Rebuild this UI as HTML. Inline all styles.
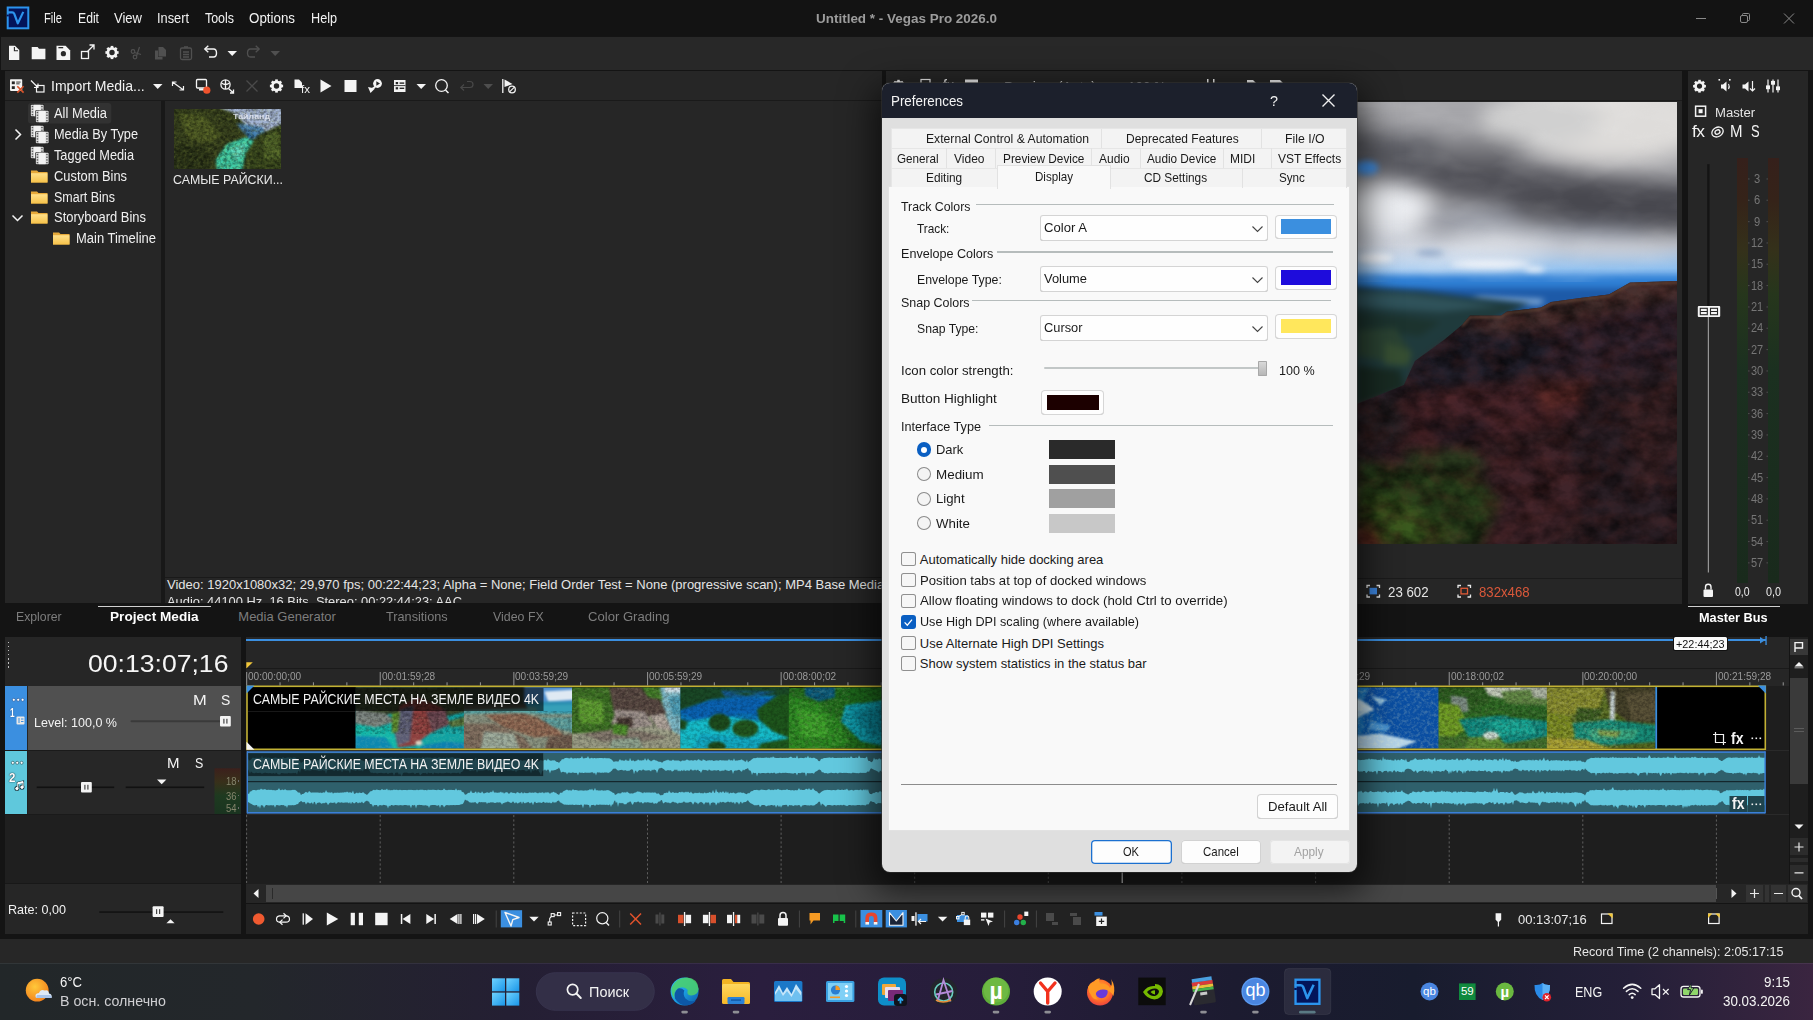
<!DOCTYPE html><html><head><meta charset="utf-8"><title>Vegas Pro</title><style>
html,body{margin:0;padding:0;background:#141414;overflow:hidden}
body{width:1813px;height:1020px;position:relative;font-family:"Liberation Sans",sans-serif}
.r{position:absolute;display:block}
.t{position:absolute;white-space:nowrap;transform-origin:0 50%;display:block}
</style></head><body>
<div class="r" style="left:0px;top:0px;width:1813px;height:36px;background:#131313;"></div>
<svg class="r" style="left:0px;top:0px;" width="36" height="36" viewBox="0 0 36 36"><rect x="7.7" y="7.5" width="20.6" height="20.8" fill="#03145a" stroke="#2c94ee" stroke-width="2"/><rect x="6.6" y="14.6" width="2.2" height="1.8" fill="#03145a"/><path d="M7 12.3H12.2Q13.7 12.3 14.3 13.8L17.8 23.4L23.3 11.9" fill="none" stroke="#2c94ee" stroke-width="2.2" stroke-linejoin="round"/></svg>
<span class="t" style="left:44.0px;top:8.4px;font-size:14px;line-height:20px;color:#f2f2f2;transform:scaleX(0.7980);">File</span>
<span class="t" style="left:78.0px;top:8.4px;font-size:14px;line-height:20px;color:#f2f2f2;transform:scaleX(0.8705);">Edit</span>
<span class="t" style="left:114.0px;top:8.4px;font-size:14px;line-height:20px;color:#f2f2f2;transform:scaleX(0.9305);">View</span>
<span class="t" style="left:157.0px;top:8.4px;font-size:14px;line-height:20px;color:#f2f2f2;transform:scaleX(0.9140);">Insert</span>
<span class="t" style="left:205.0px;top:8.4px;font-size:14px;line-height:20px;color:#f2f2f2;transform:scaleX(0.8874);">Tools</span>
<span class="t" style="left:249.0px;top:8.4px;font-size:14px;line-height:20px;color:#f2f2f2;transform:scaleX(0.9535);">Options</span>
<span class="t" style="left:311.0px;top:8.4px;font-size:14px;line-height:20px;color:#f2f2f2;transform:scaleX(0.9030);">Help</span>
<span class="t" style="left:816.0px;top:8.7px;font-size:13.5px;line-height:19px;color:#9c9c9c;font-weight:700;transform:scaleX(0.9969);">Untitled * - Vegas Pro 2026.0</span>
<svg class="r" style="left:1690px;top:8px;" width="120" height="20" viewBox="0 0 120 20"><g stroke="#8a8a8a" stroke-width="1" fill="none"><path d="M6 10.5H16"/><rect x="50.5" y="7.5" width="7" height="7" rx="1.5"/><path d="M52.5 7.5V6.5Q52.5 5.5 53.5 5.5H58.5Q59.5 5.5 59.5 6.5V11.5Q59.5 12.5 58.5 12.5H57.5"/><path d="M94 5.5L104 15.5M104 5.5L94 15.5"/></g></svg>
<div class="r" style="left:1px;top:37px;width:1812px;height:33px;background:#282828;"></div>
<svg class="r" style="left:0px;top:0px;overflow:visible;" width="1813" height="110" viewBox="0 0 1813 110"><path d="M9 45.8H15L19.3 50V59.9H9Z" fill="#f4f4f4"/><path d="M14.4 47V50.7H18" fill="none" stroke="#282828" stroke-width="1.1"/><path d="M31.7 47H37.6L39 48.7H45.4V59.2H31.7Z" fill="#f4f4f4"/><path d="M56.5 45.8H65.6L70.2 50.4V59.9H56.5Z" fill="#f4f4f4"/><circle cx="63.4" cy="53.7" r="2.6" fill="#282828"/><rect x="58.4" y="47" width="4.8" height="1.3" fill="#282828"/><g fill="none" stroke="#f4f4f4" stroke-width="1.3"><rect x="81.5" y="51.5" width="7" height="7"/><path d="M87 52L94 45M89.5 45H94V49.5"/></g><g transform="translate(112 52.5)"><circle r="4.09" fill="none" stroke="#f4f4f4" stroke-width="2.77"/><rect x="-1.32" y="-6.60" width="2.64" height="2.77" fill="#f4f4f4" transform="rotate(0)"/><rect x="-1.32" y="-6.60" width="2.64" height="2.77" fill="#f4f4f4" transform="rotate(45)"/><rect x="-1.32" y="-6.60" width="2.64" height="2.77" fill="#f4f4f4" transform="rotate(90)"/><rect x="-1.32" y="-6.60" width="2.64" height="2.77" fill="#f4f4f4" transform="rotate(135)"/><rect x="-1.32" y="-6.60" width="2.64" height="2.77" fill="#f4f4f4" transform="rotate(180)"/><rect x="-1.32" y="-6.60" width="2.64" height="2.77" fill="#f4f4f4" transform="rotate(225)"/><rect x="-1.32" y="-6.60" width="2.64" height="2.77" fill="#f4f4f4" transform="rotate(270)"/><rect x="-1.32" y="-6.60" width="2.64" height="2.77" fill="#f4f4f4" transform="rotate(315)"/></g><g fill="none" stroke="#505050" stroke-width="1.2"><circle cx="133" cy="51.5" r="1.8"/><circle cx="135" cy="57" r="1.8"/><path d="M134.5 52.5L141 54.5M136.5 56L139.5 47"/></g><path d="M158.5 47H163L166 50V56.5H158.5Z" fill="#505050"/><path d="M155 50.5H158V57H162.5V59.5H155Z" fill="#505050"/><g fill="none" stroke="#505050" stroke-width="1.3"><rect x="180.5" y="48" width="11" height="11.5" rx="1.5"/><path d="M183 52H189M183 54.5H189M183 57H189M184 47H188"/></g><path d="M205 49H213.5Q216.5 49 216.5 53Q216.5 57 213.5 57H209" fill="none" stroke="#f4f4f4" stroke-width="1.4"/><path d="M208.3 45.8L204.8 49L208.3 52.2" fill="none" stroke="#f4f4f4" stroke-width="1.4"/><path d="M227.5 51H237L232.2 56Z" fill="#f4f4f4"/><path d="M259 49H250.5Q247.5 49 247.5 53Q247.5 57 250.5 57H255" fill="none" stroke="#505050" stroke-width="1.3"/><path d="M255.7 45.8L259.2 49L255.7 52.2" fill="none" stroke="#505050" stroke-width="1.3"/><path d="M270.5 51H280L275.2 56Z" fill="#505050"/></svg>
<div class="r" style="left:5px;top:71px;width:877px;height:532px;background:#262626;"></div>
<div class="r" style="left:5px;top:100px;width:877px;height:1px;background:#1a1a1a;"></div>
<div class="r" style="left:161px;top:101px;width:4px;height:502px;background:#181818;"></div>
<svg class="r" style="left:0px;top:0px;" width="900" height="260" viewBox="0 0 900 260"><defs><linearGradient id="fold" x1="0" y1="0" x2="0" y2="1"><stop offset="0" stop-color="#ffe08a"/><stop offset="1" stop-color="#f6c24a"/></linearGradient></defs><rect x="10" y="79.3" width="12.2" height="11.6" rx="0.8" fill="#f4f4f4"/><g fill="#262626"><rect x="11.8" y="81.4" width="3" height="2.8"/><rect x="11.8" y="86.2" width="3" height="2.8"/><rect x="16.2" y="81.6" width="4.4" height="0.9"/><rect x="16.2" y="83.4" width="3.4" height="0.9"/></g><path d="M17.3 86.2L23.6 92.6M23.6 86.2L17.3 92.6" stroke="#d9552c" stroke-width="1.6" fill="none"/><g fill="none" stroke="#f4f4f4" stroke-width="1.2"><rect x="36.5" y="85.5" width="7.5" height="6.5"/><path d="M31 80.5L38 87.5M38 83.5V87.5H34"/></g><path d="M153 84H162.5L157.7 89Z" fill="#f4f4f4"/><g fill="none" stroke="#f4f4f4" stroke-width="1.2"><path d="M172.5 82L183.5 90M172.5 86V82H176.5M183.5 86V90H179.5"/></g><g fill="none" stroke="#f4f4f4" stroke-width="1.3"><rect x="196.5" y="79.5" width="10" height="8.5" rx="1"/></g><path d="M199 88.5H204V90.5H199Z" fill="#f4f4f4"/><circle cx="206.8" cy="90.2" r="3.6" fill="#f0532d"/><g fill="none" stroke="#f4f4f4" stroke-width="1.3"><circle cx="225.5" cy="84.5" r="4.6"/><path d="M221.5 83Q225.5 86 229.5 83M225.5 80V89"/><path d="M228.5 88.5L233.5 93M233.5 89.5V93H230"/></g><path d="M246.5 80.5L257.5 91.5M257.5 80.5L246.5 91.5" stroke="#4a4a4a" stroke-width="1.3" fill="none"/><g transform="translate(276.5 86)"><circle r="4.09" fill="none" stroke="#f4f4f4" stroke-width="2.77"/><rect x="-1.32" y="-6.60" width="2.64" height="2.77" fill="#f4f4f4" transform="rotate(0)"/><rect x="-1.32" y="-6.60" width="2.64" height="2.77" fill="#f4f4f4" transform="rotate(45)"/><rect x="-1.32" y="-6.60" width="2.64" height="2.77" fill="#f4f4f4" transform="rotate(90)"/><rect x="-1.32" y="-6.60" width="2.64" height="2.77" fill="#f4f4f4" transform="rotate(135)"/><rect x="-1.32" y="-6.60" width="2.64" height="2.77" fill="#f4f4f4" transform="rotate(180)"/><rect x="-1.32" y="-6.60" width="2.64" height="2.77" fill="#f4f4f4" transform="rotate(225)"/><rect x="-1.32" y="-6.60" width="2.64" height="2.77" fill="#f4f4f4" transform="rotate(270)"/><rect x="-1.32" y="-6.60" width="2.64" height="2.77" fill="#f4f4f4" transform="rotate(315)"/></g><path d="M294.5 79.5H299L302 82.5V88H294.5Z" fill="#f4f4f4"/><path d="M320.5 79.5L331.5 86L320.5 92.5Z" fill="#f4f4f4"/><rect x="344.5" y="80" width="12" height="12" fill="#f4f4f4"/><circle cx="377.5" cy="83.5" r="4.4" fill="#f4f4f4"/><path d="M376.3 81.3L380 83.5L376.3 85.7Z" fill="#262626"/><path d="M368 87L375 88.5L370.5 93Z" fill="#f4f4f4"/><path d="M372 89L375.5 86.5" stroke="#f4f4f4" stroke-width="1.6"/><rect x="394" y="80" width="11.5" height="12" fill="#f4f4f4"/><g fill="#262626"><rect x="395.7" y="82" width="2.4" height="2.2"/><rect x="395.7" y="87.2" width="2.4" height="2.2"/><rect x="399.6" y="82.4" width="4.6" height="1.4"/><rect x="399.6" y="87.6" width="4.6" height="1.4"/><rect x="394" y="85.2" width="11.5" height="0.9"/></g><path d="M416.5 84H426L421.2 89Z" fill="#f4f4f4"/><circle cx="441.5" cy="85.5" r="5.8" fill="none" stroke="#f4f4f4" stroke-width="1.3"/><path d="M445.5 90L448.5 93" stroke="#f4f4f4" stroke-width="1.5"/><path d="M461 87.5H470Q473 87.5 473 84.5Q473 81.5 470 81.5H467" fill="none" stroke="#484848" stroke-width="1.2"/><path d="M464 84.5L460.8 87.5L464 90.5" fill="none" stroke="#484848" stroke-width="1.2"/><path d="M483.5 84H493L488.2 89Z" fill="#4e4e4e"/><path d="M502.8 79V93" stroke="#f4f4f4" stroke-width="1.3"/><path d="M504.5 79.5L512.5 84L504.5 87Z" fill="#f4f4f4"/><circle cx="512" cy="89.5" r="3.3" fill="#262626" stroke="#f4f4f4" stroke-width="1.3"/><path d="M509.8 91.6L514.2 87.4" stroke="#f4f4f4" stroke-width="1.2"/><rect x="28" y="103" width="83.3" height="20.5" rx="3" fill="#323232"/><g transform="translate(31 104)"><g transform="translate(-0.2 0.8)"><rect x="-0.6" y="-0.6" width="14" height="12.6" rx="1" fill="#1a1a1a"/><rect x="0" y="0" width="12.8" height="11.4" rx="0.8" fill="#d9d9d9"/><rect x="3.1" y="0" width="6.6" height="11.4" fill="#f2f2f2"/><rect x="0.9" y="1.1" width="1.5" height="1.3" fill="#555"/><rect x="10.4" y="1.1" width="1.5" height="1.3" fill="#555"/><rect x="0.9" y="3.8" width="1.5" height="1.3" fill="#555"/><rect x="10.4" y="3.8" width="1.5" height="1.3" fill="#555"/><rect x="0.9" y="6.5" width="1.5" height="1.3" fill="#555"/><rect x="10.4" y="6.5" width="1.5" height="1.3" fill="#555"/><rect x="0.9" y="9.2" width="1.5" height="1.3" fill="#555"/><rect x="10.4" y="9.2" width="1.5" height="1.3" fill="#555"/></g><g transform="translate(4.8 6.8)"><rect x="-0.6" y="-0.6" width="14" height="12.6" rx="1" fill="#1a1a1a"/><rect x="0" y="0" width="12.8" height="11.4" rx="0.8" fill="#d9d9d9"/><rect x="3.1" y="0" width="6.6" height="11.4" fill="#f2f2f2"/><rect x="0.9" y="1.1" width="1.5" height="1.3" fill="#555"/><rect x="10.4" y="1.1" width="1.5" height="1.3" fill="#555"/><rect x="0.9" y="3.8" width="1.5" height="1.3" fill="#555"/><rect x="10.4" y="3.8" width="1.5" height="1.3" fill="#555"/><rect x="0.9" y="6.5" width="1.5" height="1.3" fill="#555"/><rect x="10.4" y="6.5" width="1.5" height="1.3" fill="#555"/><rect x="0.9" y="9.2" width="1.5" height="1.3" fill="#555"/><rect x="10.4" y="9.2" width="1.5" height="1.3" fill="#555"/></g></g><g transform="translate(31 125)"><g transform="translate(-0.2 0.8)"><rect x="-0.6" y="-0.6" width="14" height="12.6" rx="1" fill="#1a1a1a"/><rect x="0" y="0" width="12.8" height="11.4" rx="0.8" fill="#d9d9d9"/><rect x="3.1" y="0" width="6.6" height="11.4" fill="#f2f2f2"/><rect x="0.9" y="1.1" width="1.5" height="1.3" fill="#555"/><rect x="10.4" y="1.1" width="1.5" height="1.3" fill="#555"/><rect x="0.9" y="3.8" width="1.5" height="1.3" fill="#555"/><rect x="10.4" y="3.8" width="1.5" height="1.3" fill="#555"/><rect x="0.9" y="6.5" width="1.5" height="1.3" fill="#555"/><rect x="10.4" y="6.5" width="1.5" height="1.3" fill="#555"/><rect x="0.9" y="9.2" width="1.5" height="1.3" fill="#555"/><rect x="10.4" y="9.2" width="1.5" height="1.3" fill="#555"/></g><g transform="translate(4.8 6.8)"><rect x="-0.6" y="-0.6" width="14" height="12.6" rx="1" fill="#1a1a1a"/><rect x="0" y="0" width="12.8" height="11.4" rx="0.8" fill="#d9d9d9"/><rect x="3.1" y="0" width="6.6" height="11.4" fill="#f2f2f2"/><rect x="0.9" y="1.1" width="1.5" height="1.3" fill="#555"/><rect x="10.4" y="1.1" width="1.5" height="1.3" fill="#555"/><rect x="0.9" y="3.8" width="1.5" height="1.3" fill="#555"/><rect x="10.4" y="3.8" width="1.5" height="1.3" fill="#555"/><rect x="0.9" y="6.5" width="1.5" height="1.3" fill="#555"/><rect x="10.4" y="6.5" width="1.5" height="1.3" fill="#555"/><rect x="0.9" y="9.2" width="1.5" height="1.3" fill="#555"/><rect x="10.4" y="9.2" width="1.5" height="1.3" fill="#555"/></g></g><g transform="translate(31 146)"><g transform="translate(-0.2 0.8)"><rect x="-0.6" y="-0.6" width="14" height="12.6" rx="1" fill="#1a1a1a"/><rect x="0" y="0" width="12.8" height="11.4" rx="0.8" fill="#d9d9d9"/><rect x="3.1" y="0" width="6.6" height="11.4" fill="#f2f2f2"/><rect x="0.9" y="1.1" width="1.5" height="1.3" fill="#555"/><rect x="10.4" y="1.1" width="1.5" height="1.3" fill="#555"/><rect x="0.9" y="3.8" width="1.5" height="1.3" fill="#555"/><rect x="10.4" y="3.8" width="1.5" height="1.3" fill="#555"/><rect x="0.9" y="6.5" width="1.5" height="1.3" fill="#555"/><rect x="10.4" y="6.5" width="1.5" height="1.3" fill="#555"/><rect x="0.9" y="9.2" width="1.5" height="1.3" fill="#555"/><rect x="10.4" y="9.2" width="1.5" height="1.3" fill="#555"/></g><g transform="translate(4.8 6.8)"><rect x="-0.6" y="-0.6" width="14" height="12.6" rx="1" fill="#1a1a1a"/><rect x="0" y="0" width="12.8" height="11.4" rx="0.8" fill="#d9d9d9"/><rect x="3.1" y="0" width="6.6" height="11.4" fill="#f2f2f2"/><rect x="0.9" y="1.1" width="1.5" height="1.3" fill="#555"/><rect x="10.4" y="1.1" width="1.5" height="1.3" fill="#555"/><rect x="0.9" y="3.8" width="1.5" height="1.3" fill="#555"/><rect x="10.4" y="3.8" width="1.5" height="1.3" fill="#555"/><rect x="0.9" y="6.5" width="1.5" height="1.3" fill="#555"/><rect x="10.4" y="6.5" width="1.5" height="1.3" fill="#555"/><rect x="0.9" y="9.2" width="1.5" height="1.3" fill="#555"/><rect x="10.4" y="9.2" width="1.5" height="1.3" fill="#555"/></g></g><g transform="translate(31 170)"><path d="M0 0.5H6L7.5 2H16.5V12.5H0Z" fill="#e6a93a"/><path d="M0 3.2H16.5V12.5H0Z" fill="url(#fold)"/></g><g transform="translate(31 191)"><path d="M0 0.5H6L7.5 2H16.5V12.5H0Z" fill="#e6a93a"/><path d="M0 3.2H16.5V12.5H0Z" fill="url(#fold)"/></g><g transform="translate(31 211)"><path d="M0 0.5H6L7.5 2H16.5V12.5H0Z" fill="#e6a93a"/><path d="M0 3.2H16.5V12.5H0Z" fill="url(#fold)"/></g><g transform="translate(53 232)"><path d="M0 0.5H6L7.5 2H16.5V12.5H0Z" fill="#e6a93a"/><path d="M0 3.2H16.5V12.5H0Z" fill="url(#fold)"/></g><path d="M15.5 129.5L20.5 134.5L15.5 139.5" fill="none" stroke="#f4f4f4" stroke-width="1.5"/><path d="M12.5 215.5L17.5 220.5L22.5 215.5" fill="none" stroke="#f4f4f4" stroke-width="1.5"/></svg>
<span class="t" style="left:50.6px;top:75.8px;font-size:14.8px;line-height:21px;color:#f2f2f2;transform:scaleX(0.9494);">Import Media...</span>
<span class="t" style="left:301.0px;top:81.5px;font-size:11px;line-height:15px;color:#f2f2f2;transform:scaleX(1.0519);">fx</span>
<span class="t" style="left:54.0px;top:103.3px;font-size:14px;line-height:20px;color:#f0f0f0;transform:scaleX(0.9205);">All Media</span>
<span class="t" style="left:54.0px;top:124.3px;font-size:14px;line-height:20px;color:#f0f0f0;transform:scaleX(0.9097);">Media By Type</span>
<span class="t" style="left:54.0px;top:145.3px;font-size:14px;line-height:20px;color:#f0f0f0;transform:scaleX(0.9097);">Tagged Media</span>
<span class="t" style="left:54.0px;top:166.3px;font-size:14px;line-height:20px;color:#f0f0f0;transform:scaleX(0.9199);">Custom Bins</span>
<span class="t" style="left:54.0px;top:186.8px;font-size:14px;line-height:20px;color:#f0f0f0;transform:scaleX(0.8910);">Smart Bins</span>
<span class="t" style="left:54.0px;top:207.3px;font-size:14px;line-height:20px;color:#f0f0f0;transform:scaleX(0.9237);">Storyboard Bins</span>
<span class="t" style="left:76.0px;top:228.3px;font-size:14px;line-height:20px;color:#f0f0f0;transform:scaleX(0.9264);">Main Timeline</span>
<div class="r" style="left:174px;top:109px;width:107px;height:60px;overflow:hidden;background:#3a4a22"><svg width="107" height="60" viewBox="0 0 107 60"><defs><filter id="tb" color-interpolation-filters="sRGB"><feGaussianBlur stdDeviation="1.3"/></filter><filter id="tbn" color-interpolation-filters="sRGB" x="0" y="0" width="100%" height="100%"><feTurbulence type="fractalNoise" baseFrequency="0.3 0.34" numOctaves="3" seed="3"/><feColorMatrix type="matrix" values="0 0 0 0 0  0 0 0 0 0  0 0 0 0 0  2.4 0 0 0 -0.8"/></filter><filter id="tbl" color-interpolation-filters="sRGB" x="0" y="0" width="100%" height="100%"><feTurbulence type="fractalNoise" baseFrequency="0.3 0.34" numOctaves="3" seed="9"/><feColorMatrix type="matrix" values="0 0 0 0 0.75  0 0 0 0 0.8  0 0 0 0 0.3  0 2.4 0 0 -1.0"/></filter></defs><rect width="107" height="60" fill="#39441f"/><g filter="url(#tb)"><path d="M40 -3H110V20L86 25L72 16L60 4Z" fill="#a5b6d6"/><path d="M62 14L88 18L92 24L80 30L70 24Z" fill="#4d86b6"/><path d="M70 22L82 26L76 32Z" fill="#2f6a9a"/><path d="M50 36L72 28L80 32L72 44L68 63H44L40 50Z" fill="#3ecaa6"/><path d="M56 40L72 34L70 44L62 52Z" fill="#5fdcc0"/><path d="M-3 -3H44L62 12L66 26L52 36L42 50L40 63H-3Z" fill="#353f1d"/><path d="M4 4L30 6L48 26L36 34L14 30Z" fill="#4d5a24"/><path d="M0 36L30 38L38 52L34 63H0Z" fill="#2a3318"/><path d="M84 26L110 14V63H68L72 44L80 32Z" fill="#37461d"/><path d="M90 28L104 22L107 50L90 50Z" fill="#4e6228"/></g><rect width="107" height="60" filter="url(#tbn)" opacity=".4"/><rect width="107" height="60" filter="url(#tbl)" opacity=".16"/></svg></div>
<span class="t" style="left:233.0px;top:111.5px;font-size:7.5px;line-height:10px;color:rgba(235,238,246,.8);font-weight:700;transform:scaleX(1.1782);">Тайланд</span>
<span class="t" style="left:173.0px;top:170.5px;font-size:13px;line-height:18px;color:#e8e8e8;transform:scaleX(0.9536);">САМЫЕ РАЙСКИ...</span>
<div class="r" style="left:165px;top:576.8px;width:717px;height:1px;background:#1a1a1a;"></div>
<span class="t" style="left:167.0px;top:575.5px;font-size:13px;line-height:18px;color:#e4e4e4;">Video: 1920x1080x32; 29,970 fps; 00:22:44;23; Alpha = None; Field Order Test = None (progressive scan); MP4 Base Media</span>
<div class="r" style="left:167px;top:594px;width:715px;height:9px;overflow:hidden">
<span class="t" style="left:0.0px;top:-1.5px;font-size:13px;line-height:18px;color:#e4e4e4;transform:scaleX(0.9908);">Audio: 44100 Hz, 16 Bits, Stereo; 00:22:44;23; AAC</span>
</div>
<div class="r" style="left:886px;top:71px;width:796px;height:532.5px;background:#262626;"></div>
<div class="r" style="left:886px;top:100px;width:796px;height:1px;background:#1b1b1b;"></div>
<div class="r" style="left:886px;top:577.5px;width:796px;height:1px;background:#1b1b1b;"></div>
<svg class="r" style="left:0px;top:0px;" width="1400" height="100" viewBox="0 0 1400 100"><g transform="translate(898.5 86)"><circle r="3.84" fill="none" stroke="#f4f4f4" stroke-width="2.60"/><rect x="-1.24" y="-6.20" width="2.48" height="2.60" fill="#f4f4f4" transform="rotate(0)"/><rect x="-1.24" y="-6.20" width="2.48" height="2.60" fill="#f4f4f4" transform="rotate(45)"/><rect x="-1.24" y="-6.20" width="2.48" height="2.60" fill="#f4f4f4" transform="rotate(90)"/><rect x="-1.24" y="-6.20" width="2.48" height="2.60" fill="#f4f4f4" transform="rotate(135)"/><rect x="-1.24" y="-6.20" width="2.48" height="2.60" fill="#f4f4f4" transform="rotate(180)"/><rect x="-1.24" y="-6.20" width="2.48" height="2.60" fill="#f4f4f4" transform="rotate(225)"/><rect x="-1.24" y="-6.20" width="2.48" height="2.60" fill="#f4f4f4" transform="rotate(270)"/><rect x="-1.24" y="-6.20" width="2.48" height="2.60" fill="#f4f4f4" transform="rotate(315)"/></g><g fill="none" stroke="#f0f0f0" stroke-width="1.2"><rect x="921" y="79.5" width="9" height="11"/></g><rect x="965" y="79.5" width="13" height="11" fill="#f0f0f0"/><g fill="#f0f0f0"><rect x="1207" y="79" width="1.5" height="12"/><rect x="1213" y="79" width="1.5" height="12"/><path d="M1247 80H1253L1256 83V92H1247Z"/><path d="M1270 80H1280L1283 83V92H1270Z"/></g></svg>
<span class="t" style="left:943.0px;top:74.5px;font-size:16px;line-height:22px;color:#f0f0f0;transform:scaleX(0.8839);">fx</span>
<span class="t" style="left:1004.0px;top:75.5px;font-size:15px;line-height:21px;color:#d8d8d8;transform:scaleX(0.9353);">Preview (Auto)</span>
<span class="t" style="left:1128.0px;top:75.5px;font-size:15px;line-height:21px;color:#d8d8d8;transform:scaleX(0.8935);">100 %</span>
<div class="r" style="left:891px;top:102px;width:786px;height:442px;background:#3a2a2e;overflow:hidden"><svg class="r" style="left:0;top:0" width="786" height="442" viewBox="891 102 786 442"><defs><filter id="b10" color-interpolation-filters="sRGB" x="-30%" y="-30%" width="160%" height="160%"><feGaussianBlur stdDeviation="10"/></filter><filter id="b6" color-interpolation-filters="sRGB" x="-30%" y="-30%" width="160%" height="160%"><feGaussianBlur stdDeviation="6"/></filter><filter id="b3" color-interpolation-filters="sRGB" x="-30%" y="-30%" width="160%" height="160%"><feGaussianBlur stdDeviation="3"/></filter><filter id="b15" color-interpolation-filters="sRGB" x="-30%" y="-30%" width="160%" height="160%"><feGaussianBlur stdDeviation="1.4"/></filter><filter id="nz" color-interpolation-filters="sRGB" x="0" y="0" width="100%" height="100%"><feTurbulence type="fractalNoise" baseFrequency="0.045 0.06" numOctaves="4" seed="7"/><feColorMatrix type="matrix" values="0 0 0 0 0  0 0 0 0 0  0 0 0 0 0  1.6 0 0 0 -0.45"/></filter><filter id="nz2" color-interpolation-filters="sRGB" x="0" y="0" width="100%" height="100%"><feTurbulence type="fractalNoise" baseFrequency="0.05 0.07" numOctaves="4" seed="23"/><feColorMatrix type="matrix" values="0 0 0 0 0.40  0 0 0 0 0.17  0 0 0 0 0.16  0 1.7 0 0 -0.62"/></filter><filter id="nz3" color-interpolation-filters="sRGB" x="0" y="0" width="100%" height="100%"><feTurbulence type="fractalNoise" baseFrequency="0.02 0.045" numOctaves="3" seed="5"/><feColorMatrix type="matrix" values="0 0 0 0 1  0 0 0 0 1  0 0 0 0 1  1.8 0 0 0 -0.75"/></filter><linearGradient id="sky" gradientUnits="userSpaceOnUse" x1="0" y1="102" x2="0" y2="300"><stop offset="0" stop-color="#b9b8b8"/><stop offset="0.25" stop-color="#8c8c92"/><stop offset="0.5" stop-color="#7d8089"/><stop offset="0.72" stop-color="#c4cad6"/><stop offset="0.84" stop-color="#8fc0f0"/><stop offset="0.93" stop-color="#3a88dc"/><stop offset="1" stop-color="#1e5cae"/></linearGradient><linearGradient id="mt" gradientUnits="userSpaceOnUse" x1="1400" y1="300" x2="1680" y2="544"><stop offset="0" stop-color="#292430"/><stop offset="0.45" stop-color="#382226"/><stop offset="1" stop-color="#261c22"/></linearGradient><clipPath id="mtc"><path d="M1357 404L1404 385L1415 361L1444 340L1462 325L1470 315.5L1501 315.5L1507 311.5L1541 307.6L1551 302L1580 298L1609 294.5L1630 282.6L1680 281V548H1350V404Z"/></clipPath></defs><rect x="1340" y="100" width="345" height="210" fill="url(#sky)"/><g filter="url(#b10)"><rect x="1330" y="90" width="370" height="150" fill="#a4a4a8"/><ellipse cx="1610" cy="118" rx="110" ry="44" fill="#dedcda"/><ellipse cx="1540" cy="120" rx="60" ry="26" fill="#d0d0d0"/><ellipse cx="1400" cy="108" rx="70" ry="16" fill="#a6a6aa"/><path d="M1335 128Q1400 132 1450 146Q1520 166 1600 176Q1650 182 1700 180V232Q1620 232 1560 220Q1500 206 1450 192Q1400 176 1335 170Z" fill="#4d4d54"/><ellipse cx="1610" cy="206" rx="100" ry="20" fill="#47474e"/><ellipse cx="1500" cy="184" rx="70" ry="18" fill="#505057"/><ellipse cx="1400" cy="152" rx="60" ry="18" fill="#5a5b62"/><ellipse cx="1480" cy="150" rx="50" ry="12" fill="#77777c"/><ellipse cx="1385" cy="208" rx="46" ry="22" fill="#eceef2"/><ellipse cx="1380" cy="238" rx="60" ry="9" fill="#d2d6de"/><ellipse cx="1500" cy="241" rx="60" ry="10" fill="#dde0e6"/><ellipse cx="1610" cy="246" rx="66" ry="8" fill="#d0d4dc"/><ellipse cx="1475" cy="220" rx="50" ry="8" fill="#8a8f9c"/><ellipse cx="1580" cy="232" rx="70" ry="5" fill="#8e94a2"/><ellipse cx="1450" cy="262" rx="100" ry="7" fill="#e2e8f2"/></g><g filter="url(#b3)"><ellipse cx="1366" cy="168" rx="12" ry="7" fill="#3d8be0"/><ellipse cx="1375" cy="258" rx="18" ry="5" fill="#eef1f6"/><ellipse cx="1490" cy="264" rx="40" ry="4" fill="#eef2f8"/><ellipse cx="1535" cy="270" rx="10" ry="3" fill="#eef2f8"/><ellipse cx="1430" cy="253" rx="14" ry="3" fill="#8fa6c6"/></g><g filter="url(#b3)"><rect x="1340" y="276" width="345" height="16" fill="#2f7fd4"/><rect x="1340" y="288" width="345" height="40" fill="#1d5aa8"/><path d="M1480 297L1545 300L1540 304L1470 300Z" fill="#a8c8e6"/></g><g filter="url(#b3)"><path d="M1340 286L1420 291L1470 297L1530 304L1500 318L1440 345L1415 365L1405 390L1340 410Z" fill="#1f3a3c"/><path d="M1340 290L1410 294L1460 300L1500 306L1440 312L1380 308L1340 306Z" fill="#2f525a"/><path d="M1340 312L1400 316L1440 322L1420 336L1370 330L1340 332Z" fill="#1c332e"/><path d="M1357 330L1395 328L1410 350L1390 362L1357 356Z" fill="#2a4232"/><path d="M1385 342L1412 352L1408 366L1384 364Z" fill="#364e32"/><path d="M1357 366L1400 370L1404 388L1357 404Z" fill="#182a22"/></g><g clip-path="url(#mtc)"><rect x="1340" y="270" width="345" height="280" fill="url(#mt)"/><g filter="url(#b6)"><path d="M1462 325L1501 316L1541 308L1580 298L1630 283L1680 281V300L1630 306L1580 318L1520 330L1470 340Z" fill="#4a3230"/><path d="M1415 362L1462 330L1520 334L1580 340L1560 372L1440 388L1404 388Z" fill="#22202c"/><path d="M1560 330L1680 300V370L1600 380L1540 372Z" fill="#322430"/><path d="M1380 400L1450 388L1540 384L1600 384L1580 420L1500 440L1420 452L1370 450Z" fill="#46242a"/><path d="M1530 388L1590 380L1600 400L1545 410Z" fill="#5c2a28"/><path d="M1425 420L1480 418L1495 440L1440 446Z" fill="#2a1c24"/><path d="M1357 404L1400 396L1410 440L1357 456Z" fill="#2a2226"/><path d="M1590 380L1680 360V548H1600L1560 470Z" fill="#2c2027"/><path d="M1620 400L1680 380V450L1640 500Z" fill="#3a2428"/><path d="M1470 460L1560 440L1590 500L1540 548H1480L1500 500Z" fill="#40242a"/><path d="M1357 460L1400 466L1470 470L1500 500L1480 548H1357Z" fill="#2a421c"/><path d="M1357 490L1400 500L1450 530L1440 548H1357Z" fill="#3a5a1e"/><path d="M1400 452L1470 448L1490 470L1420 474Z" fill="#2a3a1e"/><path d="M1357 524L1376 530L1384 548H1357Z" fill="#6a3020"/></g><rect x="1350" y="280" width="335" height="270" filter="url(#nz)" opacity=".7"/><rect x="1350" y="280" width="335" height="270" filter="url(#nz2)" opacity=".3"/><g filter="url(#b15)" fill="none" stroke="#7a5640" stroke-width="2" opacity=".8"><path d="M1462 326L1470 317L1501 317L1507 313L1541 309L1551 303.5L1580 299.5L1609 296L1630 284L1680 282.5"/></g></g><rect x="1350" y="102" width="335" height="180" filter="url(#nz3)" opacity=".10"/></svg></div>
<svg class="r" style="left:0px;top:0px;pointer-events:none" width="1813" height="620" viewBox="0 0 1813 620"><g fill="none" stroke="#e8e8e8" stroke-width="1.3"><path d="M1367 588V585.5H1370M1376.5 585.5H1379.5V588M1379.5 594.5V597H1376.5M1370 597H1367V594.5"/></g><rect x="1369.5" y="587.8" width="7.5" height="6.6" fill="#3d86e0"/><g fill="none" stroke="#e8e8e8" stroke-width="1.3"><path d="M1458 588V585.5H1461M1467.5 585.5H1470.5V588M1470.5 594.5V597H1467.5M1461 597H1458V594.5"/></g><rect x="1461" y="588.3" width="6.5" height="5.6" fill="none" stroke="#e05a36" stroke-width="1.3"/></svg>
<span class="t" style="left:1387.6px;top:581.8px;font-size:14px;line-height:20px;color:#e6e6e6;transform:scaleX(0.9482);">23 602</span>
<span class="t" style="left:1479.4px;top:581.8px;font-size:14px;line-height:20px;color:#d9583a;transform:scaleX(0.9421);">832x468</span>
<div class="r" style="left:1687.5px;top:71px;width:120.7px;height:532.5px;background:#262626;"></div>
<svg class="r" style="left:0px;top:0px;pointer-events:none" width="1813" height="620" viewBox="0 0 1813 620"><g transform="translate(1699.5 86.2)"><circle r="3.97" fill="none" stroke="#f4f4f4" stroke-width="2.69"/><rect x="-1.28" y="-6.40" width="2.56" height="2.69" fill="#f4f4f4" transform="rotate(0)"/><rect x="-1.28" y="-6.40" width="2.56" height="2.69" fill="#f4f4f4" transform="rotate(45)"/><rect x="-1.28" y="-6.40" width="2.56" height="2.69" fill="#f4f4f4" transform="rotate(90)"/><rect x="-1.28" y="-6.40" width="2.56" height="2.69" fill="#f4f4f4" transform="rotate(135)"/><rect x="-1.28" y="-6.40" width="2.56" height="2.69" fill="#f4f4f4" transform="rotate(180)"/><rect x="-1.28" y="-6.40" width="2.56" height="2.69" fill="#f4f4f4" transform="rotate(225)"/><rect x="-1.28" y="-6.40" width="2.56" height="2.69" fill="#f4f4f4" transform="rotate(270)"/><rect x="-1.28" y="-6.40" width="2.56" height="2.69" fill="#f4f4f4" transform="rotate(315)"/></g><path d="M1721 84.5H1723L1726.5 81.5V91.5L1723 88.5H1721Z" fill="#f4f4f4"/><g fill="#f4f4f4"><rect x="1718.5" y="79" width="1.6" height="1.6"/><rect x="1729" y="79" width="1.6" height="1.6"/></g><path d="M1728.5 84Q1730 86.5 1728.5 89" stroke="#f4f4f4" fill="none" stroke-width="1.1"/><path d="M1742.5 84.5H1745L1748.5 81.5V91.5L1745 88.5H1742.5Z" fill="#f4f4f4"/><path d="M1752.5 81V91M1750 88.5L1752.5 91L1755 88.5" stroke="#f4f4f4" fill="none" stroke-width="1.2"/><g stroke="#f4f4f4" stroke-width="1.2" fill="#f4f4f4"><path d="M1768 79.5V92.5M1773 79.5V92.5M1778 79.5V92.5" fill="none"/><rect x="1766.6" y="86" width="2.8" height="2.6"/><rect x="1771.6" y="81.5" width="2.8" height="2.6"/><rect x="1776.6" y="87" width="2.8" height="2.6"/></g><rect x="1695.6" y="106.2" width="10" height="10" fill="none" stroke="#f4f4f4" stroke-width="1.5"/><rect x="1698.6" y="109.2" width="4" height="4" fill="#f4f4f4"/><g fill="none" stroke="#f4f4f4" stroke-width="1.3" transform="rotate(-30 1717.5 132)"><ellipse cx="1717.5" cy="132" rx="6" ry="4.6"/><ellipse cx="1717.5" cy="132" rx="2.6" ry="2"/></g><rect x="1707.2" y="164.2" width="2.4" height="143" fill="#141414"/><rect x="1707.8" y="316" width="1.1" height="256.5" fill="#a2a2a2"/><rect x="1697.8" y="306" width="22.4" height="11" rx="1" fill="#f4f4f4"/><g fill="none" stroke="#262626" stroke-width="1.1"><rect x="1700.3" y="308.3" width="7" height="6.4"/><rect x="1710.5" y="308.3" width="7" height="6.4"/><path d="M1700.3 311.5H1707.3M1710.5 311.5H1717.5"/></g><defs><linearGradient id="mtr" x1="0" y1="0" x2="0" y2="1"><stop offset="0" stop-color="#35201b"/><stop offset="0.1" stop-color="#352319"/><stop offset="0.22" stop-color="#34311a"/><stop offset="0.32" stop-color="#26361c"/><stop offset="0.5" stop-color="#1b3020"/><stop offset="1" stop-color="#192a1c"/></linearGradient></defs><rect x="1737" y="158" width="11" height="425" fill="url(#mtr)"/><rect x="1768" y="158" width="11" height="425" fill="url(#mtr)"/><rect x="1748.3" y="178.4" width="1.1" height="1.1" fill="#5a5a5a"/><rect x="1766.6" y="178.4" width="1.1" height="1.1" fill="#5a5a5a"/><rect x="1748.3" y="199.7" width="1.1" height="1.1" fill="#5a5a5a"/><rect x="1766.6" y="199.7" width="1.1" height="1.1" fill="#5a5a5a"/><rect x="1748.3" y="221.1" width="1.1" height="1.1" fill="#5a5a5a"/><rect x="1766.6" y="221.1" width="1.1" height="1.1" fill="#5a5a5a"/><rect x="1748.3" y="242.4" width="1.1" height="1.1" fill="#5a5a5a"/><rect x="1766.6" y="242.4" width="1.1" height="1.1" fill="#5a5a5a"/><rect x="1748.3" y="263.7" width="1.1" height="1.1" fill="#5a5a5a"/><rect x="1766.6" y="263.7" width="1.1" height="1.1" fill="#5a5a5a"/><rect x="1748.3" y="285.0" width="1.1" height="1.1" fill="#5a5a5a"/><rect x="1766.6" y="285.0" width="1.1" height="1.1" fill="#5a5a5a"/><rect x="1748.3" y="306.4" width="1.1" height="1.1" fill="#5a5a5a"/><rect x="1766.6" y="306.4" width="1.1" height="1.1" fill="#5a5a5a"/><rect x="1748.3" y="327.7" width="1.1" height="1.1" fill="#5a5a5a"/><rect x="1766.6" y="327.7" width="1.1" height="1.1" fill="#5a5a5a"/><rect x="1748.3" y="349.0" width="1.1" height="1.1" fill="#5a5a5a"/><rect x="1766.6" y="349.0" width="1.1" height="1.1" fill="#5a5a5a"/><rect x="1748.3" y="370.4" width="1.1" height="1.1" fill="#5a5a5a"/><rect x="1766.6" y="370.4" width="1.1" height="1.1" fill="#5a5a5a"/><rect x="1748.3" y="391.7" width="1.1" height="1.1" fill="#5a5a5a"/><rect x="1766.6" y="391.7" width="1.1" height="1.1" fill="#5a5a5a"/><rect x="1748.3" y="413.0" width="1.1" height="1.1" fill="#5a5a5a"/><rect x="1766.6" y="413.0" width="1.1" height="1.1" fill="#5a5a5a"/><rect x="1748.3" y="434.4" width="1.1" height="1.1" fill="#5a5a5a"/><rect x="1766.6" y="434.4" width="1.1" height="1.1" fill="#5a5a5a"/><rect x="1748.3" y="455.7" width="1.1" height="1.1" fill="#5a5a5a"/><rect x="1766.6" y="455.7" width="1.1" height="1.1" fill="#5a5a5a"/><rect x="1748.3" y="477.0" width="1.1" height="1.1" fill="#5a5a5a"/><rect x="1766.6" y="477.0" width="1.1" height="1.1" fill="#5a5a5a"/><rect x="1748.3" y="498.3" width="1.1" height="1.1" fill="#5a5a5a"/><rect x="1766.6" y="498.3" width="1.1" height="1.1" fill="#5a5a5a"/><rect x="1748.3" y="519.7" width="1.1" height="1.1" fill="#5a5a5a"/><rect x="1766.6" y="519.7" width="1.1" height="1.1" fill="#5a5a5a"/><rect x="1748.3" y="541.0" width="1.1" height="1.1" fill="#5a5a5a"/><rect x="1766.6" y="541.0" width="1.1" height="1.1" fill="#5a5a5a"/><rect x="1748.3" y="562.3" width="1.1" height="1.1" fill="#5a5a5a"/><rect x="1766.6" y="562.3" width="1.1" height="1.1" fill="#5a5a5a"/><rect x="1703.5" y="589.5" width="9.5" height="7.5" rx="1" fill="#f4f4f4"/><path d="M1705.5 589.5V587Q1705.5 584.3 1708.2 584.3Q1711 584.3 1711 587V589.5" fill="none" stroke="#f4f4f4" stroke-width="1.4"/></svg>
<span class="t" style="left:1715.4px;top:103.7px;font-size:12.5px;line-height:18px;color:#e6e6e6;transform:scaleX(1.0498);">Master</span>
<span class="t" style="left:1691.5px;top:119.5px;font-size:17px;line-height:24px;color:#f4f4f4;transform:scaleX(1.0210);letter-spacing:-0.5px;">fx</span>
<span class="t" style="left:1730.3px;top:121.0px;font-size:16px;line-height:22px;color:#f4f4f4;transform:scaleX(0.9379);">M</span>
<span class="t" style="left:1751.2px;top:121.0px;font-size:16px;line-height:22px;color:#f4f4f4;transform:scaleX(0.8058);">S</span>
<span class="t" style="left:1754.2px;top:170.9px;font-size:12px;line-height:17px;color:#767676;transform:scaleX(0.9291);">3</span>
<span class="t" style="left:1754.2px;top:192.2px;font-size:12px;line-height:17px;color:#767676;transform:scaleX(0.9291);">6</span>
<span class="t" style="left:1754.2px;top:213.6px;font-size:12px;line-height:17px;color:#767676;transform:scaleX(0.9291);">9</span>
<span class="t" style="left:1751.2px;top:234.9px;font-size:12px;line-height:17px;color:#767676;transform:scaleX(0.9141);">12</span>
<span class="t" style="left:1751.2px;top:256.2px;font-size:12px;line-height:17px;color:#767676;transform:scaleX(0.9141);">15</span>
<span class="t" style="left:1751.2px;top:277.5px;font-size:12px;line-height:17px;color:#767676;transform:scaleX(0.9141);">18</span>
<span class="t" style="left:1751.2px;top:298.9px;font-size:12px;line-height:17px;color:#767676;transform:scaleX(0.9141);">21</span>
<span class="t" style="left:1751.2px;top:320.2px;font-size:12px;line-height:17px;color:#767676;transform:scaleX(0.9141);">24</span>
<span class="t" style="left:1751.2px;top:341.5px;font-size:12px;line-height:17px;color:#767676;transform:scaleX(0.9141);">27</span>
<span class="t" style="left:1751.2px;top:362.9px;font-size:12px;line-height:17px;color:#767676;transform:scaleX(0.9141);">30</span>
<span class="t" style="left:1751.2px;top:384.2px;font-size:12px;line-height:17px;color:#767676;transform:scaleX(0.9141);">33</span>
<span class="t" style="left:1751.2px;top:405.5px;font-size:12px;line-height:17px;color:#767676;transform:scaleX(0.9141);">36</span>
<span class="t" style="left:1751.2px;top:426.9px;font-size:12px;line-height:17px;color:#767676;transform:scaleX(0.9141);">39</span>
<span class="t" style="left:1751.2px;top:448.2px;font-size:12px;line-height:17px;color:#767676;transform:scaleX(0.9141);">42</span>
<span class="t" style="left:1751.2px;top:469.5px;font-size:12px;line-height:17px;color:#767676;transform:scaleX(0.9141);">45</span>
<span class="t" style="left:1751.2px;top:490.8px;font-size:12px;line-height:17px;color:#767676;transform:scaleX(0.9141);">48</span>
<span class="t" style="left:1751.2px;top:512.2px;font-size:12px;line-height:17px;color:#767676;transform:scaleX(0.9141);">51</span>
<span class="t" style="left:1751.2px;top:533.5px;font-size:12px;line-height:17px;color:#767676;transform:scaleX(0.9141);">54</span>
<span class="t" style="left:1751.2px;top:554.8px;font-size:12px;line-height:17px;color:#767676;transform:scaleX(0.9141);">57</span>
<span class="t" style="left:1734.6px;top:583.0px;font-size:12.5px;line-height:18px;color:#ececec;transform:scaleX(0.8403);">0,0</span>
<span class="t" style="left:1765.5px;top:583.0px;font-size:12.5px;line-height:18px;color:#ececec;transform:scaleX(0.8633);">0,0</span>
<div class="r" style="left:98px;top:605.5px;width:113px;height:1.6px;background:#cfcfcf;"></div>
<span class="t" style="left:16.4px;top:608.3px;font-size:13px;line-height:18px;color:#7d7d7d;transform:scaleX(0.9421);">Explorer</span>
<span class="t" style="left:109.7px;top:608.3px;font-size:13px;line-height:18px;color:#ffffff;font-weight:700;transform:scaleX(1.0483);">Project Media</span>
<span class="t" style="left:238.3px;top:608.3px;font-size:13px;line-height:18px;color:#7d7d7d;">Media Generator</span>
<span class="t" style="left:385.7px;top:608.3px;font-size:13px;line-height:18px;color:#7d7d7d;transform:scaleX(0.9763);">Transitions</span>
<span class="t" style="left:493.3px;top:608.3px;font-size:13px;line-height:18px;color:#7d7d7d;transform:scaleX(0.9524);">Video FX</span>
<span class="t" style="left:588.0px;top:608.3px;font-size:13px;line-height:18px;color:#7d7d7d;transform:scaleX(1.0072);">Color Grading</span>
<div class="r" style="left:1687.7px;top:605.5px;width:92.5px;height:1.6px;background:#cfcfcf;"></div>
<span class="t" style="left:1699.3px;top:608.5px;font-size:13px;line-height:18px;color:#ffffff;font-weight:700;transform:scaleX(0.9790);">Master Bus</span>
<div class="r" style="left:5px;top:636.5px;width:236px;height:247px;background:#262626;"></div>
<div class="r" style="left:5px;top:750px;width:236px;height:133.5px;background:#1f1f1f;"></div>
<div class="r" style="left:7.6px;top:641.5px;width:1.7px;height:1.7px;background:#bdbdbd;"></div>
<div class="r" style="left:7.6px;top:645.6px;width:1.7px;height:1.7px;background:#bdbdbd;"></div>
<div class="r" style="left:7.6px;top:649.7px;width:1.7px;height:1.7px;background:#bdbdbd;"></div>
<div class="r" style="left:7.6px;top:653.8px;width:1.7px;height:1.7px;background:#bdbdbd;"></div>
<div class="r" style="left:7.6px;top:657.9px;width:1.7px;height:1.7px;background:#bdbdbd;"></div>
<div class="r" style="left:7.6px;top:662.0px;width:1.7px;height:1.7px;background:#bdbdbd;"></div>
<div class="r" style="left:7.6px;top:666.1px;width:1.7px;height:1.7px;background:#bdbdbd;"></div>
<span class="t" style="left:88.3px;top:646.8px;font-size:24px;line-height:34px;color:#f6f6f6;transform:scaleX(1.1075);">00:13:07;16</span>
<div class="r" style="left:5px;top:685.5px;width:22.4px;height:64.5px;background:#3b8fe0;"></div>
<div class="r" style="left:27.7px;top:685.5px;width:213.3px;height:64.5px;background:#505050;"></div>
<div class="r" style="left:5px;top:750px;width:236px;height:1px;background:#1a1a1a;"></div>
<div class="r" style="left:5px;top:751px;width:22.4px;height:63px;background:#5fc8dc;"></div>
<div class="r" style="left:27.7px;top:751px;width:213.3px;height:63px;background:#272727;"></div>
<div class="r" style="left:5px;top:814px;width:236px;height:1px;background:#1a1a1a;"></div>
<svg class="r" style="left:0px;top:0px;" width="250" height="900" viewBox="0 0 250 900"><circle cx="13.8" cy="699.8" r="1.5" fill="#ffffff" stroke="#2a5a9a" stroke-width="0.7"/><circle cx="12.8" cy="762.8" r="1.5" fill="#ffffff" stroke="#2a5a66" stroke-width="0.7"/><circle cx="18.2" cy="699.8" r="1.5" fill="#ffffff" stroke="#2a5a9a" stroke-width="0.7"/><circle cx="17.2" cy="762.8" r="1.5" fill="#ffffff" stroke="#2a5a66" stroke-width="0.7"/><circle cx="22.6" cy="699.8" r="1.5" fill="#ffffff" stroke="#2a5a9a" stroke-width="0.7"/><circle cx="21.6" cy="762.8" r="1.5" fill="#ffffff" stroke="#2a5a66" stroke-width="0.7"/><rect x="16.5" y="716.5" width="8" height="8" rx="1" fill="#e8e8e8"/><rect x="18.5" y="718" width="1" height="5" fill="#3b8fe0"/><rect x="21" y="718.5" width="2.5" height="1" fill="#3b8fe0"/><rect x="21" y="721" width="2.5" height="1" fill="#3b8fe0"/><g stroke="#1e3a42" stroke-width="2.2" fill="#1e3a42"><path d="M17.8 788.5V782.8L23 781.6V787" fill="none"/><circle cx="16.9" cy="788.6" r="1.4"/><circle cx="22" cy="787.2" r="1.4"/></g><g stroke="#ffffff" stroke-width="1" fill="#ffffff"><path d="M17.8 788.5V782.8L23 781.6V787" fill="none"/><path d="M17.8 783.4L23 782.2" fill="none" stroke-width="1.6"/><circle cx="16.9" cy="788.6" r="1.2"/><circle cx="22" cy="787.2" r="1.2"/></g><rect x="130.5" y="720.3" width="92" height="2" rx="1" fill="#3a3a3a"/><rect x="220" y="716" width="10.8" height="10.4" rx="1" fill="#f4f4f4"/><rect x="223.3" y="718.8" width="1.2" height="4.8" fill="#444"/><rect x="226.3" y="718.8" width="1.2" height="4.8" fill="#444"/><rect x="36.7" y="786.5" width="77.5" height="1.6" fill="#111"/><rect x="125.7" y="786.5" width="78.5" height="1.6" fill="#111"/><rect x="81" y="782" width="10.8" height="10.4" rx="1" fill="#f4f4f4"/><rect x="84.3" y="784.8" width="1.2" height="4.8" fill="#444"/><rect x="87.3" y="784.8" width="1.2" height="4.8" fill="#444"/><path d="M157 779.5H166.4L161.7 784.2Z" fill="#f4f4f4"/><defs><linearGradient id="sm" x1="0" y1="0" x2="0" y2="1"><stop offset="0" stop-color="#3c201c"/><stop offset="0.3" stop-color="#38301a"/><stop offset="0.6" stop-color="#1e3a20"/><stop offset="1" stop-color="#1a3420"/></linearGradient></defs><rect x="214.5" y="768.3" width="26" height="45.7" fill="url(#sm)"/></svg>
<span class="t" style="left:9.5px;top:704.2px;font-size:12.5px;line-height:18px;color:#ffffff;font-weight:700;transform:scaleX(0.6618);text-shadow:0 0 1.5px #1a3a6a;">1</span>
<span class="t" style="left:8.5px;top:768.5px;font-size:12.5px;line-height:18px;color:#ffffff;font-weight:700;transform:scaleX(0.9207);text-shadow:0 0 1.5px #12303a,0 0 1px #12303a;">2</span>
<span class="t" style="left:192.5px;top:689.3px;font-size:15.5px;line-height:22px;color:#f4f4f4;transform:scaleX(1.0611);">M</span>
<span class="t" style="left:221.2px;top:689.3px;font-size:15.5px;line-height:22px;color:#f4f4f4;transform:scaleX(0.8995);">S</span>
<span class="t" style="left:166.7px;top:752.3px;font-size:15.5px;line-height:22px;color:#f4f4f4;transform:scaleX(0.9682);">M</span>
<span class="t" style="left:195.0px;top:752.3px;font-size:15.5px;line-height:22px;color:#f4f4f4;transform:scaleX(0.8028);">S</span>
<span class="t" style="left:34.2px;top:712.7px;font-size:13.5px;line-height:19px;color:#f2f2f2;transform:scaleX(0.9294);">Level: 100,0 %</span>
<span class="t" style="left:225.8px;top:774.2px;font-size:11px;line-height:15px;color:#85856c;transform:scaleX(0.8583);">18</span>
<span class="t" style="left:225.8px;top:788.5px;font-size:11px;line-height:15px;color:#85856c;transform:scaleX(0.8583);">36</span>
<span class="t" style="left:225.8px;top:800.8px;font-size:11px;line-height:15px;color:#85856c;transform:scaleX(0.8583);">54</span>
<div class="r" style="left:238px;top:780px;width:1px;height:1.5px;background:#6c6c6c;"></div>
<div class="r" style="left:238px;top:794.5px;width:1px;height:1.5px;background:#6c6c6c;"></div>
<div class="r" style="left:238px;top:807px;width:1px;height:1.5px;background:#6c6c6c;"></div>
<div class="r" style="left:5px;top:883.8px;width:236px;height:50px;background:#262626;"></div>
<div class="r" style="left:5px;top:883.3px;width:236px;height:0.8px;background:#181818;"></div>
<span class="t" style="left:8.3px;top:900.3px;font-size:13.5px;line-height:19px;color:#f2f2f2;transform:scaleX(0.9312);">Rate: 0,00</span>
<svg class="r" style="left:90px;top:900px;" width="150" height="30" viewBox="0 0 150 30"><rect x="9.3" y="11.4" width="124" height="1.3" fill="#0e0e0e"/><rect x="62.6" y="6.3" width="11" height="10.6" rx="1" fill="#f4f4f4"/><rect x="66" y="9.2" width="1.2" height="4.8" fill="#444"/><rect x="69" y="9.2" width="1.2" height="4.8" fill="#444"/><path d="M76.4 23.3H84.6L80.5 19.2Z" fill="#f4f4f4"/></svg>
<div class="r" style="left:246px;top:636.5px;width:1542.5px;height:49px;background:#262626;"></div>
<div class="r" style="left:246px;top:685.5px;width:1542.5px;height:198px;background:#1e1e1e;"></div>
<div class="r" style="left:246px;top:667.6px;width:1542.5px;height:1px;background:#1a1a1a;"></div>
<div class="r" style="left:246px;top:750px;width:1542.5px;height:1px;background:#2a2a2a;"></div>
<div class="r" style="left:246px;top:814px;width:1542.5px;height:1px;background:#2a2a2a;"></div>
<div class="r" style="left:246px;top:639.3px;width:1520px;height:2px;background:#3b8fe0;"></div>
<svg class="r" style="left:1755px;top:634px;" width="16" height="14" viewBox="0 0 16 14"><path d="M5 3L10 6.3L5 9.6Z" fill="#3b8fe0"/><rect x="10.4" y="2" width="1.3" height="9" fill="#3b8fe0"/></svg>
<div class="r" style="left:1673.6px;top:637px;width:53px;height:13.2px;background:#fafafa;border-radius:1.5px;box-shadow:0 0 0 1px #111"></div>
<span class="t" style="left:1676.0px;top:635.9px;font-size:11.5px;line-height:16px;color:#111;transform:scaleX(0.9422);">+22:44;23</span>
<svg class="r" style="left:245px;top:660px;" width="10" height="9" viewBox="0 0 10 9"><path d="M1.3 2.2H7.8L1.3 8.4Z" fill="#f2c73a"/></svg>
<span class="t" style="left:248.0px;top:668.3px;font-size:11.5px;line-height:16px;color:#9a9a9a;transform:scaleX(0.8758);">00:00:00;00</span>
<span class="t" style="left:381.6px;top:668.3px;font-size:11.5px;line-height:16px;color:#9a9a9a;transform:scaleX(0.8758);">00:01:59;28</span>
<span class="t" style="left:515.2px;top:668.3px;font-size:11.5px;line-height:16px;color:#9a9a9a;transform:scaleX(0.8758);">00:03:59;29</span>
<span class="t" style="left:648.9px;top:668.3px;font-size:11.5px;line-height:16px;color:#9a9a9a;transform:scaleX(0.8758);">00:05:59;29</span>
<span class="t" style="left:782.5px;top:668.3px;font-size:11.5px;line-height:16px;color:#9a9a9a;transform:scaleX(0.8758);">00:08:00;02</span>
<span class="t" style="left:916.1px;top:668.3px;font-size:11.5px;line-height:16px;color:#9a9a9a;transform:scaleX(0.8758);">00:10:00;00</span>
<span class="t" style="left:1049.7px;top:668.3px;font-size:11.5px;line-height:16px;color:#9a9a9a;transform:scaleX(0.8883);">00:11:59;28</span>
<span class="t" style="left:1183.3px;top:668.3px;font-size:11.5px;line-height:16px;color:#9a9a9a;transform:scaleX(0.8758);">00:13:59;29</span>
<span class="t" style="left:1317.0px;top:668.3px;font-size:11.5px;line-height:16px;color:#9a9a9a;transform:scaleX(0.8758);">00:15:59;29</span>
<span class="t" style="left:1450.6px;top:668.3px;font-size:11.5px;line-height:16px;color:#9a9a9a;transform:scaleX(0.8758);">00:18:00;02</span>
<span class="t" style="left:1584.2px;top:668.3px;font-size:11.5px;line-height:16px;color:#9a9a9a;transform:scaleX(0.8758);">00:20:00;00</span>
<span class="t" style="left:1717.8px;top:668.3px;font-size:11.5px;line-height:16px;color:#9a9a9a;transform:scaleX(0.8758);">00:21:59;28</span>
<svg class="r" style="left:0px;top:0px;" width="1813" height="900" viewBox="0 0 1813 900"><rect x="246.1" y="672" width="1.1" height="13.5" fill="#8c8c8c"/><rect x="279.5" y="682.3" width="1.1" height="3.2" fill="#8c8c8c"/><rect x="312.9" y="682.3" width="1.1" height="3.2" fill="#8c8c8c"/><rect x="346.3" y="682.3" width="1.1" height="3.2" fill="#8c8c8c"/><path d="M246.6 815V883" stroke="#5e5e5e" stroke-width="1" stroke-dasharray="2.2 2.2" fill="none"/><rect x="379.7" y="672" width="1.1" height="13.5" fill="#8c8c8c"/><rect x="413.1" y="682.3" width="1.1" height="3.2" fill="#8c8c8c"/><rect x="446.5" y="682.3" width="1.1" height="3.2" fill="#8c8c8c"/><rect x="479.9" y="682.3" width="1.1" height="3.2" fill="#8c8c8c"/><path d="M380.2 815V883" stroke="#5e5e5e" stroke-width="1" stroke-dasharray="2.2 2.2" fill="none"/><rect x="513.3" y="672" width="1.1" height="13.5" fill="#8c8c8c"/><rect x="546.7" y="682.3" width="1.1" height="3.2" fill="#8c8c8c"/><rect x="580.1" y="682.3" width="1.1" height="3.2" fill="#8c8c8c"/><rect x="613.5" y="682.3" width="1.1" height="3.2" fill="#8c8c8c"/><path d="M513.8 815V883" stroke="#5e5e5e" stroke-width="1" stroke-dasharray="2.2 2.2" fill="none"/><rect x="647.0" y="672" width="1.1" height="13.5" fill="#8c8c8c"/><rect x="680.4" y="682.3" width="1.1" height="3.2" fill="#8c8c8c"/><rect x="713.8" y="682.3" width="1.1" height="3.2" fill="#8c8c8c"/><rect x="747.2" y="682.3" width="1.1" height="3.2" fill="#8c8c8c"/><path d="M647.5 815V883" stroke="#5e5e5e" stroke-width="1" stroke-dasharray="2.2 2.2" fill="none"/><rect x="780.6" y="672" width="1.1" height="13.5" fill="#8c8c8c"/><rect x="814.0" y="682.3" width="1.1" height="3.2" fill="#8c8c8c"/><rect x="847.4" y="682.3" width="1.1" height="3.2" fill="#8c8c8c"/><rect x="880.8" y="682.3" width="1.1" height="3.2" fill="#8c8c8c"/><path d="M781.1 815V883" stroke="#5e5e5e" stroke-width="1" stroke-dasharray="2.2 2.2" fill="none"/><rect x="914.2" y="672" width="1.1" height="13.5" fill="#8c8c8c"/><rect x="947.6" y="682.3" width="1.1" height="3.2" fill="#8c8c8c"/><rect x="981.0" y="682.3" width="1.1" height="3.2" fill="#8c8c8c"/><rect x="1014.4" y="682.3" width="1.1" height="3.2" fill="#8c8c8c"/><path d="M914.7 815V883" stroke="#5e5e5e" stroke-width="1" stroke-dasharray="2.2 2.2" fill="none"/><rect x="1047.8" y="672" width="1.1" height="13.5" fill="#8c8c8c"/><rect x="1081.2" y="682.3" width="1.1" height="3.2" fill="#8c8c8c"/><rect x="1114.6" y="682.3" width="1.1" height="3.2" fill="#8c8c8c"/><rect x="1148.0" y="682.3" width="1.1" height="3.2" fill="#8c8c8c"/><path d="M1048.3 815V883" stroke="#5e5e5e" stroke-width="1" stroke-dasharray="2.2 2.2" fill="none"/><rect x="1181.4" y="672" width="1.1" height="13.5" fill="#8c8c8c"/><rect x="1214.8" y="682.3" width="1.1" height="3.2" fill="#8c8c8c"/><rect x="1248.2" y="682.3" width="1.1" height="3.2" fill="#8c8c8c"/><rect x="1281.6" y="682.3" width="1.1" height="3.2" fill="#8c8c8c"/><path d="M1181.9 815V883" stroke="#5e5e5e" stroke-width="1" stroke-dasharray="2.2 2.2" fill="none"/><rect x="1315.1" y="672" width="1.1" height="13.5" fill="#8c8c8c"/><rect x="1348.5" y="682.3" width="1.1" height="3.2" fill="#8c8c8c"/><rect x="1381.9" y="682.3" width="1.1" height="3.2" fill="#8c8c8c"/><rect x="1415.3" y="682.3" width="1.1" height="3.2" fill="#8c8c8c"/><path d="M1315.6 815V883" stroke="#5e5e5e" stroke-width="1" stroke-dasharray="2.2 2.2" fill="none"/><rect x="1448.7" y="672" width="1.1" height="13.5" fill="#8c8c8c"/><rect x="1482.1" y="682.3" width="1.1" height="3.2" fill="#8c8c8c"/><rect x="1515.5" y="682.3" width="1.1" height="3.2" fill="#8c8c8c"/><rect x="1548.9" y="682.3" width="1.1" height="3.2" fill="#8c8c8c"/><path d="M1449.2 815V883" stroke="#5e5e5e" stroke-width="1" stroke-dasharray="2.2 2.2" fill="none"/><rect x="1582.3" y="672" width="1.1" height="13.5" fill="#8c8c8c"/><rect x="1615.7" y="682.3" width="1.1" height="3.2" fill="#8c8c8c"/><rect x="1649.1" y="682.3" width="1.1" height="3.2" fill="#8c8c8c"/><rect x="1682.5" y="682.3" width="1.1" height="3.2" fill="#8c8c8c"/><path d="M1582.8 815V883" stroke="#5e5e5e" stroke-width="1" stroke-dasharray="2.2 2.2" fill="none"/><rect x="1715.9" y="672" width="1.1" height="13.5" fill="#8c8c8c"/><rect x="1749.3" y="682.3" width="1.1" height="3.2" fill="#8c8c8c"/><rect x="1782.7" y="682.3" width="1.1" height="3.2" fill="#8c8c8c"/><path d="M1716.4 815V883" stroke="#5e5e5e" stroke-width="1" stroke-dasharray="2.2 2.2" fill="none"/><defs><clipPath id="vc"><rect x="248" y="687.5" width="1516.5" height="61"/></clipPath><filter id="tb2" color-interpolation-filters="sRGB" x="-10%" y="-10%" width="120%" height="120%"><feGaussianBlur stdDeviation="1.3"/></filter><filter id="tb1" color-interpolation-filters="sRGB" x="-10%" y="-10%" width="120%" height="120%"><feGaussianBlur stdDeviation="0.7"/></filter><filter id="tnd" color-interpolation-filters="sRGB" x="0" y="0" width="100%" height="100%"><feTurbulence type="fractalNoise" baseFrequency="0.3 0.34" numOctaves="3" seed="11"/><feColorMatrix type="matrix" values="0 0 0 0 0  0 0 0 0 0  0 0 0 0 0  2.4 0 0 0 -0.85"/></filter><filter id="tnl" color-interpolation-filters="sRGB" x="0" y="0" width="100%" height="100%"><feTurbulence type="fractalNoise" baseFrequency="0.3 0.34" numOctaves="3" seed="31"/><feColorMatrix type="matrix" values="0 0 0 0 1  0 0 0 0 1  0 0 0 0 0.8  0 2.4 0 0 -1.0"/></filter></defs><rect x="247" y="686.3" width="1518.3" height="63" fill="#000"/><svg x="355.6" y="687.5" width="108.5" height="61" viewBox="0 0 108 61" preserveAspectRatio="none" overflow="hidden"><rect width="108" height="61" fill="#0f9fa0"/><g filter="url(#tb2)"><path d="M-4 -4H112V24L84 30L60 22L40 26L0 30Z" fill="#3d4a30"/><path d="M-2 22L30 26L40 34L20 40L-2 36Z" fill="#7c8580"/><path d="M-2 36L20 40L40 36L46 64H-2Z" fill="#12b6a8"/><path d="M-2 48L30 50L40 64H-2Z" fill="#0d88b0"/><path d="M44 18L62 10L86 20L94 36L74 46L66 52L60 58L42 60L38 40Z" fill="#8d3f3e"/><path d="M44 22L58 18L54 54L42 58L38 40Z" fill="#5b5c74"/><path d="M70 24L90 22L92 38L76 44Z" fill="#6a4650"/><path d="M36 26L44 24L42 44L36 46Z" fill="#5a8a2c"/><path d="M92 34L112 28V40L96 42Z" fill="#55723a"/><path d="M60 58L74 46L94 40L112 38V64H60Z" fill="#11a2a2"/><path d="M66 58L90 54L112 56V64H66Z" fill="#0d80b0"/><ellipse cx="63" cy="55.5" rx="3.4" ry="2.4" fill="#ddd2c2"/></g><path d="M0 0H108V46H0Z" filter="url(#tnd)" opacity="0.303"/><path d="M0 30H108V61H0Z" filter="url(#tnl)" opacity="0.108"/></svg><svg x="463.9" y="687.5" width="108.5" height="61" viewBox="0 0 108 61" preserveAspectRatio="none" overflow="hidden"><rect width="108" height="61" fill="#7d8f84"/><g filter="url(#tb2)"><path d="M-4 -4H70V18L40 22L-4 20Z" fill="#2e3a30"/><path d="M60 -4H112V16H60Z" fill="#4e8fd0"/><path d="M80 4L112 2V12L84 14Z" fill="#dfe9f3"/><path d="M62 14H112V20H62Z" fill="#2a8fb0"/><path d="M-4 19H112V27H-4Z" fill="#5aa6a6"/><path d="M70 18L112 17V26L74 25Z" fill="#36a0b8"/><path d="M-4 18L60 17L64 21L-4 23Z" fill="#4a4a40"/><path d="M-4 27L50 25L112 30V64H-4Z" fill="#86907f"/><path d="M20 27L60 26L84 34L100 48L70 50L40 40Z" fill="#8a6450"/><path d="M-4 36L30 36L60 50L70 64H-4Z" fill="#7c6a5c"/><path d="M20 44L50 46L56 64H16Z" fill="#9aa89a"/><path d="M74 30L112 30V46L90 40Z" fill="#5a9c9c"/><path d="M84 50L112 46V64H80Z" fill="#6a564a"/></g><path d="M0 24H108V61H0Z" filter="url(#tnd)" opacity="0.248"/><path d="M0 26H108V61H0Z" filter="url(#tnl)" opacity="0.15"/></svg><svg x="572.2" y="687.5" width="108.5" height="61" viewBox="0 0 108 61" preserveAspectRatio="none" overflow="hidden"><rect width="108" height="61" fill="#3d6a26"/><g filter="url(#tb2)"><path d="M84 -4H112V52L98 42L92 24Z" fill="#7ab6c6"/><path d="M92 -4H112V5H92Z" fill="#cfe0ea"/><path d="M96 10L112 8V30L100 28Z" fill="#4a9ab4"/><path d="M32 -4H70L86 10L94 26L74 30L44 26L30 10Z" fill="#54443f"/><path d="M40 22L72 24L82 38L56 44L38 36Z" fill="#9a8e8a"/><path d="M44 30L60 30L60 40L46 40Z" fill="#40322e"/><path d="M-4 -4H36L42 28L34 48L-4 46Z" fill="#3a6e22"/><path d="M6 10L30 14L32 36L8 36Z" fill="#5a9a2e"/><path d="M66 -4H86L90 12L76 10Z" fill="#3f7a26"/><path d="M-4 46L40 44L80 38L100 44L112 50V64H-4Z" fill="#989a84"/><path d="M10 46L40 42L70 44L96 50L70 54L30 54Z" fill="#7d7268"/><path d="M76 28L92 26L100 44L84 40Z" fill="#b0a49c"/><path d="M40 52L66 50L72 64H36Z" fill="#8a9e8c"/><path d="M42 36L56 38L54 48L40 46Z" fill="#4a8a28"/></g><path d="M0 0H108V61H0Z" filter="url(#tnd)" opacity="0.275"/><path d="M0 0H108V61H0Z" filter="url(#tnl)" opacity="0.12"/></svg><svg x="680.5" y="687.5" width="108.5" height="61" viewBox="0 0 108 61" preserveAspectRatio="none" overflow="hidden"><rect width="108" height="61" fill="#0b74b6"/><g filter="url(#tb2)"><path d="M-4 -4H112V8L64 8L30 12L-4 24Z" fill="#1a4826"/><path d="M40 3L96 4L70 10L44 9Z" fill="#155a90"/><path d="M48 5L80 5L66 8Z" fill="#1e5228"/><path d="M-4 24L30 13L64 10L112 12V30L60 26L20 34Z" fill="#0a62b2"/><path d="M-4 36L40 28L82 34L112 44V64H-4Z" fill="#16bcca"/><path d="M20 46L60 50L100 52V64H10Z" fill="#12a8c2"/><ellipse cx="39" cy="35" rx="11" ry="9" fill="#1d4c1e"/><ellipse cx="64.5" cy="41" rx="13" ry="9" fill="#22561f"/><path d="M76 22L96 8L112 6V52L92 44L78 32Z" fill="#1e561c"/><ellipse cx="36" cy="59" rx="9" ry="5" fill="#1d4c1e"/><path d="M-4 30L7 34L5 42L-4 42Z" fill="#1d4c1e"/><path d="M80 56L112 50V64H76Z" fill="#1f5a1e"/></g><path d="M0 0H108V61H0Z" filter="url(#tnd)" opacity="0.22"/></svg><svg x="788.8" y="687.5" width="108.5" height="61" viewBox="0 0 108 61" preserveAspectRatio="none" overflow="hidden"><rect width="108" height="61" fill="#226c1c"/><g filter="url(#tb2)"><path d="M16 -4H46V10L30 14L16 8Z" fill="#0a5878"/><path d="M56 18L100 10L112 12V50L92 58L72 54L52 34Z" fill="#0f98a8"/><path d="M62 24L98 18L104 42L82 50Z" fill="#0c8496"/><path d="M-4 8L30 16L50 34L60 56L30 64H-4Z" fill="#2a8620"/><path d="M8 20L36 28L40 50L12 50Z" fill="#3a9e28"/><path d="M46 -4H112V10L72 16L50 12Z" fill="#1e681c"/><path d="M100 30L112 28V64H70L92 58Z" fill="#1e681c"/></g><path d="M0 0H108V61H0Z" filter="url(#tnd)" opacity="0.275"/><path d="M0 0H60V61H0Z" filter="url(#tnl)" opacity="0.12"/></svg><svg x="897.1" y="687.5" width="108.5" height="61" viewBox="0 0 108 61" preserveAspectRatio="none" overflow="hidden"><rect width="108" height="61" fill="#0b5cb2"/><g filter="url(#tb2)"><path d="M20 -4H112V64H60L50 30Z" fill="#0a4ea2"/><path d="M-4 -4H40L30 20L34 40L20 64H-4Z" fill="#1b7ac6"/><path d="M-4 8L30 12L44 22L20 32L-4 28Z" fill="#c6dfee"/><path d="M2 20L40 24L20 34L2 32Z" fill="#a8cce4"/><path d="M8 50L50 46L86 54L60 64H12Z" fill="#b4d4ea"/><path d="M40 8L56 12L50 18Z" fill="#8abce0"/><path d="M40 34L60 38L56 44L38 42Z" fill="#4a96d4"/></g><path d="M0 0H108V61H0Z" filter="url(#tnl)" opacity="0.21"/></svg><svg x="1005.4" y="687.5" width="108.5" height="61" viewBox="0 0 108 61" preserveAspectRatio="none" overflow="hidden"><rect width="108" height="61" fill="#226c1c"/><g filter="url(#tb2)"><path d="M16 -4H46V10L30 14L16 8Z" fill="#0a5878"/><path d="M56 18L100 10L112 12V50L92 58L72 54L52 34Z" fill="#0f98a8"/><path d="M62 24L98 18L104 42L82 50Z" fill="#0c8496"/><path d="M-4 8L30 16L50 34L60 56L30 64H-4Z" fill="#2a8620"/><path d="M8 20L36 28L40 50L12 50Z" fill="#3a9e28"/><path d="M46 -4H112V10L72 16L50 12Z" fill="#1e681c"/><path d="M100 30L112 28V64H70L92 58Z" fill="#1e681c"/></g><path d="M0 0H108V61H0Z" filter="url(#tnd)" opacity="0.275"/><path d="M0 0H60V61H0Z" filter="url(#tnl)" opacity="0.12"/></svg><svg x="1113.7" y="687.5" width="108.5" height="61" viewBox="0 0 108 61" preserveAspectRatio="none" overflow="hidden"><rect width="108" height="61" fill="#3d6a26"/><g filter="url(#tb2)"><path d="M84 -4H112V52L98 42L92 24Z" fill="#7ab6c6"/><path d="M92 -4H112V5H92Z" fill="#cfe0ea"/><path d="M96 10L112 8V30L100 28Z" fill="#4a9ab4"/><path d="M32 -4H70L86 10L94 26L74 30L44 26L30 10Z" fill="#54443f"/><path d="M40 22L72 24L82 38L56 44L38 36Z" fill="#9a8e8a"/><path d="M44 30L60 30L60 40L46 40Z" fill="#40322e"/><path d="M-4 -4H36L42 28L34 48L-4 46Z" fill="#3a6e22"/><path d="M6 10L30 14L32 36L8 36Z" fill="#5a9a2e"/><path d="M66 -4H86L90 12L76 10Z" fill="#3f7a26"/><path d="M-4 46L40 44L80 38L100 44L112 50V64H-4Z" fill="#989a84"/><path d="M10 46L40 42L70 44L96 50L70 54L30 54Z" fill="#7d7268"/><path d="M76 28L92 26L100 44L84 40Z" fill="#b0a49c"/><path d="M40 52L66 50L72 64H36Z" fill="#8a9e8c"/><path d="M42 36L56 38L54 48L40 46Z" fill="#4a8a28"/></g><path d="M0 0H108V61H0Z" filter="url(#tnd)" opacity="0.275"/><path d="M0 0H108V61H0Z" filter="url(#tnl)" opacity="0.12"/></svg><svg x="1222.0" y="687.5" width="108.5" height="61" viewBox="0 0 108 61" preserveAspectRatio="none" overflow="hidden"><rect width="108" height="61" fill="#0b74b6"/><g filter="url(#tb2)"><path d="M-4 -4H112V8L64 8L30 12L-4 24Z" fill="#1a4826"/><path d="M40 3L96 4L70 10L44 9Z" fill="#155a90"/><path d="M48 5L80 5L66 8Z" fill="#1e5228"/><path d="M-4 24L30 13L64 10L112 12V30L60 26L20 34Z" fill="#0a62b2"/><path d="M-4 36L40 28L82 34L112 44V64H-4Z" fill="#16bcca"/><path d="M20 46L60 50L100 52V64H10Z" fill="#12a8c2"/><ellipse cx="39" cy="35" rx="11" ry="9" fill="#1d4c1e"/><ellipse cx="64.5" cy="41" rx="13" ry="9" fill="#22561f"/><path d="M76 22L96 8L112 6V52L92 44L78 32Z" fill="#1e561c"/><ellipse cx="36" cy="59" rx="9" ry="5" fill="#1d4c1e"/><path d="M-4 30L7 34L5 42L-4 42Z" fill="#1d4c1e"/><path d="M80 56L112 50V64H76Z" fill="#1f5a1e"/></g><path d="M0 0H108V61H0Z" filter="url(#tnd)" opacity="0.22"/></svg><svg x="1330.3" y="687.5" width="108.5" height="61" viewBox="0 0 108 61" preserveAspectRatio="none" overflow="hidden"><rect width="108" height="61" fill="#0b5cb2"/><g filter="url(#tb2)"><path d="M20 -4H112V64H60L50 30Z" fill="#0a4ea2"/><path d="M-4 -4H40L30 20L34 40L20 64H-4Z" fill="#1b7ac6"/><path d="M-4 8L30 12L44 22L20 32L-4 28Z" fill="#c6dfee"/><path d="M2 20L40 24L20 34L2 32Z" fill="#a8cce4"/><path d="M8 50L50 46L86 54L60 64H12Z" fill="#b4d4ea"/><path d="M40 8L56 12L50 18Z" fill="#8abce0"/><path d="M40 34L60 38L56 44L38 42Z" fill="#4a96d4"/></g><path d="M0 0H108V61H0Z" filter="url(#tnl)" opacity="0.21"/></svg><svg x="1438.6" y="687.5" width="108.5" height="61" viewBox="0 0 108 61" preserveAspectRatio="none" overflow="hidden"><rect width="108" height="61" fill="#2d6822"/><g filter="url(#tb2)"><path d="M40 -4H112V12L80 14L50 8Z" fill="#c4ccbc"/><path d="M62 4L112 0V26L86 24L66 14Z" fill="#5e8442"/><path d="M90 -4H112V12L94 10Z" fill="#a8b0a0"/><path d="M-4 -4H44L52 14L30 24L-4 22Z" fill="#2a5a1e"/><path d="M12 8L28 10L30 24L14 26Z" fill="#7a8a82"/><path d="M-4 14L20 18L30 40L12 52L-4 50Z" fill="#6c9a22"/><path d="M20 32L60 28L112 30V50L70 56L30 50Z" fill="#0f887e"/><path d="M50 34L90 32L98 46L60 48Z" fill="#16a494"/><path d="M58 16L112 18V34L70 30Z" fill="#2b6422"/><path d="M-4 48L30 50L70 56L112 48V64H-4Z" fill="#3f6e2a"/><path d="M30 50L60 48L70 64H26Z" fill="#5a8a30"/><ellipse cx="52" cy="48" rx="8" ry="4" fill="#cfdcd4"/></g><path d="M0 0H108V61H0Z" filter="url(#tnd)" opacity="0.275"/><path d="M0 0H108V61H0Z" filter="url(#tnl)" opacity="0.12"/></svg><svg x="1546.9" y="687.5" width="108.5" height="61" viewBox="0 0 108 61" preserveAspectRatio="none" overflow="hidden"><rect width="108" height="61" fill="#566a20"/><g filter="url(#tb2)"><path d="M-4 -4H60L52 20L20 28L-4 24Z" fill="#868a2c"/><path d="M56 -4H112V36L80 34L62 20Z" fill="#46422a"/><path d="M78 6L112 4V34L84 32Z" fill="#5a5238"/><path d="M63.5 4L67.5 4L67.5 34L62.5 34Z" fill="#cbd8dc"/><path d="M20 36L60 32L112 38V54L60 58L20 52Z" fill="#178c78"/><path d="M40 42L92 42L86 52L46 52Z" fill="#3aa882"/><path d="M-4 24L24 28L28 50L-4 64Z" fill="#78881f"/><path d="M-4 50L40 52L70 64H-4Z" fill="#a69e30"/><path d="M30 20L56 22L50 34L28 34Z" fill="#3a5a20"/><path d="M50 42L74 44L70 50L52 48Z" fill="#7a9a4a"/></g><path d="M0 0H108V61H0Z" filter="url(#tnd)" opacity="0.303"/><path d="M0 0H70V61H0Z" filter="url(#tnl)" opacity="0.18"/></svg><rect x="1655.3" y="687" width="1.8" height="62" fill="#3b8fe0"/><rect x="247" y="686.3" width="1518.3" height="63" fill="none" stroke="#c2b134" stroke-width="1.6"/><rect x="248" y="688" width="295.5" height="23" fill="rgba(0,0,0,0.58)"/><rect x="248" y="711" width="107" height="0.8" fill="#1e1e1e"/><path d="M246.5 685.5H254.5L246.5 693.5Z" fill="#3b8fe0"/><path d="M1765.8 685.5H1757.8L1765.8 693.5Z" fill="#3b8fe0"/><path d="M246.5 749.8H254.5L246.5 741.8Z" fill="#f4f4f4"/><g fill="none" stroke="#f0f0f0" stroke-width="1.2"><path d="M1715.5 732V742.5H1726M1713 734.5H1723.5V745"/></g><rect x="1751.5" y="737.5" width="1.6" height="1.6" fill="#f0f0f0"/><rect x="1755.5" y="737.5" width="1.6" height="1.6" fill="#f0f0f0"/><rect x="1759.5" y="737.5" width="1.6" height="1.6" fill="#f0f0f0"/><rect x="247" y="751.8" width="1518.3" height="61.4" fill="#2f606c"/><path d="M248.0 758.6 249.0 760.7 250.0 760.0 251.0 759.4 252.0 758.2 253.0 757.6 254.0 758.0 255.0 758.1 256.0 757.8 257.0 757.8 258.0 758.0 259.0 757.7 260.0 757.8 261.0 757.9 262.0 755.5 263.0 757.9 264.0 757.8 265.0 757.6 266.0 757.5 267.0 757.8 268.0 757.8 269.0 757.6 270.0 758.2 271.0 758.1 272.0 758.2 273.0 758.0 274.0 758.1 275.0 757.6 276.0 757.5 277.0 757.9 278.0 758.0 279.0 758.1 280.0 757.7 281.0 758.2 282.0 758.0 283.0 757.1 284.0 758.1 285.0 757.9 286.0 758.1 287.0 757.5 288.0 757.5 289.0 757.6 290.0 757.8 291.0 757.5 292.0 758.2 293.0 757.5 294.0 757.4 295.0 757.6 296.0 758.1 297.0 759.2 298.0 760.8 299.0 760.6 300.0 761.2 301.0 763.3 302.0 762.0 303.0 761.8 304.0 759.8 305.0 760.7 306.0 759.6 307.0 760.8 308.0 760.6 309.0 760.6 310.0 760.4 311.0 760.5 312.0 760.3 313.0 761.3 314.0 758.6 315.0 761.6 316.0 760.6 317.0 759.8 318.0 760.2 319.0 760.6 320.0 760.6 321.0 760.4 322.0 760.0 323.0 759.5 324.0 759.6 325.0 761.4 326.0 759.6 327.0 760.7 328.0 760.5 329.0 760.5 330.0 759.7 331.0 760.6 332.0 759.5 333.0 760.6 334.0 760.8 335.0 760.8 336.0 761.5 337.0 761.4 338.0 760.9 339.0 761.5 340.0 760.8 341.0 761.2 342.0 760.3 343.0 760.3 344.0 761.5 345.0 760.7 346.0 760.5 347.0 760.4 348.0 760.5 349.0 761.6 350.0 760.6 351.0 760.4 352.0 760.7 353.0 760.5 354.0 760.3 355.0 760.3 356.0 760.5 357.0 761.0 358.0 760.6 359.0 760.2 360.0 759.7 361.0 759.7 362.0 760.4 363.0 760.4 364.0 761.3 365.0 761.5 366.0 761.8 367.0 762.4 368.0 762.0 369.0 760.6 370.0 759.3 371.0 759.0 372.0 758.5 373.0 757.9 374.0 757.7 375.0 757.8 376.0 757.5 377.0 758.2 378.0 757.7 379.0 757.5 380.0 758.0 381.0 757.5 382.0 757.5 383.0 757.7 384.0 758.1 385.0 758.1 386.0 757.8 387.0 758.1 388.0 757.9 389.0 758.0 390.0 757.6 391.0 757.6 392.0 757.4 393.0 758.1 394.0 758.1 395.0 757.5 396.0 757.8 397.0 758.1 398.0 758.2 399.0 757.5 400.0 758.0 401.0 757.9 402.0 758.0 403.0 757.4 404.0 757.8 405.0 757.9 406.0 758.1 407.0 758.2 408.0 757.6 409.0 758.0 410.0 757.8 411.0 757.6 412.0 757.4 413.0 758.1 414.0 757.9 415.0 757.8 416.0 758.1 417.0 758.2 418.0 757.8 419.0 757.8 420.0 758.1 421.0 758.2 422.0 757.8 423.0 757.1 424.0 758.2 425.0 757.4 426.0 757.8 427.0 757.5 428.0 757.6 429.0 757.8 430.0 757.6 431.0 757.7 432.0 758.2 433.0 757.7 434.0 757.7 435.0 757.6 436.0 757.7 437.0 758.2 438.0 757.9 439.0 757.1 440.0 757.7 441.0 757.7 442.0 758.1 443.0 757.8 444.0 757.5 445.0 758.1 446.0 757.7 447.0 757.4 448.0 757.9 449.0 757.7 450.0 757.5 451.0 757.6 452.0 757.1 453.0 757.2 454.0 757.8 455.0 757.9 456.0 757.9 457.0 757.8 458.0 758.0 459.0 757.9 460.0 757.7 461.0 758.5 462.0 760.4 463.0 760.3 464.0 760.8 465.0 762.4 466.0 762.5 467.0 761.4 468.0 761.6 469.0 761.9 470.0 760.8 471.0 760.4 472.0 760.2 473.0 760.4 474.0 760.7 475.0 758.8 476.0 757.6 477.0 760.6 478.0 760.2 479.0 760.2 480.0 760.3 481.0 760.3 482.0 760.7 483.0 760.3 484.0 760.5 485.0 760.6 486.0 760.7 487.0 759.5 488.0 760.6 489.0 760.5 490.0 760.4 491.0 759.9 492.0 760.4 493.0 761.7 494.0 759.7 495.0 761.4 496.0 760.4 497.0 760.2 498.0 760.7 499.0 759.2 500.0 760.2 501.0 760.4 502.0 758.7 503.0 760.1 504.0 761.1 505.0 760.3 506.0 761.0 507.0 760.9 508.0 760.3 509.0 760.3 510.0 760.3 511.0 760.7 512.0 760.3 513.0 760.3 514.0 760.7 515.0 760.0 516.0 760.7 517.0 759.8 518.0 760.4 519.0 760.7 520.0 760.3 521.0 759.7 522.0 760.9 523.0 760.4 524.0 760.5 525.0 760.3 526.0 760.4 527.0 761.2 528.0 760.5 529.0 760.3 530.0 760.3 531.0 760.6 532.0 760.3 533.0 760.5 534.0 761.8 535.0 761.5 536.0 760.3 537.0 760.6 538.0 761.6 539.0 761.7 540.0 760.4 541.0 760.0 542.0 760.7 543.0 760.6 544.0 760.4 545.0 759.5 546.0 760.5 547.0 760.5 548.0 758.6 549.0 760.3 550.0 760.2 551.0 761.0 552.0 760.3 553.0 760.6 554.0 760.3 555.0 760.6 556.0 761.4 557.0 762.0 558.0 762.1 559.0 763.0 560.0 761.5 561.0 760.8 562.0 759.1 563.0 759.5 564.0 758.8 565.0 758.0 566.0 757.9 567.0 757.8 568.0 758.2 569.0 758.3 570.0 758.5 571.0 757.2 572.0 758.3 573.0 758.4 574.0 758.5 575.0 758.0 576.0 758.4 577.0 758.3 578.0 758.0 579.0 758.5 580.0 758.0 581.0 757.9 582.0 755.9 583.0 758.5 584.0 758.2 585.0 758.3 586.0 757.7 587.0 757.9 588.0 756.1 589.0 758.3 590.0 758.5 591.0 758.1 592.0 757.7 593.0 758.5 594.0 758.0 595.0 758.0 596.0 758.4 597.0 758.0 598.0 758.3 599.0 758.0 600.0 757.9 601.0 758.1 602.0 758.0 603.0 758.2 604.0 758.3 605.0 757.8 606.0 758.4 607.0 758.0 608.0 758.4 609.0 758.0 610.0 758.8 611.0 759.1 612.0 760.1 613.0 760.9 614.0 762.2 615.0 760.9 616.0 761.8 617.0 761.0 618.0 762.0 619.0 760.5 620.0 759.0 621.0 760.5 622.0 760.2 623.0 760.6 624.0 760.7 625.0 760.4 626.0 759.3 627.0 761.1 628.0 760.2 629.0 761.2 630.0 757.7 631.0 760.2 632.0 761.3 633.0 760.1 634.0 761.0 635.0 761.6 636.0 760.4 637.0 760.8 638.0 759.2 639.0 760.3 640.0 760.4 641.0 760.3 642.0 760.7 643.0 759.7 644.0 760.6 645.0 758.1 646.0 760.3 647.0 760.4 648.0 758.2 649.0 760.2 650.0 760.2 651.0 761.5 652.0 760.6 653.0 760.3 654.0 759.4 655.0 760.2 656.0 760.5 657.0 760.8 658.0 761.5 659.0 761.7 660.0 761.7 661.0 762.0 662.0 762.7 663.0 762.0 664.0 760.7 665.0 761.2 666.0 760.0 667.0 760.6 668.0 759.5 669.0 760.4 670.0 760.5 671.0 760.7 672.0 760.4 673.0 759.5 674.0 760.6 675.0 760.4 676.0 760.5 677.0 760.6 678.0 760.5 679.0 760.4 680.0 761.3 681.0 761.4 682.0 760.5 683.0 760.5 684.0 760.8 685.0 760.6 686.0 760.3 687.0 759.3 688.0 760.2 689.0 760.3 690.0 760.7 691.0 760.1 692.0 760.6 693.0 760.6 694.0 760.6 695.0 759.8 696.0 760.6 697.0 760.5 698.0 759.4 699.0 759.2 700.0 760.6 701.0 760.3 702.0 761.3 703.0 759.0 704.0 760.3 705.0 759.8 706.0 761.3 707.0 760.4 708.0 760.4 709.0 760.3 710.0 760.3 711.0 760.4 712.0 760.0 713.0 760.7 714.0 760.9 715.0 760.5 716.0 760.6 717.0 760.3 718.0 760.7 719.0 760.5 720.0 759.9 721.0 760.3 722.0 760.5 723.0 760.3 724.0 760.6 725.0 760.4 726.0 760.6 727.0 760.5 728.0 760.4 729.0 759.1 730.0 760.6 731.0 760.2 732.0 760.2 733.0 760.7 734.0 758.2 735.0 760.7 736.0 760.4 737.0 760.5 738.0 760.6 739.0 760.1 740.0 760.2 741.0 759.6 742.0 759.4 743.0 760.4 744.0 760.5 745.0 761.7 746.0 761.5 747.0 759.6 748.0 762.5 749.0 761.2 750.0 761.0 751.0 759.9 752.0 759.3 753.0 758.5 754.0 758.0 755.0 758.2 756.0 758.1 757.0 757.7 758.0 757.5 759.0 758.0 760.0 757.6 761.0 757.9 762.0 757.7 763.0 757.9 764.0 757.7 765.0 757.7 766.0 757.4 767.0 757.6 768.0 757.9 769.0 757.6 770.0 758.2 771.0 756.7 772.0 757.9 773.0 756.2 774.0 757.6 775.0 757.8 776.0 758.1 777.0 758.0 778.0 757.9 779.0 758.1 780.0 757.7 781.0 757.7 782.0 758.0 783.0 758.0 784.0 757.7 785.0 758.1 786.0 757.8 787.0 757.7 788.0 758.1 789.0 757.5 790.0 757.1 791.0 756.4 792.0 757.6 793.0 757.9 794.0 757.8 795.0 757.7 796.0 757.9 797.0 755.2 798.0 758.2 799.0 758.2 800.0 757.9 801.0 757.7 802.0 758.1 803.0 758.0 804.0 758.2 805.0 757.5 806.0 757.6 807.0 757.7 808.0 755.5 809.0 758.1 810.0 757.5 811.0 757.8 812.0 758.2 813.0 757.8 814.0 757.7 815.0 758.0 816.0 759.1 817.0 758.7 818.0 760.4 819.0 761.2 820.0 760.9 821.0 758.8 822.0 759.0 823.0 758.6 824.0 758.0 825.0 758.0 826.0 758.0 827.0 757.8 828.0 757.8 829.0 757.6 830.0 757.5 831.0 758.1 832.0 757.5 833.0 757.4 834.0 758.0 835.0 758.0 836.0 758.1 837.0 758.0 838.0 757.7 839.0 757.9 840.0 757.7 841.0 758.1 842.0 758.0 843.0 757.5 844.0 758.0 845.0 757.4 846.0 757.8 847.0 757.9 848.0 757.6 849.0 757.7 850.0 758.0 851.0 756.1 852.0 757.6 853.0 758.0 854.0 758.1 855.0 758.0 856.0 757.6 857.0 757.7 858.0 758.1 859.0 755.2 860.0 757.5 861.0 757.9 862.0 757.8 863.0 757.9 864.0 758.0 865.0 758.2 866.0 757.6 867.0 756.5 868.0 760.5 869.0 761.1 870.0 761.0 871.0 762.2 872.0 762.1 873.0 760.8 874.0 757.6 875.0 759.8 876.0 758.9 877.0 759.6 878.0 759.5 879.0 758.2 880.0 758.7 881.0 759.7 882.0 758.5 883.0 759.9 884.0 759.7 885.0 758.8 886.0 759.6 887.0 758.9 888.0 759.0 889.0 759.7 890.0 759.3 891.0 759.6 892.0 760.4 893.0 759.4 894.0 759.9 895.0 759.6 896.0 759.6 897.0 760.6 898.0 759.9 899.0 759.8 900.0 759.7 901.0 759.9 902.0 759.7 903.0 759.1 904.0 758.9 905.0 759.6 906.0 758.8 907.0 760.7 908.0 759.5 909.0 759.5 910.0 759.9 911.0 759.9 912.0 760.0 913.0 760.6 914.0 760.8 915.0 759.1 916.0 758.9 917.0 759.6 918.0 759.5 919.0 759.5 920.0 759.3 921.0 759.5 922.0 760.0 923.0 759.7 924.0 760.6 925.0 758.8 926.0 759.9 927.0 760.0 928.0 760.6 929.0 759.9 930.0 759.9 931.0 759.9 932.0 759.2 933.0 759.6 934.0 759.5 935.0 759.6 936.0 760.8 937.0 758.0 938.0 761.1 939.0 759.8 940.0 759.9 941.0 759.8 942.0 759.5 943.0 759.4 944.0 759.7 945.0 759.5 946.0 759.0 947.0 759.1 948.0 760.0 949.0 759.3 950.0 759.6 951.0 759.4 952.0 760.5 953.0 759.9 954.0 760.5 955.0 759.8 956.0 761.1 957.0 760.8 958.0 759.9 959.0 759.2 960.0 758.8 961.0 759.5 962.0 759.7 963.0 760.0 964.0 758.7 965.0 759.8 966.0 760.2 967.0 758.8 968.0 760.5 969.0 758.7 970.0 759.9 971.0 760.3 972.0 758.8 973.0 759.3 974.0 758.7 975.0 759.7 976.0 759.8 977.0 759.7 978.0 759.7 979.0 759.6 980.0 759.7 981.0 758.6 982.0 760.5 983.0 760.3 984.0 759.5 985.0 760.0 986.0 759.6 987.0 758.4 988.0 760.7 989.0 760.1 990.0 759.9 991.0 759.7 992.0 760.9 993.0 760.3 994.0 762.3 995.0 762.9 996.0 761.1 997.0 760.5 998.0 758.9 999.0 759.2 1000.0 758.2 1001.0 757.6 1002.0 757.8 1003.0 757.8 1004.0 757.7 1005.0 757.8 1006.0 757.5 1007.0 758.0 1008.0 757.8 1009.0 757.5 1010.0 757.5 1011.0 757.7 1012.0 758.0 1013.0 757.4 1014.0 758.2 1015.0 757.7 1016.0 758.1 1017.0 757.7 1018.0 758.2 1019.0 757.4 1020.0 757.4 1021.0 757.9 1022.0 757.7 1023.0 758.0 1024.0 757.5 1025.0 758.0 1026.0 757.2 1027.0 758.2 1028.0 758.1 1029.0 757.5 1030.0 757.8 1031.0 757.6 1032.0 757.7 1033.0 758.1 1034.0 757.7 1035.0 757.7 1036.0 757.5 1037.0 757.5 1038.0 758.2 1039.0 757.7 1040.0 758.1 1041.0 758.1 1042.0 757.9 1043.0 757.1 1044.0 758.1 1045.0 757.5 1046.0 757.5 1047.0 757.5 1048.0 757.7 1049.0 757.6 1050.0 755.8 1051.0 757.6 1052.0 758.2 1053.0 757.5 1054.0 758.1 1055.0 757.6 1056.0 757.9 1057.0 758.2 1058.0 758.1 1059.0 758.1 1060.0 758.0 1061.0 757.8 1062.0 757.8 1063.0 757.6 1064.0 757.7 1065.0 757.5 1066.0 757.4 1067.0 757.1 1068.0 757.7 1069.0 758.0 1070.0 758.1 1071.0 757.5 1072.0 757.6 1073.0 758.0 1074.0 758.2 1075.0 757.8 1076.0 757.6 1077.0 757.8 1078.0 757.9 1079.0 757.6 1080.0 757.6 1081.0 758.2 1082.0 758.1 1083.0 757.5 1084.0 757.6 1085.0 757.5 1086.0 757.7 1087.0 757.8 1088.0 758.2 1089.0 757.6 1090.0 757.7 1091.0 758.0 1092.0 757.9 1093.0 757.8 1094.0 757.4 1095.0 757.5 1096.0 758.0 1097.0 758.0 1098.0 757.9 1099.0 757.4 1100.0 757.9 1101.0 757.2 1102.0 758.0 1103.0 759.4 1104.0 758.8 1105.0 760.8 1106.0 761.6 1107.0 761.0 1108.0 760.3 1109.0 759.4 1110.0 758.2 1111.0 757.7 1112.0 757.5 1113.0 758.0 1114.0 757.5 1115.0 756.6 1116.0 757.7 1117.0 757.6 1118.0 758.0 1119.0 756.9 1120.0 757.5 1121.0 758.2 1122.0 758.1 1123.0 756.4 1124.0 758.1 1125.0 758.0 1126.0 758.0 1127.0 757.5 1128.0 757.7 1129.0 758.0 1130.0 757.7 1131.0 757.5 1132.0 758.1 1133.0 757.7 1134.0 758.0 1135.0 758.0 1136.0 757.6 1137.0 758.0 1138.0 757.6 1139.0 757.9 1140.0 757.5 1141.0 757.7 1142.0 757.6 1143.0 757.5 1144.0 757.1 1145.0 758.4 1146.0 758.9 1147.0 758.7 1148.0 760.8 1149.0 760.8 1150.0 760.9 1151.0 760.3 1152.0 759.7 1153.0 758.6 1154.0 758.2 1155.0 758.1 1156.0 757.7 1157.0 758.2 1158.0 756.9 1159.0 757.8 1160.0 757.4 1161.0 757.8 1162.0 758.2 1163.0 758.1 1164.0 756.0 1165.0 758.0 1166.0 757.7 1167.0 757.8 1168.0 758.0 1169.0 757.6 1170.0 757.8 1171.0 757.8 1172.0 757.8 1173.0 757.9 1174.0 757.9 1175.0 757.8 1176.0 757.6 1177.0 757.4 1178.0 758.2 1179.0 757.6 1180.0 757.5 1181.0 758.1 1182.0 757.5 1183.0 757.4 1184.0 758.0 1185.0 757.6 1186.0 757.6 1187.0 758.1 1188.0 757.6 1189.0 757.6 1190.0 758.2 1191.0 758.0 1192.0 756.9 1193.0 757.7 1194.0 757.6 1195.0 757.7 1196.0 757.9 1197.0 757.9 1198.0 758.0 1199.0 757.6 1200.0 757.8 1201.0 757.5 1202.0 757.7 1203.0 758.2 1204.0 758.1 1205.0 758.6 1206.0 759.0 1207.0 760.2 1208.0 760.9 1209.0 762.3 1210.0 762.5 1211.0 761.8 1212.0 759.9 1213.0 758.9 1214.0 758.5 1215.0 758.3 1216.0 758.4 1217.0 758.7 1218.0 758.2 1219.0 758.3 1220.0 758.5 1221.0 758.4 1222.0 758.3 1223.0 758.4 1224.0 758.6 1225.0 758.7 1226.0 758.6 1227.0 758.8 1228.0 758.5 1229.0 758.9 1230.0 758.3 1231.0 758.8 1232.0 758.9 1233.0 758.8 1234.0 758.8 1235.0 755.5 1236.0 758.7 1237.0 758.3 1238.0 758.6 1239.0 758.4 1240.0 758.9 1241.0 758.6 1242.0 758.8 1243.0 758.5 1244.0 758.7 1245.0 758.7 1246.0 758.2 1247.0 758.5 1248.0 758.3 1249.0 758.5 1250.0 758.3 1251.0 758.9 1252.0 758.7 1253.0 758.6 1254.0 758.7 1255.0 758.4 1256.0 758.8 1257.0 758.9 1258.0 758.8 1259.0 758.7 1260.0 758.4 1261.0 758.4 1262.0 758.7 1263.0 758.5 1264.0 757.7 1265.0 758.1 1266.0 758.5 1267.0 757.0 1268.0 756.4 1269.0 758.8 1270.0 758.9 1271.0 758.2 1272.0 758.5 1273.0 758.3 1274.0 758.8 1275.0 758.5 1276.0 758.5 1277.0 758.6 1278.0 758.2 1279.0 758.6 1280.0 758.8 1281.0 758.5 1282.0 758.3 1283.0 758.4 1284.0 758.6 1285.0 758.6 1286.0 756.4 1287.0 758.3 1288.0 758.7 1289.0 758.8 1290.0 758.4 1291.0 758.9 1292.0 758.7 1293.0 758.3 1294.0 758.9 1295.0 758.8 1296.0 758.5 1297.0 758.2 1298.0 758.4 1299.0 758.2 1300.0 758.4 1301.0 757.5 1302.0 758.9 1303.0 758.8 1304.0 758.5 1305.0 758.3 1306.0 758.6 1307.0 758.9 1308.0 758.6 1309.0 758.2 1310.0 756.1 1311.0 758.6 1312.0 758.8 1313.0 758.7 1314.0 758.3 1315.0 758.9 1316.0 758.7 1317.0 758.4 1318.0 758.8 1319.0 758.7 1320.0 758.5 1321.0 758.5 1322.0 758.3 1323.0 758.5 1324.0 759.0 1325.0 758.0 1326.0 760.4 1327.0 761.0 1328.0 761.3 1329.0 762.7 1330.0 761.9 1331.0 760.6 1332.0 760.8 1333.0 759.8 1334.0 759.9 1335.0 759.8 1336.0 759.4 1337.0 759.6 1338.0 760.0 1339.0 758.1 1340.0 759.5 1341.0 758.8 1342.0 759.9 1343.0 760.0 1344.0 759.9 1345.0 760.8 1346.0 759.2 1347.0 760.9 1348.0 759.8 1349.0 759.8 1350.0 759.8 1351.0 759.3 1352.0 759.6 1353.0 759.3 1354.0 759.8 1355.0 759.7 1356.0 760.0 1357.0 759.3 1358.0 759.7 1359.0 759.8 1360.0 760.3 1361.0 760.0 1362.0 760.1 1363.0 759.8 1364.0 759.9 1365.0 759.5 1366.0 759.4 1367.0 759.3 1368.0 759.6 1369.0 758.3 1370.0 759.5 1371.0 759.3 1372.0 758.8 1373.0 759.4 1374.0 759.0 1375.0 759.7 1376.0 759.1 1377.0 760.2 1378.0 759.8 1379.0 759.9 1380.0 759.8 1381.0 759.5 1382.0 761.0 1383.0 756.3 1384.0 759.8 1385.0 758.5 1386.0 760.1 1387.0 759.5 1388.0 759.8 1389.0 759.7 1390.0 760.1 1391.0 759.5 1392.0 760.7 1393.0 760.0 1394.0 761.1 1395.0 758.7 1396.0 760.3 1397.0 760.5 1398.0 759.6 1399.0 759.9 1400.0 760.5 1401.0 759.0 1402.0 759.1 1403.0 760.0 1404.0 759.4 1405.0 760.8 1406.0 758.6 1407.0 761.8 1408.0 761.8 1409.0 761.9 1410.0 760.9 1411.0 760.1 1412.0 760.5 1413.0 759.6 1414.0 759.6 1415.0 758.1 1416.0 758.7 1417.0 759.8 1418.0 759.9 1419.0 759.6 1420.0 759.7 1421.0 759.5 1422.0 760.0 1423.0 759.1 1424.0 759.1 1425.0 759.7 1426.0 758.5 1427.0 759.7 1428.0 758.3 1429.0 758.7 1430.0 759.1 1431.0 759.8 1432.0 759.4 1433.0 759.8 1434.0 759.1 1435.0 757.4 1436.0 761.2 1437.0 759.6 1438.0 759.7 1439.0 759.5 1440.0 759.2 1441.0 758.8 1442.0 759.7 1443.0 759.5 1444.0 759.9 1445.0 759.5 1446.0 759.3 1447.0 760.8 1448.0 759.5 1449.0 760.0 1450.0 759.7 1451.0 759.9 1452.0 758.9 1453.0 759.5 1454.0 759.8 1455.0 759.7 1456.0 759.6 1457.0 757.9 1458.0 759.3 1459.0 760.8 1460.0 759.4 1461.0 759.7 1462.0 759.7 1463.0 760.6 1464.0 759.1 1465.0 760.0 1466.0 759.5 1467.0 758.6 1468.0 758.2 1469.0 759.5 1470.0 758.5 1471.0 760.9 1472.0 759.7 1473.0 759.9 1474.0 759.6 1475.0 759.7 1476.0 760.3 1477.0 759.5 1478.0 759.9 1479.0 760.9 1480.0 759.9 1481.0 759.7 1482.0 759.8 1483.0 761.2 1484.0 759.6 1485.0 758.6 1486.0 759.6 1487.0 760.1 1488.0 759.8 1489.0 759.6 1490.0 759.4 1491.0 760.0 1492.0 760.0 1493.0 760.4 1494.0 759.0 1495.0 759.6 1496.0 759.3 1497.0 759.8 1498.0 761.3 1499.0 759.6 1500.0 758.7 1501.0 759.7 1502.0 759.8 1503.0 757.3 1504.0 761.1 1505.0 760.0 1506.0 758.5 1507.0 759.9 1508.0 759.8 1509.0 759.8 1510.0 759.4 1511.0 761.2 1512.0 761.3 1513.0 760.9 1514.0 761.9 1515.0 760.2 1516.0 761.8 1517.0 761.9 1518.0 761.4 1519.0 761.8 1520.0 760.4 1521.0 760.5 1522.0 760.3 1523.0 759.9 1524.0 760.3 1525.0 760.2 1526.0 760.4 1527.0 760.2 1528.0 760.2 1529.0 759.5 1530.0 760.4 1531.0 759.7 1532.0 760.7 1533.0 759.2 1534.0 760.8 1535.0 760.0 1536.0 759.7 1537.0 760.0 1538.0 760.4 1539.0 760.4 1540.0 758.7 1541.0 760.4 1542.0 760.5 1543.0 759.3 1544.0 757.2 1545.0 760.4 1546.0 760.5 1547.0 759.9 1548.0 759.3 1549.0 761.1 1550.0 761.2 1551.0 760.1 1552.0 760.6 1553.0 760.5 1554.0 760.3 1555.0 760.5 1556.0 760.0 1557.0 760.3 1558.0 760.5 1559.0 760.3 1560.0 760.5 1561.0 760.5 1562.0 761.3 1563.0 759.8 1564.0 760.4 1565.0 761.1 1566.0 760.4 1567.0 760.7 1568.0 760.2 1569.0 760.4 1570.0 761.4 1571.0 760.4 1572.0 760.9 1573.0 760.5 1574.0 760.7 1575.0 760.4 1576.0 760.3 1577.0 761.4 1578.0 760.5 1579.0 760.7 1580.0 760.4 1581.0 760.7 1582.0 762.0 1583.0 761.6 1584.0 762.0 1585.0 762.6 1586.0 761.4 1587.0 759.6 1588.0 759.6 1589.0 758.8 1590.0 758.6 1591.0 757.8 1592.0 758.0 1593.0 758.1 1594.0 758.1 1595.0 757.7 1596.0 757.5 1597.0 758.1 1598.0 757.5 1599.0 757.8 1600.0 758.2 1601.0 757.7 1602.0 757.3 1603.0 757.8 1604.0 757.4 1605.0 757.8 1606.0 757.7 1607.0 757.5 1608.0 758.0 1609.0 758.0 1610.0 757.5 1611.0 757.4 1612.0 757.8 1613.0 756.6 1614.0 758.1 1615.0 757.6 1616.0 757.4 1617.0 757.7 1618.0 758.0 1619.0 757.6 1620.0 758.0 1621.0 757.8 1622.0 757.7 1623.0 757.9 1624.0 757.6 1625.0 757.7 1626.0 757.5 1627.0 757.7 1628.0 758.0 1629.0 757.4 1630.0 757.7 1631.0 757.9 1632.0 757.6 1633.0 758.1 1634.0 758.1 1635.0 757.9 1636.0 758.0 1637.0 758.2 1638.0 756.1 1639.0 757.8 1640.0 757.4 1641.0 757.4 1642.0 757.9 1643.0 757.5 1644.0 758.0 1645.0 757.8 1646.0 757.6 1647.0 757.7 1648.0 757.7 1649.0 755.1 1650.0 756.0 1651.0 758.0 1652.0 758.1 1653.0 757.7 1654.0 757.7 1655.0 757.5 1656.0 758.0 1657.0 758.0 1658.0 757.5 1659.0 757.4 1660.0 758.0 1661.0 757.8 1662.0 758.0 1663.0 757.4 1664.0 757.4 1665.0 757.7 1666.0 757.8 1667.0 757.4 1668.0 756.3 1669.0 757.7 1670.0 757.5 1671.0 757.9 1672.0 757.6 1673.0 757.9 1674.0 758.1 1675.0 755.0 1676.0 757.4 1677.0 757.6 1678.0 758.0 1679.0 758.1 1680.0 757.4 1681.0 757.8 1682.0 758.1 1683.0 757.6 1684.0 757.5 1685.0 758.1 1686.0 757.5 1687.0 757.4 1688.0 757.6 1689.0 757.5 1690.0 758.0 1691.0 757.7 1692.0 756.8 1693.0 757.6 1694.0 757.6 1695.0 756.6 1696.0 757.5 1697.0 757.7 1698.0 758.0 1699.0 757.9 1700.0 757.8 1701.0 758.1 1702.0 756.4 1703.0 758.0 1704.0 758.0 1705.0 757.7 1706.0 758.2 1707.0 758.0 1708.0 757.6 1709.0 757.9 1710.0 757.7 1711.0 758.1 1712.0 757.8 1713.0 758.1 1714.0 757.8 1715.0 757.6 1716.0 757.7 1717.0 757.9 1718.0 757.8 1719.0 759.9 1720.0 759.8 1721.0 761.0 1722.0 761.1 1723.0 760.4 1724.0 759.4 1725.0 759.2 1726.0 758.2 1727.0 758.1 1728.0 757.6 1729.0 757.5 1730.0 757.5 1731.0 757.7 1732.0 757.9 1733.0 757.4 1734.0 757.7 1735.0 757.4 1736.0 757.4 1737.0 757.6 1738.0 757.8 1739.0 758.0 1740.0 757.7 1741.0 757.5 1742.0 757.9 1743.0 757.6 1744.0 758.2 1745.0 756.5 1746.0 757.6 1747.0 758.1 1748.0 757.5 1749.0 757.6 1750.0 757.5 1751.0 757.9 1752.0 756.5 1753.0 757.9 1754.0 757.7 1755.0 757.8 1756.0 757.9 1757.0 757.6 1758.0 757.7 1759.0 755.0 1760.0 757.4 1761.0 757.6 1762.0 757.8 1763.0 757.8 1764.0 757.8 1765.0 757.4 L1765.0 773.3 1764.0 773.1 1763.0 773.0 1762.0 773.4 1761.0 773.4 1760.0 773.5 1759.0 775.2 1758.0 773.2 1757.0 773.4 1756.0 772.8 1755.0 773.2 1754.0 772.8 1753.0 772.8 1752.0 773.2 1751.0 773.3 1750.0 773.1 1749.0 772.9 1748.0 772.7 1747.0 773.3 1746.0 775.7 1745.0 773.2 1744.0 774.7 1743.0 773.7 1742.0 772.9 1741.0 773.2 1740.0 772.6 1739.0 772.8 1738.0 772.9 1737.0 772.7 1736.0 773.6 1735.0 773.1 1734.0 773.3 1733.0 773.9 1732.0 772.9 1731.0 772.9 1730.0 772.9 1729.0 773.1 1728.0 772.8 1727.0 772.7 1726.0 772.4 1725.0 772.0 1724.0 771.4 1723.0 770.2 1722.0 770.4 1721.0 769.5 1720.0 771.3 1719.0 770.8 1718.0 772.1 1717.0 772.7 1716.0 773.1 1715.0 774.2 1714.0 772.8 1713.0 773.2 1712.0 772.8 1711.0 772.7 1710.0 773.0 1709.0 772.8 1708.0 773.1 1707.0 773.4 1706.0 773.4 1705.0 776.2 1704.0 772.9 1703.0 772.6 1702.0 773.1 1701.0 773.3 1700.0 773.4 1699.0 775.8 1698.0 772.7 1697.0 773.3 1696.0 772.7 1695.0 772.9 1694.0 772.8 1693.0 773.5 1692.0 772.8 1691.0 773.5 1690.0 772.6 1689.0 773.3 1688.0 773.7 1687.0 773.1 1686.0 772.6 1685.0 773.3 1684.0 773.0 1683.0 773.2 1682.0 772.7 1681.0 773.0 1680.0 772.6 1679.0 773.2 1678.0 772.7 1677.0 773.1 1676.0 773.4 1675.0 773.3 1674.0 773.4 1673.0 773.3 1672.0 773.0 1671.0 775.6 1670.0 773.3 1669.0 773.1 1668.0 773.3 1667.0 773.4 1666.0 772.6 1665.0 774.2 1664.0 773.2 1663.0 772.8 1662.0 773.3 1661.0 776.0 1660.0 775.2 1659.0 772.6 1658.0 773.2 1657.0 773.4 1656.0 772.8 1655.0 773.2 1654.0 772.9 1653.0 773.1 1652.0 773.6 1651.0 772.7 1650.0 773.2 1649.0 772.8 1648.0 772.7 1647.0 776.1 1646.0 772.7 1645.0 772.6 1644.0 772.6 1643.0 772.8 1642.0 772.9 1641.0 773.0 1640.0 773.0 1639.0 775.1 1638.0 776.1 1637.0 774.3 1636.0 773.2 1635.0 773.4 1634.0 773.0 1633.0 772.6 1632.0 773.0 1631.0 773.4 1630.0 773.3 1629.0 773.4 1628.0 772.8 1627.0 772.8 1626.0 772.9 1625.0 773.2 1624.0 773.2 1623.0 773.2 1622.0 773.0 1621.0 773.2 1620.0 773.0 1619.0 773.1 1618.0 773.7 1617.0 773.4 1616.0 773.4 1615.0 773.0 1614.0 774.1 1613.0 773.3 1612.0 772.8 1611.0 772.9 1610.0 772.8 1609.0 772.6 1608.0 773.5 1607.0 772.8 1606.0 773.1 1605.0 773.4 1604.0 772.7 1603.0 772.8 1602.0 773.0 1601.0 773.7 1600.0 773.0 1599.0 773.0 1598.0 773.3 1597.0 772.9 1596.0 776.0 1595.0 772.8 1594.0 773.3 1593.0 772.8 1592.0 773.2 1591.0 773.2 1590.0 772.6 1589.0 771.7 1588.0 771.5 1587.0 770.3 1586.0 769.5 1585.0 768.2 1584.0 770.4 1583.0 769.1 1582.0 769.3 1581.0 770.1 1580.0 771.4 1579.0 770.1 1578.0 770.4 1577.0 771.3 1576.0 770.7 1575.0 770.5 1574.0 770.3 1573.0 770.5 1572.0 770.5 1571.0 770.4 1570.0 769.6 1569.0 770.2 1568.0 770.3 1567.0 769.9 1566.0 770.2 1565.0 769.8 1564.0 771.4 1563.0 770.5 1562.0 770.2 1561.0 771.6 1560.0 770.1 1559.0 770.9 1558.0 770.5 1557.0 770.4 1556.0 770.8 1555.0 770.6 1554.0 770.5 1553.0 770.6 1552.0 770.5 1551.0 771.3 1550.0 769.4 1549.0 770.1 1548.0 771.2 1547.0 771.3 1546.0 770.2 1545.0 770.2 1544.0 770.3 1543.0 771.0 1542.0 770.6 1541.0 770.1 1540.0 772.7 1539.0 770.2 1538.0 770.2 1537.0 770.0 1536.0 772.8 1535.0 770.1 1534.0 770.6 1533.0 770.9 1532.0 770.2 1531.0 769.9 1530.0 770.3 1529.0 772.0 1528.0 770.4 1527.0 770.1 1526.0 770.4 1525.0 770.4 1524.0 770.4 1523.0 769.4 1522.0 770.3 1521.0 771.5 1520.0 770.2 1519.0 771.1 1518.0 769.2 1517.0 768.9 1516.0 768.8 1515.0 768.5 1514.0 769.0 1513.0 769.5 1512.0 771.2 1511.0 769.9 1510.0 771.4 1509.0 771.2 1508.0 771.6 1507.0 770.9 1506.0 771.3 1505.0 771.5 1504.0 770.2 1503.0 771.3 1502.0 773.4 1501.0 771.4 1500.0 771.2 1499.0 771.4 1498.0 770.5 1497.0 771.4 1496.0 771.1 1495.0 771.0 1494.0 771.2 1493.0 771.2 1492.0 773.2 1491.0 772.0 1490.0 771.4 1489.0 771.1 1488.0 771.3 1487.0 772.0 1486.0 771.3 1485.0 769.9 1484.0 771.2 1483.0 771.0 1482.0 771.0 1481.0 770.9 1480.0 771.1 1479.0 770.2 1478.0 771.2 1477.0 771.4 1476.0 771.3 1475.0 771.0 1474.0 770.8 1473.0 771.1 1472.0 770.9 1471.0 770.6 1470.0 771.5 1469.0 771.3 1468.0 769.9 1467.0 771.3 1466.0 771.0 1465.0 773.6 1464.0 770.5 1463.0 774.1 1462.0 772.1 1461.0 771.2 1460.0 770.9 1459.0 770.1 1458.0 771.4 1457.0 773.2 1456.0 769.9 1455.0 771.3 1454.0 771.1 1453.0 771.9 1452.0 770.2 1451.0 773.5 1450.0 771.1 1449.0 774.3 1448.0 771.2 1447.0 771.0 1446.0 769.5 1445.0 769.9 1444.0 771.4 1443.0 771.0 1442.0 771.0 1441.0 771.8 1440.0 771.7 1439.0 771.2 1438.0 770.9 1437.0 771.3 1436.0 770.6 1435.0 771.9 1434.0 770.8 1433.0 770.9 1432.0 774.3 1431.0 771.1 1430.0 772.8 1429.0 770.3 1428.0 771.9 1427.0 771.2 1426.0 770.7 1425.0 771.1 1424.0 771.9 1423.0 769.9 1422.0 771.1 1421.0 770.8 1420.0 771.3 1419.0 771.2 1418.0 772.5 1417.0 773.0 1416.0 770.4 1415.0 770.8 1414.0 772.3 1413.0 771.1 1412.0 770.6 1411.0 769.2 1410.0 769.3 1409.0 768.7 1408.0 768.8 1407.0 768.8 1406.0 769.2 1405.0 769.9 1404.0 772.5 1403.0 771.3 1402.0 772.3 1401.0 772.3 1400.0 771.8 1399.0 772.0 1398.0 770.9 1397.0 771.3 1396.0 772.5 1395.0 770.7 1394.0 770.3 1393.0 771.6 1392.0 772.8 1391.0 770.8 1390.0 771.7 1389.0 770.8 1388.0 772.8 1387.0 771.1 1386.0 770.8 1385.0 771.0 1384.0 770.9 1383.0 772.2 1382.0 772.4 1381.0 771.2 1380.0 770.9 1379.0 770.9 1378.0 770.8 1377.0 774.8 1376.0 771.4 1375.0 771.1 1374.0 771.5 1373.0 772.0 1372.0 772.2 1371.0 770.9 1370.0 772.3 1369.0 770.7 1368.0 771.3 1367.0 772.3 1366.0 773.2 1365.0 771.1 1364.0 771.0 1363.0 771.0 1362.0 772.1 1361.0 770.9 1360.0 772.1 1359.0 771.3 1358.0 770.7 1357.0 771.3 1356.0 771.1 1355.0 771.2 1354.0 771.3 1353.0 770.3 1352.0 772.4 1351.0 769.9 1350.0 771.0 1349.0 771.8 1348.0 771.3 1347.0 771.1 1346.0 771.6 1345.0 772.3 1344.0 771.4 1343.0 770.7 1342.0 771.0 1341.0 771.1 1340.0 771.2 1339.0 771.2 1338.0 772.3 1337.0 771.4 1336.0 769.8 1335.0 770.9 1334.0 770.9 1333.0 770.7 1332.0 770.2 1331.0 770.8 1330.0 768.9 1329.0 770.4 1328.0 769.4 1327.0 770.7 1326.0 774.0 1325.0 770.6 1324.0 772.2 1323.0 772.5 1322.0 772.6 1321.0 773.0 1320.0 772.1 1319.0 772.2 1318.0 772.3 1317.0 772.7 1316.0 772.0 1315.0 772.5 1314.0 772.4 1313.0 772.2 1312.0 772.4 1311.0 772.5 1310.0 772.0 1309.0 772.8 1308.0 772.5 1307.0 773.4 1306.0 772.1 1305.0 775.3 1304.0 772.2 1303.0 772.4 1302.0 772.3 1301.0 772.0 1300.0 772.0 1299.0 772.1 1298.0 772.3 1297.0 772.0 1296.0 772.5 1295.0 772.4 1294.0 771.9 1293.0 772.4 1292.0 773.7 1291.0 772.2 1290.0 772.3 1289.0 772.3 1288.0 774.1 1287.0 772.3 1286.0 772.5 1285.0 772.3 1284.0 772.2 1283.0 772.2 1282.0 772.2 1281.0 772.4 1280.0 772.2 1279.0 772.4 1278.0 771.9 1277.0 772.1 1276.0 772.2 1275.0 772.4 1274.0 772.6 1273.0 772.6 1272.0 772.2 1271.0 771.9 1270.0 772.0 1269.0 771.9 1268.0 773.3 1267.0 772.9 1266.0 772.1 1265.0 772.1 1264.0 772.4 1263.0 772.3 1262.0 772.0 1261.0 772.0 1260.0 772.2 1259.0 772.0 1258.0 772.1 1257.0 772.1 1256.0 772.1 1255.0 771.9 1254.0 771.9 1253.0 772.0 1252.0 772.1 1251.0 772.3 1250.0 772.2 1249.0 772.5 1248.0 774.8 1247.0 772.1 1246.0 772.1 1245.0 772.2 1244.0 772.3 1243.0 772.6 1242.0 772.2 1241.0 775.4 1240.0 772.2 1239.0 775.0 1238.0 772.1 1237.0 774.3 1236.0 772.0 1235.0 772.2 1234.0 772.0 1233.0 772.4 1232.0 773.7 1231.0 772.6 1230.0 772.0 1229.0 772.3 1228.0 773.1 1227.0 772.5 1226.0 772.2 1225.0 772.1 1224.0 772.1 1223.0 772.3 1222.0 772.2 1221.0 772.0 1220.0 772.5 1219.0 772.0 1218.0 772.3 1217.0 775.3 1216.0 771.9 1215.0 772.5 1214.0 772.4 1213.0 771.6 1212.0 773.5 1211.0 769.7 1210.0 770.1 1209.0 768.4 1208.0 770.0 1207.0 770.6 1206.0 771.4 1205.0 772.0 1204.0 772.9 1203.0 773.2 1202.0 772.7 1201.0 773.1 1200.0 772.8 1199.0 773.1 1198.0 772.8 1197.0 773.2 1196.0 773.2 1195.0 772.7 1194.0 773.1 1193.0 773.1 1192.0 773.3 1191.0 773.0 1190.0 773.1 1189.0 772.8 1188.0 773.3 1187.0 773.2 1186.0 773.1 1185.0 773.2 1184.0 773.1 1183.0 772.7 1182.0 773.3 1181.0 773.2 1180.0 772.9 1179.0 772.9 1178.0 773.1 1177.0 775.7 1176.0 772.8 1175.0 773.2 1174.0 773.2 1173.0 773.1 1172.0 772.8 1171.0 772.8 1170.0 773.0 1169.0 773.2 1168.0 775.9 1167.0 772.7 1166.0 772.9 1165.0 772.8 1164.0 773.1 1163.0 772.8 1162.0 774.4 1161.0 773.1 1160.0 775.3 1159.0 772.7 1158.0 773.0 1157.0 772.9 1156.0 772.7 1155.0 772.9 1154.0 772.8 1153.0 773.9 1152.0 771.4 1151.0 770.3 1150.0 770.0 1149.0 769.0 1148.0 770.0 1147.0 772.2 1146.0 774.9 1145.0 772.4 1144.0 773.6 1143.0 773.0 1142.0 773.0 1141.0 772.8 1140.0 773.0 1139.0 775.7 1138.0 773.0 1137.0 775.9 1136.0 774.2 1135.0 773.2 1134.0 773.0 1133.0 773.5 1132.0 772.8 1131.0 773.3 1130.0 773.3 1129.0 773.1 1128.0 773.6 1127.0 773.3 1126.0 773.0 1125.0 773.3 1124.0 773.1 1123.0 772.7 1122.0 773.2 1121.0 774.4 1120.0 772.9 1119.0 773.0 1118.0 773.2 1117.0 773.2 1116.0 773.3 1115.0 772.6 1114.0 773.2 1113.0 773.0 1112.0 772.9 1111.0 773.0 1110.0 772.3 1109.0 771.6 1108.0 769.9 1107.0 770.1 1106.0 769.4 1105.0 773.0 1104.0 771.9 1103.0 771.6 1102.0 772.3 1101.0 772.7 1100.0 773.6 1099.0 773.3 1098.0 773.2 1097.0 772.8 1096.0 773.0 1095.0 774.8 1094.0 773.3 1093.0 772.7 1092.0 772.8 1091.0 773.0 1090.0 773.3 1089.0 773.2 1088.0 772.9 1087.0 772.8 1086.0 773.1 1085.0 773.1 1084.0 772.8 1083.0 773.0 1082.0 773.3 1081.0 776.3 1080.0 772.8 1079.0 773.2 1078.0 773.4 1077.0 773.1 1076.0 775.5 1075.0 772.8 1074.0 772.8 1073.0 772.8 1072.0 772.8 1071.0 772.7 1070.0 776.0 1069.0 775.6 1068.0 773.2 1067.0 773.0 1066.0 773.1 1065.0 773.1 1064.0 772.7 1063.0 772.9 1062.0 773.2 1061.0 773.1 1060.0 774.3 1059.0 772.9 1058.0 773.3 1057.0 774.0 1056.0 772.9 1055.0 775.7 1054.0 773.3 1053.0 775.3 1052.0 773.1 1051.0 775.8 1050.0 773.2 1049.0 773.0 1048.0 773.1 1047.0 772.6 1046.0 772.9 1045.0 773.1 1044.0 776.1 1043.0 776.2 1042.0 772.9 1041.0 772.6 1040.0 773.2 1039.0 773.3 1038.0 773.4 1037.0 776.2 1036.0 776.5 1035.0 773.0 1034.0 775.4 1033.0 773.2 1032.0 772.7 1031.0 773.3 1030.0 774.7 1029.0 772.9 1028.0 772.8 1027.0 773.3 1026.0 773.7 1025.0 772.7 1024.0 773.1 1023.0 773.2 1022.0 773.3 1021.0 773.2 1020.0 774.2 1019.0 773.4 1018.0 775.4 1017.0 772.9 1016.0 772.9 1015.0 774.9 1014.0 772.9 1013.0 773.4 1012.0 772.9 1011.0 772.7 1010.0 772.6 1009.0 775.3 1008.0 775.4 1007.0 772.9 1006.0 772.9 1005.0 773.9 1004.0 772.9 1003.0 773.4 1002.0 772.7 1001.0 772.7 1000.0 773.4 999.0 772.0 998.0 771.6 997.0 770.3 996.0 769.8 995.0 768.0 994.0 770.1 993.0 769.5 992.0 769.6 991.0 771.2 990.0 773.6 989.0 769.5 988.0 771.5 987.0 774.2 986.0 771.2 985.0 771.3 984.0 771.4 983.0 772.8 982.0 772.2 981.0 771.9 980.0 771.1 979.0 771.2 978.0 773.0 977.0 771.8 976.0 770.9 975.0 771.3 974.0 770.0 973.0 770.0 972.0 771.2 971.0 771.1 970.0 771.0 969.0 772.0 968.0 770.0 967.0 771.8 966.0 771.9 965.0 770.9 964.0 769.7 963.0 770.9 962.0 771.8 961.0 771.2 960.0 771.6 959.0 770.6 958.0 771.3 957.0 770.5 956.0 773.0 955.0 771.0 954.0 770.8 953.0 774.1 952.0 773.1 951.0 772.8 950.0 771.3 949.0 771.0 948.0 770.8 947.0 770.7 946.0 769.8 945.0 772.0 944.0 771.0 943.0 771.3 942.0 771.0 941.0 770.9 940.0 772.8 939.0 771.4 938.0 770.2 937.0 772.2 936.0 770.2 935.0 771.0 934.0 773.3 933.0 771.6 932.0 771.0 931.0 771.1 930.0 771.1 929.0 771.8 928.0 771.3 927.0 771.2 926.0 769.8 925.0 770.2 924.0 771.0 923.0 770.9 922.0 771.1 921.0 771.1 920.0 771.6 919.0 771.1 918.0 770.8 917.0 771.2 916.0 771.0 915.0 772.4 914.0 770.1 913.0 770.7 912.0 771.2 911.0 772.2 910.0 771.3 909.0 771.1 908.0 771.8 907.0 772.2 906.0 770.2 905.0 771.0 904.0 772.0 903.0 770.3 902.0 771.0 901.0 770.6 900.0 770.9 899.0 769.8 898.0 771.0 897.0 770.3 896.0 771.3 895.0 772.5 894.0 770.9 893.0 771.4 892.0 772.2 891.0 771.1 890.0 769.9 889.0 771.2 888.0 775.5 887.0 771.6 886.0 771.7 885.0 771.2 884.0 770.2 883.0 771.3 882.0 772.2 881.0 770.9 880.0 770.4 879.0 772.7 878.0 771.4 877.0 771.2 876.0 770.6 875.0 770.2 874.0 769.8 873.0 769.2 872.0 768.7 871.0 768.2 870.0 769.8 869.0 771.9 868.0 771.2 867.0 772.1 866.0 773.0 865.0 772.8 864.0 772.9 863.0 772.7 862.0 773.1 861.0 772.8 860.0 772.7 859.0 773.3 858.0 773.3 857.0 773.1 856.0 773.2 855.0 772.8 854.0 773.1 853.0 772.6 852.0 773.1 851.0 773.4 850.0 773.0 849.0 773.2 848.0 773.0 847.0 772.9 846.0 772.8 845.0 773.1 844.0 772.8 843.0 772.9 842.0 773.1 841.0 772.7 840.0 772.7 839.0 772.7 838.0 773.5 837.0 773.2 836.0 772.7 835.0 773.0 834.0 773.3 833.0 772.9 832.0 772.9 831.0 772.6 830.0 773.3 829.0 773.1 828.0 773.7 827.0 773.2 826.0 772.9 825.0 773.3 824.0 773.0 823.0 771.9 822.0 772.6 821.0 770.6 820.0 769.7 819.0 769.5 818.0 770.3 817.0 771.1 816.0 771.5 815.0 772.1 814.0 773.8 813.0 773.3 812.0 773.0 811.0 773.2 810.0 773.2 809.0 773.3 808.0 773.2 807.0 772.9 806.0 776.4 805.0 772.8 804.0 772.8 803.0 772.8 802.0 772.6 801.0 773.0 800.0 773.3 799.0 773.0 798.0 773.1 797.0 775.4 796.0 773.2 795.0 772.9 794.0 773.2 793.0 773.7 792.0 773.3 791.0 773.4 790.0 773.0 789.0 773.2 788.0 773.0 787.0 773.1 786.0 772.7 785.0 772.8 784.0 773.1 783.0 772.8 782.0 773.0 781.0 773.3 780.0 772.7 779.0 772.7 778.0 773.6 777.0 773.1 776.0 774.1 775.0 773.0 774.0 772.6 773.0 773.2 772.0 773.1 771.0 772.8 770.0 773.4 769.0 772.9 768.0 772.8 767.0 773.0 766.0 773.2 765.0 773.3 764.0 772.9 763.0 773.0 762.0 772.9 761.0 773.3 760.0 773.5 759.0 772.8 758.0 773.3 757.0 776.5 756.0 772.7 755.0 773.2 754.0 773.0 753.0 772.4 752.0 774.9 751.0 771.6 750.0 770.2 749.0 770.4 748.0 768.1 747.0 768.8 746.0 769.1 745.0 769.6 744.0 770.4 743.0 769.5 742.0 771.5 741.0 771.4 740.0 770.3 739.0 769.7 738.0 770.1 737.0 770.4 736.0 770.5 735.0 770.4 734.0 770.9 733.0 773.9 732.0 770.5 731.0 770.1 730.0 770.4 729.0 771.1 728.0 770.8 727.0 770.5 726.0 770.2 725.0 769.5 724.0 771.0 723.0 770.2 722.0 771.1 721.0 770.5 720.0 771.4 719.0 770.3 718.0 770.1 717.0 770.4 716.0 770.5 715.0 770.3 714.0 770.3 713.0 770.6 712.0 770.8 711.0 770.4 710.0 770.2 709.0 769.2 708.0 771.0 707.0 770.3 706.0 770.3 705.0 769.8 704.0 770.2 703.0 769.4 702.0 770.7 701.0 772.9 700.0 771.1 699.0 771.0 698.0 769.5 697.0 770.2 696.0 770.6 695.0 769.5 694.0 770.5 693.0 770.2 692.0 770.5 691.0 769.1 690.0 770.2 689.0 771.0 688.0 770.2 687.0 770.6 686.0 770.4 685.0 771.2 684.0 769.6 683.0 771.2 682.0 770.2 681.0 770.5 680.0 771.4 679.0 770.2 678.0 771.6 677.0 769.2 676.0 770.4 675.0 769.3 674.0 770.5 673.0 771.1 672.0 771.7 671.0 770.3 670.0 770.2 669.0 770.4 668.0 770.1 667.0 770.4 666.0 770.8 665.0 770.4 664.0 769.3 663.0 768.8 662.0 768.1 661.0 767.7 660.0 768.5 659.0 768.3 658.0 770.5 657.0 773.3 656.0 770.3 655.0 770.1 654.0 769.2 653.0 770.4 652.0 769.4 651.0 771.5 650.0 770.4 649.0 770.2 648.0 770.3 647.0 770.5 646.0 770.5 645.0 770.5 644.0 770.0 643.0 769.3 642.0 770.6 641.0 770.5 640.0 770.1 639.0 770.2 638.0 771.3 637.0 772.8 636.0 770.6 635.0 771.1 634.0 774.3 633.0 769.9 632.0 769.3 631.0 769.5 630.0 770.3 629.0 771.1 628.0 770.6 627.0 771.2 626.0 770.2 625.0 770.2 624.0 770.4 623.0 770.6 622.0 769.7 621.0 770.1 620.0 769.9 619.0 770.4 618.0 770.4 617.0 770.0 616.0 768.8 615.0 768.5 614.0 768.8 613.0 768.8 612.0 770.6 611.0 771.3 610.0 772.3 609.0 772.5 608.0 773.2 607.0 772.3 606.0 772.7 605.0 772.3 604.0 772.7 603.0 772.8 602.0 772.6 601.0 773.0 600.0 772.5 599.0 772.5 598.0 772.5 597.0 772.3 596.0 775.6 595.0 772.6 594.0 773.7 593.0 772.5 592.0 772.3 591.0 772.4 590.0 772.7 589.0 772.7 588.0 772.8 587.0 772.8 586.0 772.8 585.0 772.4 584.0 773.0 583.0 772.9 582.0 772.5 581.0 772.9 580.0 772.5 579.0 772.5 578.0 775.4 577.0 772.9 576.0 772.7 575.0 773.0 574.0 772.8 573.0 772.6 572.0 772.5 571.0 773.3 570.0 772.4 569.0 772.8 568.0 772.4 567.0 774.6 566.0 772.2 565.0 772.4 564.0 772.0 563.0 771.8 562.0 771.9 561.0 772.7 560.0 769.5 559.0 767.6 558.0 768.7 557.0 768.9 556.0 769.7 555.0 769.9 554.0 770.2 553.0 770.6 552.0 770.6 551.0 770.6 550.0 773.4 549.0 770.4 548.0 769.3 547.0 770.3 546.0 770.8 545.0 769.2 544.0 770.4 543.0 770.2 542.0 771.7 541.0 775.4 540.0 772.9 539.0 771.7 538.0 769.3 537.0 770.6 536.0 770.3 535.0 769.1 534.0 770.9 533.0 770.3 532.0 770.5 531.0 773.3 530.0 770.6 529.0 770.1 528.0 770.4 527.0 770.9 526.0 771.4 525.0 770.6 524.0 770.1 523.0 770.1 522.0 769.8 521.0 770.5 520.0 770.1 519.0 770.1 518.0 770.6 517.0 770.6 516.0 772.6 515.0 770.2 514.0 770.7 513.0 771.1 512.0 770.6 511.0 770.2 510.0 770.3 509.0 770.4 508.0 770.2 507.0 770.6 506.0 769.5 505.0 770.3 504.0 770.8 503.0 769.1 502.0 770.1 501.0 770.4 500.0 770.4 499.0 772.0 498.0 770.0 497.0 772.4 496.0 770.5 495.0 769.6 494.0 769.6 493.0 770.8 492.0 770.9 491.0 770.2 490.0 770.2 489.0 770.2 488.0 770.8 487.0 769.3 486.0 769.7 485.0 770.3 484.0 770.3 483.0 770.6 482.0 770.4 481.0 770.5 480.0 770.5 479.0 770.5 478.0 770.5 477.0 772.7 476.0 770.0 475.0 770.1 474.0 770.6 473.0 770.4 472.0 770.2 471.0 770.8 470.0 771.1 469.0 770.3 468.0 769.2 467.0 769.9 466.0 768.6 465.0 767.5 464.0 769.8 463.0 770.7 462.0 772.0 461.0 772.1 460.0 774.2 459.0 772.8 458.0 772.8 457.0 772.9 456.0 773.3 455.0 772.8 454.0 772.9 453.0 772.8 452.0 773.1 451.0 773.4 450.0 773.3 449.0 772.7 448.0 773.2 447.0 772.6 446.0 772.9 445.0 772.9 444.0 773.2 443.0 773.2 442.0 773.2 441.0 773.3 440.0 772.7 439.0 773.3 438.0 773.6 437.0 773.0 436.0 773.3 435.0 772.8 434.0 772.8 433.0 774.8 432.0 773.1 431.0 773.0 430.0 773.2 429.0 773.1 428.0 772.6 427.0 774.5 426.0 772.8 425.0 773.3 424.0 773.1 423.0 773.0 422.0 773.4 421.0 774.6 420.0 775.5 419.0 772.8 418.0 773.0 417.0 773.0 416.0 773.0 415.0 774.4 414.0 773.1 413.0 772.7 412.0 772.8 411.0 772.9 410.0 773.2 409.0 773.2 408.0 773.2 407.0 772.6 406.0 772.8 405.0 772.6 404.0 772.8 403.0 773.0 402.0 776.0 401.0 775.6 400.0 772.9 399.0 775.1 398.0 772.6 397.0 772.7 396.0 772.6 395.0 773.3 394.0 775.9 393.0 773.1 392.0 772.7 391.0 772.8 390.0 773.3 389.0 773.1 388.0 774.3 387.0 773.1 386.0 772.8 385.0 773.3 384.0 773.2 383.0 773.3 382.0 773.0 381.0 772.7 380.0 772.9 379.0 772.9 378.0 773.3 377.0 773.6 376.0 773.0 375.0 772.8 374.0 773.3 373.0 772.9 372.0 772.5 371.0 772.9 370.0 771.5 369.0 770.1 368.0 769.1 367.0 767.7 366.0 769.1 365.0 769.4 364.0 768.8 363.0 771.4 362.0 770.2 361.0 770.4 360.0 770.4 359.0 770.4 358.0 770.2 357.0 769.8 356.0 770.9 355.0 770.6 354.0 770.2 353.0 770.2 352.0 770.1 351.0 769.2 350.0 773.4 349.0 771.0 348.0 770.3 347.0 770.4 346.0 770.4 345.0 770.3 344.0 770.3 343.0 770.3 342.0 772.6 341.0 769.9 340.0 770.5 339.0 770.1 338.0 771.2 337.0 770.4 336.0 769.2 335.0 770.5 334.0 770.7 333.0 770.2 332.0 770.0 331.0 770.1 330.0 769.8 329.0 769.5 328.0 770.1 327.0 770.5 326.0 774.0 325.0 770.2 324.0 771.1 323.0 769.7 322.0 770.6 321.0 770.4 320.0 770.6 319.0 770.9 318.0 770.4 317.0 770.3 316.0 770.3 315.0 770.1 314.0 770.2 313.0 769.8 312.0 769.8 311.0 770.5 310.0 770.4 309.0 770.5 308.0 770.3 307.0 770.3 306.0 770.5 305.0 770.8 304.0 769.7 303.0 769.1 302.0 768.5 301.0 768.7 300.0 772.9 299.0 770.2 298.0 771.4 297.0 774.7 296.0 772.8 295.0 772.9 294.0 773.3 293.0 772.7 292.0 773.4 291.0 773.1 290.0 773.4 289.0 772.7 288.0 773.2 287.0 773.4 286.0 773.3 285.0 773.6 284.0 773.2 283.0 773.3 282.0 773.0 281.0 773.1 280.0 774.7 279.0 774.2 278.0 774.4 277.0 773.2 276.0 772.6 275.0 773.9 274.0 773.0 273.0 773.3 272.0 773.5 271.0 773.2 270.0 773.0 269.0 773.3 268.0 773.2 267.0 773.1 266.0 773.0 265.0 772.6 264.0 773.2 263.0 772.9 262.0 774.0 261.0 772.9 260.0 772.7 259.0 773.0 258.0 772.9 257.0 772.9 256.0 772.6 255.0 773.3 254.0 773.2 253.0 773.1 252.0 772.4 251.0 771.3 250.0 773.8 249.0 771.2 248.0 769.1Z" fill="#62c8de"/><path d="M248.0 793.6 249.0 794.1 250.0 791.6 251.0 791.4 252.0 790.6 253.0 790.1 254.0 789.9 255.0 790.1 256.0 790.4 257.0 790.1 258.0 789.8 259.0 789.8 260.0 789.7 261.0 788.5 262.0 789.6 263.0 789.6 264.0 789.5 265.0 788.9 266.0 789.7 267.0 790.0 268.0 789.7 269.0 789.7 270.0 790.1 271.0 789.7 272.0 790.0 273.0 790.3 274.0 790.0 275.0 790.4 276.0 790.2 277.0 790.1 278.0 789.8 279.0 788.0 280.0 790.0 281.0 790.2 282.0 789.6 283.0 789.7 284.0 790.2 285.0 789.1 286.0 790.0 287.0 790.2 288.0 790.2 289.0 790.3 290.0 790.2 291.0 790.3 292.0 789.9 293.0 789.8 294.0 789.9 295.0 789.7 296.0 790.4 297.0 791.3 298.0 792.4 299.0 792.6 300.0 792.8 301.0 795.3 302.0 794.1 303.0 793.9 304.0 793.5 305.0 792.5 306.0 791.7 307.0 792.6 308.0 792.8 309.0 791.0 310.0 791.8 311.0 792.8 312.0 792.4 313.0 792.4 314.0 792.5 315.0 792.4 316.0 792.4 317.0 792.4 318.0 792.6 319.0 792.8 320.0 792.7 321.0 792.4 322.0 793.3 323.0 792.2 324.0 792.5 325.0 792.5 326.0 790.1 327.0 792.0 328.0 792.6 329.0 792.4 330.0 792.6 331.0 792.8 332.0 792.0 333.0 793.7 334.0 792.7 335.0 792.8 336.0 792.7 337.0 792.8 338.0 792.4 339.0 793.0 340.0 792.5 341.0 792.7 342.0 792.5 343.0 792.5 344.0 792.5 345.0 792.0 346.0 792.5 347.0 791.6 348.0 792.2 349.0 792.7 350.0 792.1 351.0 792.7 352.0 792.8 353.0 790.6 354.0 793.8 355.0 793.8 356.0 793.1 357.0 792.6 358.0 793.6 359.0 792.5 360.0 792.8 361.0 792.9 362.0 792.9 363.0 791.9 364.0 792.9 365.0 793.8 366.0 794.3 367.0 795.1 368.0 793.7 369.0 793.0 370.0 791.5 371.0 791.2 372.0 791.0 373.0 789.9 374.0 789.8 375.0 790.2 376.0 789.8 377.0 789.6 378.0 790.1 379.0 790.1 380.0 790.3 381.0 789.9 382.0 788.8 383.0 789.9 384.0 789.8 385.0 789.8 386.0 789.8 387.0 788.6 388.0 790.4 389.0 789.6 390.0 790.4 391.0 789.9 392.0 790.2 393.0 790.0 394.0 789.6 395.0 789.9 396.0 789.8 397.0 789.7 398.0 790.2 399.0 790.1 400.0 789.7 401.0 790.1 402.0 790.3 403.0 790.0 404.0 790.0 405.0 790.0 406.0 790.1 407.0 790.2 408.0 790.0 409.0 789.7 410.0 789.9 411.0 789.8 412.0 789.9 413.0 790.0 414.0 790.3 415.0 790.1 416.0 790.2 417.0 789.6 418.0 790.2 419.0 790.0 420.0 789.8 421.0 789.7 422.0 789.7 423.0 789.8 424.0 790.3 425.0 790.1 426.0 790.1 427.0 790.4 428.0 789.5 429.0 790.0 430.0 789.7 431.0 789.9 432.0 789.7 433.0 789.7 434.0 789.8 435.0 789.9 436.0 789.9 437.0 790.3 438.0 789.6 439.0 789.9 440.0 790.1 441.0 790.3 442.0 790.0 443.0 789.9 444.0 788.2 445.0 789.7 446.0 790.1 447.0 790.3 448.0 789.9 449.0 789.7 450.0 790.1 451.0 789.7 452.0 789.9 453.0 790.1 454.0 790.0 455.0 790.3 456.0 788.3 457.0 790.3 458.0 790.3 459.0 789.7 460.0 790.4 461.0 789.7 462.0 792.3 463.0 791.8 464.0 792.9 465.0 794.7 466.0 794.4 467.0 794.1 468.0 792.7 469.0 793.0 470.0 792.4 471.0 790.3 472.0 792.7 473.0 792.8 474.0 792.9 475.0 792.3 476.0 791.3 477.0 793.7 478.0 791.5 479.0 792.7 480.0 792.6 481.0 793.2 482.0 791.3 483.0 792.8 484.0 793.8 485.0 792.7 486.0 793.0 487.0 792.1 488.0 792.7 489.0 792.7 490.0 792.5 491.0 791.6 492.0 792.4 493.0 789.9 494.0 792.4 495.0 792.6 496.0 792.5 497.0 792.7 498.0 792.8 499.0 792.5 500.0 792.5 501.0 791.5 502.0 793.0 503.0 792.0 504.0 793.8 505.0 792.4 506.0 792.6 507.0 792.1 508.0 793.1 509.0 793.9 510.0 792.7 511.0 792.2 512.0 792.5 513.0 792.9 514.0 792.7 515.0 793.3 516.0 793.5 517.0 791.9 518.0 792.5 519.0 792.8 520.0 793.5 521.0 792.4 522.0 792.3 523.0 793.8 524.0 792.6 525.0 792.8 526.0 793.3 527.0 793.1 528.0 793.2 529.0 792.5 530.0 792.6 531.0 792.8 532.0 792.8 533.0 792.5 534.0 792.9 535.0 792.0 536.0 792.7 537.0 792.8 538.0 793.6 539.0 792.6 540.0 792.8 541.0 792.7 542.0 792.5 543.0 792.2 544.0 793.5 545.0 792.3 546.0 792.7 547.0 792.2 548.0 792.5 549.0 792.5 550.0 793.9 551.0 792.6 552.0 792.8 553.0 791.9 554.0 791.7 555.0 792.9 556.0 792.4 557.0 793.9 558.0 794.3 559.0 794.9 560.0 793.0 561.0 792.4 562.0 793.0 563.0 791.6 564.0 790.9 565.0 790.5 566.0 790.1 567.0 789.4 568.0 790.2 569.0 790.6 570.0 790.1 571.0 790.7 572.0 790.2 573.0 789.0 574.0 790.3 575.0 790.1 576.0 790.0 577.0 790.3 578.0 790.6 579.0 790.7 580.0 790.3 581.0 790.6 582.0 790.3 583.0 790.7 584.0 790.4 585.0 790.4 586.0 790.3 587.0 790.7 588.0 790.1 589.0 790.3 590.0 788.7 591.0 790.2 592.0 788.4 593.0 790.5 594.0 790.3 595.0 787.7 596.0 790.6 597.0 790.0 598.0 790.5 599.0 790.5 600.0 790.5 601.0 790.5 602.0 790.1 603.0 790.7 604.0 790.4 605.0 790.5 606.0 790.5 607.0 790.1 608.0 790.3 609.0 790.3 610.0 791.1 611.0 791.6 612.0 792.1 613.0 792.9 614.0 792.7 615.0 794.9 616.0 794.5 617.0 794.0 618.0 792.9 619.0 793.4 620.0 793.2 621.0 793.6 622.0 791.9 623.0 792.5 624.0 792.5 625.0 792.2 626.0 792.7 627.0 791.4 628.0 792.6 629.0 792.9 630.0 793.7 631.0 793.2 632.0 793.6 633.0 793.6 634.0 792.9 635.0 792.6 636.0 792.4 637.0 791.4 638.0 791.6 639.0 791.8 640.0 791.7 641.0 792.4 642.0 792.4 643.0 793.4 644.0 792.1 645.0 792.8 646.0 792.5 647.0 792.5 648.0 792.4 649.0 792.5 650.0 792.5 651.0 792.8 652.0 792.4 653.0 792.6 654.0 792.7 655.0 792.3 656.0 792.9 657.0 793.9 658.0 793.3 659.0 793.8 660.0 794.9 661.0 795.6 662.0 794.8 663.0 795.2 664.0 792.9 665.0 793.2 666.0 792.8 667.0 792.5 668.0 792.9 669.0 790.2 670.0 792.3 671.0 792.8 672.0 792.7 673.0 791.8 674.0 792.9 675.0 792.8 676.0 792.7 677.0 792.8 678.0 793.2 679.0 792.0 680.0 791.9 681.0 792.5 682.0 791.4 683.0 792.6 684.0 792.3 685.0 792.4 686.0 791.5 687.0 792.4 688.0 791.6 689.0 792.5 690.0 793.0 691.0 791.5 692.0 793.3 693.0 793.5 694.0 793.6 695.0 792.5 696.0 793.3 697.0 792.7 698.0 793.3 699.0 792.5 700.0 792.8 701.0 793.4 702.0 792.7 703.0 793.7 704.0 792.7 705.0 792.4 706.0 793.6 707.0 792.8 708.0 793.1 709.0 792.4 710.0 792.0 711.0 792.9 712.0 792.6 713.0 790.1 714.0 792.4 715.0 792.9 716.0 788.8 717.0 792.0 718.0 791.8 719.0 793.5 720.0 791.6 721.0 792.4 722.0 792.5 723.0 791.0 724.0 792.6 725.0 792.9 726.0 791.1 727.0 793.2 728.0 791.6 729.0 793.9 730.0 792.8 731.0 792.7 732.0 793.3 733.0 792.5 734.0 792.8 735.0 793.5 736.0 793.4 737.0 792.9 738.0 792.4 739.0 792.6 740.0 792.4 741.0 792.2 742.0 793.2 743.0 792.5 744.0 793.0 745.0 793.4 746.0 793.9 747.0 794.3 748.0 792.8 749.0 793.4 750.0 792.6 751.0 791.2 752.0 791.3 753.0 790.8 754.0 789.9 755.0 790.1 756.0 790.0 757.0 789.7 758.0 790.2 759.0 790.3 760.0 790.2 761.0 789.6 762.0 789.8 763.0 789.8 764.0 790.1 765.0 789.9 766.0 790.3 767.0 789.9 768.0 789.6 769.0 789.3 770.0 789.7 771.0 790.2 772.0 789.6 773.0 790.3 774.0 789.8 775.0 789.6 776.0 789.7 777.0 789.7 778.0 788.8 779.0 789.7 780.0 789.7 781.0 790.0 782.0 790.3 783.0 789.8 784.0 789.9 785.0 789.8 786.0 790.0 787.0 789.1 788.0 789.9 789.0 789.9 790.0 790.1 791.0 790.4 792.0 790.1 793.0 790.2 794.0 790.4 795.0 790.3 796.0 790.1 797.0 790.4 798.0 789.7 799.0 788.1 800.0 789.9 801.0 789.6 802.0 790.1 803.0 789.9 804.0 790.1 805.0 789.7 806.0 788.7 807.0 788.9 808.0 789.8 809.0 787.9 810.0 789.8 811.0 789.8 812.0 789.8 813.0 788.0 814.0 789.7 815.0 790.6 816.0 791.2 817.0 791.2 818.0 792.7 819.0 793.5 820.0 793.3 821.0 792.1 822.0 791.6 823.0 790.8 824.0 790.5 825.0 789.9 826.0 790.3 827.0 789.8 828.0 790.0 829.0 789.9 830.0 789.9 831.0 790.3 832.0 790.3 833.0 790.1 834.0 789.9 835.0 790.3 836.0 790.2 837.0 789.8 838.0 789.6 839.0 789.8 840.0 790.0 841.0 790.1 842.0 789.6 843.0 789.9 844.0 790.1 845.0 789.6 846.0 789.7 847.0 788.5 848.0 790.3 849.0 790.4 850.0 790.2 851.0 790.0 852.0 789.8 853.0 790.4 854.0 790.4 855.0 789.8 856.0 790.1 857.0 789.8 858.0 790.0 859.0 790.3 860.0 789.8 861.0 789.6 862.0 790.4 863.0 789.9 864.0 789.3 865.0 790.4 866.0 789.0 867.0 790.8 868.0 789.0 869.0 792.4 870.0 793.9 871.0 794.0 872.0 794.3 873.0 792.7 874.0 793.2 875.0 792.6 876.0 792.1 877.0 792.0 878.0 792.8 879.0 791.9 880.0 791.1 881.0 791.8 882.0 792.1 883.0 792.3 884.0 791.6 885.0 791.9 886.0 791.9 887.0 791.8 888.0 792.2 889.0 791.8 890.0 792.1 891.0 790.8 892.0 791.7 893.0 792.7 894.0 791.6 895.0 788.7 896.0 790.4 897.0 792.2 898.0 792.1 899.0 792.0 900.0 791.1 901.0 793.4 902.0 791.1 903.0 792.1 904.0 791.2 905.0 790.5 906.0 791.7 907.0 791.3 908.0 792.7 909.0 791.0 910.0 792.1 911.0 791.9 912.0 791.0 913.0 791.7 914.0 791.6 915.0 793.2 916.0 793.0 917.0 792.1 918.0 791.9 919.0 791.6 920.0 790.0 921.0 792.0 922.0 791.9 923.0 792.0 924.0 792.1 925.0 792.1 926.0 791.8 927.0 790.9 928.0 791.9 929.0 791.3 930.0 792.1 931.0 791.3 932.0 792.1 933.0 792.0 934.0 791.9 935.0 791.7 936.0 792.1 937.0 790.3 938.0 793.3 939.0 790.5 940.0 792.5 941.0 791.7 942.0 791.0 943.0 790.9 944.0 791.5 945.0 792.5 946.0 792.0 947.0 793.1 948.0 791.8 949.0 789.2 950.0 791.7 951.0 791.7 952.0 790.7 953.0 791.8 954.0 792.2 955.0 792.1 956.0 792.1 957.0 793.1 958.0 793.2 959.0 792.0 960.0 791.3 961.0 792.1 962.0 790.8 963.0 791.9 964.0 790.7 965.0 791.9 966.0 791.0 967.0 792.0 968.0 791.9 969.0 791.8 970.0 791.7 971.0 791.7 972.0 791.9 973.0 793.1 974.0 792.0 975.0 792.2 976.0 791.8 977.0 792.9 978.0 792.1 979.0 791.5 980.0 792.1 981.0 791.6 982.0 791.9 983.0 791.7 984.0 791.8 985.0 792.1 986.0 792.1 987.0 792.1 988.0 792.0 989.0 791.3 990.0 792.0 991.0 791.7 992.0 793.0 993.0 792.6 994.0 793.3 995.0 794.3 996.0 793.7 997.0 792.6 998.0 792.0 999.0 791.3 1000.0 788.5 1001.0 789.8 1002.0 789.8 1003.0 790.3 1004.0 789.9 1005.0 789.7 1006.0 790.0 1007.0 790.2 1008.0 790.0 1009.0 789.8 1010.0 790.1 1011.0 790.3 1012.0 789.8 1013.0 790.0 1014.0 789.6 1015.0 790.1 1016.0 787.6 1017.0 789.7 1018.0 789.8 1019.0 788.5 1020.0 790.1 1021.0 789.9 1022.0 789.7 1023.0 790.1 1024.0 790.3 1025.0 789.7 1026.0 790.3 1027.0 787.5 1028.0 789.7 1029.0 790.2 1030.0 789.9 1031.0 790.1 1032.0 787.9 1033.0 789.6 1034.0 789.9 1035.0 790.2 1036.0 789.8 1037.0 789.7 1038.0 789.9 1039.0 790.2 1040.0 789.9 1041.0 789.8 1042.0 790.0 1043.0 789.7 1044.0 790.3 1045.0 789.9 1046.0 789.8 1047.0 789.9 1048.0 790.0 1049.0 790.3 1050.0 790.3 1051.0 789.8 1052.0 790.4 1053.0 790.0 1054.0 789.8 1055.0 790.1 1056.0 789.6 1057.0 790.3 1058.0 789.7 1059.0 790.1 1060.0 789.8 1061.0 790.1 1062.0 789.8 1063.0 790.0 1064.0 790.0 1065.0 790.0 1066.0 789.8 1067.0 790.3 1068.0 790.3 1069.0 790.1 1070.0 789.8 1071.0 790.1 1072.0 789.7 1073.0 790.3 1074.0 790.3 1075.0 790.2 1076.0 789.8 1077.0 790.4 1078.0 789.6 1079.0 789.8 1080.0 790.2 1081.0 789.8 1082.0 789.9 1083.0 789.9 1084.0 789.8 1085.0 789.9 1086.0 790.2 1087.0 790.1 1088.0 790.3 1089.0 790.2 1090.0 790.3 1091.0 789.7 1092.0 790.2 1093.0 790.2 1094.0 790.0 1095.0 790.3 1096.0 789.6 1097.0 789.7 1098.0 789.6 1099.0 790.0 1100.0 790.1 1101.0 789.4 1102.0 790.4 1103.0 791.5 1104.0 792.3 1105.0 791.7 1106.0 794.0 1107.0 791.6 1108.0 792.1 1109.0 792.3 1110.0 790.7 1111.0 790.1 1112.0 787.5 1113.0 788.7 1114.0 790.1 1115.0 789.7 1116.0 789.7 1117.0 790.3 1118.0 790.0 1119.0 789.9 1120.0 790.4 1121.0 790.3 1122.0 790.3 1123.0 789.9 1124.0 790.0 1125.0 790.1 1126.0 790.4 1127.0 790.1 1128.0 789.2 1129.0 789.6 1130.0 789.4 1131.0 790.2 1132.0 789.9 1133.0 790.4 1134.0 789.8 1135.0 789.9 1136.0 790.4 1137.0 790.2 1138.0 790.3 1139.0 790.2 1140.0 789.4 1141.0 789.7 1142.0 789.4 1143.0 790.3 1144.0 789.8 1145.0 790.8 1146.0 790.9 1147.0 793.0 1148.0 793.6 1149.0 793.6 1150.0 793.5 1151.0 791.2 1152.0 791.5 1153.0 790.9 1154.0 790.3 1155.0 789.8 1156.0 790.0 1157.0 790.1 1158.0 789.8 1159.0 790.2 1160.0 790.3 1161.0 789.9 1162.0 790.2 1163.0 789.4 1164.0 789.7 1165.0 790.1 1166.0 790.2 1167.0 789.7 1168.0 789.9 1169.0 789.6 1170.0 789.9 1171.0 790.3 1172.0 790.0 1173.0 790.0 1174.0 789.8 1175.0 790.1 1176.0 790.1 1177.0 790.0 1178.0 790.0 1179.0 790.1 1180.0 790.0 1181.0 789.7 1182.0 789.8 1183.0 790.1 1184.0 789.8 1185.0 790.3 1186.0 790.3 1187.0 790.2 1188.0 789.2 1189.0 790.2 1190.0 789.9 1191.0 789.8 1192.0 790.0 1193.0 790.0 1194.0 789.9 1195.0 790.1 1196.0 788.0 1197.0 790.4 1198.0 789.6 1199.0 790.3 1200.0 788.2 1201.0 790.3 1202.0 790.0 1203.0 790.0 1204.0 788.4 1205.0 790.6 1206.0 791.2 1207.0 792.1 1208.0 791.8 1209.0 794.1 1210.0 793.3 1211.0 793.0 1212.0 791.9 1213.0 791.4 1214.0 790.8 1215.0 790.8 1216.0 790.9 1217.0 790.9 1218.0 790.6 1219.0 790.9 1220.0 790.6 1221.0 790.4 1222.0 790.9 1223.0 790.5 1224.0 790.1 1225.0 790.7 1226.0 790.6 1227.0 790.6 1228.0 790.9 1229.0 790.9 1230.0 790.9 1231.0 791.1 1232.0 790.0 1233.0 790.9 1234.0 790.6 1235.0 791.0 1236.0 790.9 1237.0 790.6 1238.0 790.5 1239.0 790.8 1240.0 791.0 1241.0 791.0 1242.0 790.9 1243.0 790.7 1244.0 791.0 1245.0 790.6 1246.0 790.5 1247.0 790.5 1248.0 790.5 1249.0 790.7 1250.0 790.9 1251.0 791.1 1252.0 790.8 1253.0 790.6 1254.0 791.1 1255.0 790.8 1256.0 790.3 1257.0 790.6 1258.0 790.5 1259.0 790.8 1260.0 791.0 1261.0 790.4 1262.0 791.1 1263.0 790.4 1264.0 790.9 1265.0 790.8 1266.0 790.7 1267.0 790.4 1268.0 791.1 1269.0 790.7 1270.0 790.9 1271.0 788.7 1272.0 791.1 1273.0 790.7 1274.0 790.7 1275.0 790.2 1276.0 790.5 1277.0 790.6 1278.0 790.6 1279.0 790.6 1280.0 790.4 1281.0 790.7 1282.0 790.6 1283.0 790.9 1284.0 790.7 1285.0 791.0 1286.0 790.6 1287.0 791.0 1288.0 789.0 1289.0 790.5 1290.0 790.8 1291.0 791.0 1292.0 790.5 1293.0 790.5 1294.0 790.6 1295.0 790.9 1296.0 790.4 1297.0 790.8 1298.0 790.6 1299.0 790.8 1300.0 790.7 1301.0 790.6 1302.0 791.0 1303.0 790.5 1304.0 790.7 1305.0 790.4 1306.0 790.6 1307.0 790.7 1308.0 790.5 1309.0 791.1 1310.0 790.5 1311.0 790.4 1312.0 791.0 1313.0 788.7 1314.0 790.9 1315.0 790.5 1316.0 790.4 1317.0 790.6 1318.0 790.7 1319.0 790.8 1320.0 790.5 1321.0 789.0 1322.0 789.7 1323.0 790.7 1324.0 791.1 1325.0 791.7 1326.0 793.7 1327.0 792.9 1328.0 793.6 1329.0 792.2 1330.0 793.9 1331.0 792.4 1332.0 792.8 1333.0 792.2 1334.0 792.0 1335.0 792.0 1336.0 792.0 1337.0 791.6 1338.0 791.8 1339.0 793.3 1340.0 791.8 1341.0 791.8 1342.0 791.7 1343.0 790.8 1344.0 792.9 1345.0 791.4 1346.0 792.0 1347.0 790.4 1348.0 792.8 1349.0 791.7 1350.0 791.8 1351.0 792.9 1352.0 792.1 1353.0 793.0 1354.0 791.9 1355.0 793.4 1356.0 791.9 1357.0 791.9 1358.0 792.4 1359.0 791.0 1360.0 791.9 1361.0 790.5 1362.0 791.8 1363.0 793.1 1364.0 792.1 1365.0 791.4 1366.0 791.6 1367.0 792.0 1368.0 792.5 1369.0 791.9 1370.0 791.2 1371.0 791.1 1372.0 792.1 1373.0 791.9 1374.0 792.2 1375.0 792.1 1376.0 791.8 1377.0 792.1 1378.0 791.0 1379.0 792.1 1380.0 791.4 1381.0 792.0 1382.0 792.6 1383.0 791.3 1384.0 792.1 1385.0 790.5 1386.0 792.0 1387.0 792.0 1388.0 792.9 1389.0 792.0 1390.0 791.7 1391.0 792.5 1392.0 792.2 1393.0 791.7 1394.0 791.6 1395.0 792.7 1396.0 789.8 1397.0 792.0 1398.0 791.9 1399.0 791.8 1400.0 792.0 1401.0 791.6 1402.0 790.1 1403.0 792.2 1404.0 792.2 1405.0 793.2 1406.0 793.5 1407.0 794.0 1408.0 794.6 1409.0 794.2 1410.0 793.1 1411.0 793.0 1412.0 792.6 1413.0 791.0 1414.0 792.1 1415.0 791.8 1416.0 792.5 1417.0 792.1 1418.0 791.8 1419.0 791.4 1420.0 792.3 1421.0 792.2 1422.0 791.4 1423.0 791.0 1424.0 790.4 1425.0 791.6 1426.0 791.9 1427.0 791.8 1428.0 792.3 1429.0 791.6 1430.0 791.8 1431.0 791.0 1432.0 791.9 1433.0 789.9 1434.0 792.0 1435.0 792.1 1436.0 792.4 1437.0 791.7 1438.0 791.8 1439.0 791.7 1440.0 791.7 1441.0 791.5 1442.0 790.3 1443.0 792.0 1444.0 791.1 1445.0 791.7 1446.0 792.0 1447.0 790.8 1448.0 792.0 1449.0 791.3 1450.0 791.9 1451.0 792.1 1452.0 792.9 1453.0 792.1 1454.0 791.6 1455.0 791.7 1456.0 791.3 1457.0 793.0 1458.0 791.8 1459.0 791.7 1460.0 792.2 1461.0 790.9 1462.0 792.0 1463.0 791.9 1464.0 791.9 1465.0 792.2 1466.0 791.4 1467.0 791.8 1468.0 791.8 1469.0 791.9 1470.0 792.0 1471.0 791.9 1472.0 792.0 1473.0 792.5 1474.0 791.9 1475.0 793.0 1476.0 792.1 1477.0 791.7 1478.0 791.3 1479.0 791.9 1480.0 791.7 1481.0 792.1 1482.0 791.8 1483.0 792.2 1484.0 791.6 1485.0 791.0 1486.0 791.8 1487.0 792.1 1488.0 792.1 1489.0 792.5 1490.0 791.5 1491.0 792.9 1492.0 791.6 1493.0 791.3 1494.0 787.8 1495.0 791.4 1496.0 790.3 1497.0 788.1 1498.0 792.2 1499.0 793.0 1500.0 792.1 1501.0 791.9 1502.0 792.0 1503.0 792.1 1504.0 792.0 1505.0 793.0 1506.0 792.1 1507.0 791.9 1508.0 792.6 1509.0 792.9 1510.0 793.0 1511.0 791.8 1512.0 791.6 1513.0 792.5 1514.0 794.2 1515.0 794.8 1516.0 794.7 1517.0 793.8 1518.0 793.6 1519.0 792.5 1520.0 792.2 1521.0 792.6 1522.0 792.6 1523.0 792.7 1524.0 793.4 1525.0 793.5 1526.0 793.4 1527.0 792.9 1528.0 792.4 1529.0 793.6 1530.0 792.6 1531.0 793.4 1532.0 792.5 1533.0 790.5 1534.0 792.5 1535.0 792.9 1536.0 793.6 1537.0 792.5 1538.0 793.1 1539.0 790.5 1540.0 792.5 1541.0 792.6 1542.0 791.2 1543.0 791.8 1544.0 792.4 1545.0 793.9 1546.0 792.7 1547.0 791.4 1548.0 792.8 1549.0 792.6 1550.0 791.9 1551.0 792.9 1552.0 792.9 1553.0 792.7 1554.0 792.6 1555.0 792.9 1556.0 792.5 1557.0 791.6 1558.0 792.7 1559.0 792.8 1560.0 792.4 1561.0 793.5 1562.0 792.5 1563.0 792.2 1564.0 793.6 1565.0 793.2 1566.0 792.4 1567.0 792.7 1568.0 792.8 1569.0 792.7 1570.0 792.9 1571.0 793.0 1572.0 792.6 1573.0 792.4 1574.0 792.7 1575.0 792.1 1576.0 792.4 1577.0 792.2 1578.0 792.8 1579.0 792.8 1580.0 792.7 1581.0 793.1 1582.0 793.3 1583.0 793.9 1584.0 794.2 1585.0 795.4 1586.0 793.6 1587.0 791.7 1588.0 792.0 1589.0 791.5 1590.0 790.1 1591.0 790.4 1592.0 789.9 1593.0 790.3 1594.0 790.2 1595.0 790.3 1596.0 789.6 1597.0 789.9 1598.0 790.0 1599.0 790.1 1600.0 790.0 1601.0 790.0 1602.0 790.4 1603.0 790.1 1604.0 788.3 1605.0 790.0 1606.0 790.2 1607.0 790.4 1608.0 790.0 1609.0 790.4 1610.0 789.2 1611.0 790.1 1612.0 788.2 1613.0 787.1 1614.0 789.8 1615.0 789.9 1616.0 789.8 1617.0 790.3 1618.0 790.3 1619.0 789.7 1620.0 790.3 1621.0 790.2 1622.0 790.2 1623.0 790.1 1624.0 790.0 1625.0 789.8 1626.0 790.2 1627.0 790.4 1628.0 790.3 1629.0 789.9 1630.0 789.6 1631.0 790.2 1632.0 789.7 1633.0 789.7 1634.0 790.2 1635.0 789.9 1636.0 789.8 1637.0 790.0 1638.0 789.9 1639.0 789.6 1640.0 789.7 1641.0 790.0 1642.0 789.7 1643.0 790.2 1644.0 789.8 1645.0 789.8 1646.0 790.1 1647.0 789.7 1648.0 790.2 1649.0 790.2 1650.0 789.4 1651.0 790.1 1652.0 790.1 1653.0 789.7 1654.0 789.7 1655.0 789.8 1656.0 790.2 1657.0 789.7 1658.0 790.2 1659.0 790.2 1660.0 789.9 1661.0 789.6 1662.0 789.9 1663.0 787.9 1664.0 789.9 1665.0 789.8 1666.0 790.4 1667.0 790.4 1668.0 789.6 1669.0 790.2 1670.0 789.9 1671.0 790.1 1672.0 789.8 1673.0 789.8 1674.0 790.1 1675.0 790.0 1676.0 789.9 1677.0 790.3 1678.0 790.0 1679.0 790.3 1680.0 790.3 1681.0 789.5 1682.0 790.4 1683.0 789.9 1684.0 790.2 1685.0 790.1 1686.0 789.8 1687.0 790.3 1688.0 789.7 1689.0 790.2 1690.0 789.8 1691.0 789.6 1692.0 790.1 1693.0 789.6 1694.0 790.2 1695.0 790.2 1696.0 788.9 1697.0 789.7 1698.0 789.3 1699.0 790.3 1700.0 789.8 1701.0 789.7 1702.0 790.3 1703.0 790.2 1704.0 790.0 1705.0 789.9 1706.0 789.7 1707.0 789.7 1708.0 789.7 1709.0 790.3 1710.0 790.0 1711.0 789.7 1712.0 790.3 1713.0 790.3 1714.0 790.3 1715.0 790.2 1716.0 790.2 1717.0 790.3 1718.0 791.0 1719.0 790.5 1720.0 792.9 1721.0 793.3 1722.0 792.4 1723.0 792.3 1724.0 790.9 1725.0 791.4 1726.0 790.5 1727.0 790.0 1728.0 790.4 1729.0 790.3 1730.0 790.3 1731.0 790.2 1732.0 790.3 1733.0 790.3 1734.0 790.2 1735.0 790.2 1736.0 789.9 1737.0 789.8 1738.0 790.0 1739.0 790.3 1740.0 789.7 1741.0 790.2 1742.0 790.1 1743.0 789.9 1744.0 790.2 1745.0 789.8 1746.0 790.2 1747.0 790.1 1748.0 789.9 1749.0 790.4 1750.0 790.4 1751.0 790.1 1752.0 789.8 1753.0 789.8 1754.0 789.9 1755.0 790.0 1756.0 789.7 1757.0 789.7 1758.0 790.0 1759.0 790.1 1760.0 789.6 1761.0 789.6 1762.0 790.0 1763.0 789.7 1764.0 788.5 1765.0 789.9 L1765.0 805.4 1764.0 804.8 1763.0 805.4 1762.0 805.4 1761.0 805.1 1760.0 805.5 1759.0 805.1 1758.0 805.4 1757.0 807.0 1756.0 805.4 1755.0 805.5 1754.0 804.9 1753.0 805.2 1752.0 805.5 1751.0 807.5 1750.0 805.0 1749.0 805.5 1748.0 805.3 1747.0 805.2 1746.0 808.6 1745.0 805.1 1744.0 804.9 1743.0 805.2 1742.0 805.0 1741.0 804.9 1740.0 805.3 1739.0 804.8 1738.0 805.1 1737.0 805.3 1736.0 805.1 1735.0 805.4 1734.0 805.3 1733.0 808.7 1732.0 807.6 1731.0 805.1 1730.0 805.4 1729.0 804.9 1728.0 804.8 1727.0 805.1 1726.0 804.9 1725.0 804.2 1724.0 803.6 1723.0 801.7 1722.0 801.0 1721.0 801.9 1720.0 802.4 1719.0 802.5 1718.0 804.3 1717.0 804.8 1716.0 805.3 1715.0 805.5 1714.0 805.2 1713.0 805.1 1712.0 805.2 1711.0 805.2 1710.0 804.9 1709.0 805.3 1708.0 805.2 1707.0 805.5 1706.0 805.4 1705.0 804.9 1704.0 804.9 1703.0 806.0 1702.0 804.8 1701.0 805.1 1700.0 806.0 1699.0 805.1 1698.0 805.4 1697.0 805.4 1696.0 804.8 1695.0 804.8 1694.0 805.4 1693.0 805.3 1692.0 805.0 1691.0 805.5 1690.0 805.6 1689.0 806.8 1688.0 805.3 1687.0 807.7 1686.0 805.6 1685.0 807.7 1684.0 805.6 1683.0 808.8 1682.0 805.1 1681.0 805.0 1680.0 805.0 1679.0 805.6 1678.0 805.3 1677.0 805.5 1676.0 806.3 1675.0 805.3 1674.0 805.4 1673.0 804.8 1672.0 805.5 1671.0 805.5 1670.0 804.9 1669.0 804.9 1668.0 805.4 1667.0 805.5 1666.0 807.5 1665.0 805.2 1664.0 805.1 1663.0 805.4 1662.0 805.0 1661.0 805.0 1660.0 805.0 1659.0 805.0 1658.0 805.1 1657.0 805.3 1656.0 805.5 1655.0 805.5 1654.0 804.9 1653.0 805.2 1652.0 805.1 1651.0 805.5 1650.0 805.1 1649.0 805.1 1648.0 804.9 1647.0 805.6 1646.0 805.1 1645.0 808.1 1644.0 806.2 1643.0 804.9 1642.0 805.2 1641.0 805.9 1640.0 805.1 1639.0 805.1 1638.0 805.0 1637.0 807.4 1636.0 808.0 1635.0 806.9 1634.0 804.9 1633.0 807.9 1632.0 805.2 1631.0 806.0 1630.0 805.2 1629.0 805.1 1628.0 808.0 1627.0 805.3 1626.0 805.9 1625.0 805.0 1624.0 805.5 1623.0 804.9 1622.0 804.8 1621.0 805.2 1620.0 805.4 1619.0 805.4 1618.0 809.1 1617.0 807.0 1616.0 806.5 1615.0 805.3 1614.0 807.8 1613.0 805.5 1612.0 804.8 1611.0 805.1 1610.0 805.2 1609.0 805.4 1608.0 805.3 1607.0 806.0 1606.0 804.8 1605.0 805.3 1604.0 805.4 1603.0 805.3 1602.0 805.6 1601.0 804.8 1600.0 804.9 1599.0 805.3 1598.0 805.3 1597.0 805.4 1596.0 805.2 1595.0 805.4 1594.0 805.2 1593.0 805.6 1592.0 805.0 1591.0 805.4 1590.0 804.4 1589.0 803.9 1588.0 802.4 1587.0 802.6 1586.0 801.9 1585.0 799.6 1584.0 801.5 1583.0 801.3 1582.0 801.8 1581.0 804.4 1580.0 802.8 1579.0 802.7 1578.0 804.7 1577.0 802.4 1576.0 806.7 1575.0 806.3 1574.0 803.7 1573.0 802.5 1572.0 802.6 1571.0 801.6 1570.0 802.3 1569.0 802.6 1568.0 804.8 1567.0 802.3 1566.0 803.5 1565.0 802.0 1564.0 803.3 1563.0 801.4 1562.0 805.1 1561.0 801.6 1560.0 802.8 1559.0 802.3 1558.0 802.4 1557.0 801.3 1556.0 802.8 1555.0 802.7 1554.0 801.8 1553.0 802.4 1552.0 802.5 1551.0 802.3 1550.0 802.7 1549.0 803.3 1548.0 802.7 1547.0 802.6 1546.0 802.6 1545.0 801.8 1544.0 802.4 1543.0 801.4 1542.0 802.1 1541.0 803.1 1540.0 805.7 1539.0 805.3 1538.0 803.3 1537.0 802.6 1536.0 803.2 1535.0 802.4 1534.0 802.8 1533.0 802.4 1532.0 802.4 1531.0 802.4 1530.0 802.5 1529.0 801.2 1528.0 802.7 1527.0 802.9 1526.0 803.5 1525.0 802.9 1524.0 803.1 1523.0 802.5 1522.0 802.4 1521.0 802.6 1520.0 802.9 1519.0 801.2 1518.0 801.6 1517.0 800.3 1516.0 800.6 1515.0 800.5 1514.0 801.1 1513.0 804.9 1512.0 801.8 1511.0 803.0 1510.0 803.3 1509.0 803.5 1508.0 803.5 1507.0 803.6 1506.0 802.0 1505.0 802.9 1504.0 805.6 1503.0 803.5 1502.0 803.1 1501.0 803.3 1500.0 803.2 1499.0 804.6 1498.0 803.2 1497.0 802.1 1496.0 803.8 1495.0 804.0 1494.0 804.5 1493.0 801.7 1492.0 803.3 1491.0 802.7 1490.0 802.2 1489.0 802.0 1488.0 803.1 1487.0 803.2 1486.0 803.2 1485.0 803.9 1484.0 805.1 1483.0 804.4 1482.0 803.3 1481.0 803.5 1480.0 803.4 1479.0 803.1 1478.0 803.9 1477.0 802.8 1476.0 803.4 1475.0 802.6 1474.0 803.5 1473.0 802.9 1472.0 803.5 1471.0 803.6 1470.0 803.5 1469.0 803.2 1468.0 803.7 1467.0 803.5 1466.0 804.4 1465.0 805.9 1464.0 803.2 1463.0 803.5 1462.0 803.4 1461.0 805.3 1460.0 803.1 1459.0 803.8 1458.0 803.8 1457.0 806.0 1456.0 803.3 1455.0 804.9 1454.0 803.6 1453.0 803.1 1452.0 804.0 1451.0 803.4 1450.0 803.5 1449.0 803.2 1448.0 803.1 1447.0 803.4 1446.0 803.1 1445.0 803.2 1444.0 802.2 1443.0 804.6 1442.0 803.6 1441.0 802.8 1440.0 803.6 1439.0 803.2 1438.0 803.3 1437.0 803.1 1436.0 802.1 1435.0 803.3 1434.0 802.7 1433.0 803.3 1432.0 803.1 1431.0 808.8 1430.0 803.3 1429.0 803.1 1428.0 805.1 1427.0 803.0 1426.0 803.1 1425.0 803.5 1424.0 802.6 1423.0 801.9 1422.0 803.2 1421.0 803.5 1420.0 803.3 1419.0 802.7 1418.0 803.1 1417.0 803.1 1416.0 804.2 1415.0 803.1 1414.0 803.2 1413.0 803.8 1412.0 802.7 1411.0 802.2 1410.0 800.9 1409.0 801.1 1408.0 800.5 1407.0 801.4 1406.0 801.4 1405.0 802.4 1404.0 803.0 1403.0 803.6 1402.0 805.2 1401.0 803.4 1400.0 803.3 1399.0 805.5 1398.0 803.2 1397.0 803.4 1396.0 803.8 1395.0 804.0 1394.0 805.2 1393.0 804.2 1392.0 803.1 1391.0 803.8 1390.0 803.4 1389.0 806.2 1388.0 806.2 1387.0 801.9 1386.0 803.4 1385.0 803.6 1384.0 803.0 1383.0 803.2 1382.0 802.9 1381.0 803.7 1380.0 803.7 1379.0 803.1 1378.0 807.7 1377.0 803.4 1376.0 803.5 1375.0 803.8 1374.0 803.6 1373.0 803.3 1372.0 803.3 1371.0 803.9 1370.0 802.1 1369.0 803.0 1368.0 803.9 1367.0 803.3 1366.0 803.3 1365.0 803.7 1364.0 803.3 1363.0 802.7 1362.0 803.4 1361.0 802.9 1360.0 803.5 1359.0 804.0 1358.0 806.2 1357.0 803.4 1356.0 803.2 1355.0 804.5 1354.0 803.0 1353.0 803.6 1352.0 803.1 1351.0 805.1 1350.0 804.1 1349.0 803.1 1348.0 804.6 1347.0 803.0 1346.0 803.4 1345.0 803.0 1344.0 802.7 1343.0 803.6 1342.0 802.7 1341.0 804.1 1340.0 803.5 1339.0 802.2 1338.0 803.4 1337.0 806.0 1336.0 805.5 1335.0 803.6 1334.0 803.7 1333.0 802.6 1332.0 802.5 1331.0 801.4 1330.0 801.3 1329.0 800.3 1328.0 801.5 1327.0 802.3 1326.0 801.7 1325.0 803.6 1324.0 804.1 1323.0 804.1 1322.0 804.6 1321.0 804.1 1320.0 804.7 1319.0 805.1 1318.0 804.3 1317.0 804.5 1316.0 804.5 1315.0 804.1 1314.0 804.7 1313.0 804.2 1312.0 804.3 1311.0 804.4 1310.0 804.6 1309.0 807.3 1308.0 805.4 1307.0 804.1 1306.0 804.5 1305.0 807.1 1304.0 804.3 1303.0 804.5 1302.0 806.7 1301.0 804.7 1300.0 804.3 1299.0 807.8 1298.0 806.2 1297.0 804.8 1296.0 804.8 1295.0 804.6 1294.0 804.1 1293.0 804.7 1292.0 804.7 1291.0 804.6 1290.0 806.7 1289.0 804.6 1288.0 804.2 1287.0 804.7 1286.0 804.5 1285.0 804.6 1284.0 804.4 1283.0 804.3 1282.0 804.7 1281.0 804.2 1280.0 804.7 1279.0 804.7 1278.0 804.6 1277.0 804.5 1276.0 804.8 1275.0 804.2 1274.0 804.8 1273.0 804.2 1272.0 804.5 1271.0 804.3 1270.0 806.9 1269.0 805.1 1268.0 804.2 1267.0 804.3 1266.0 804.6 1265.0 805.5 1264.0 804.1 1263.0 804.6 1262.0 804.5 1261.0 804.8 1260.0 804.4 1259.0 804.1 1258.0 804.2 1257.0 804.5 1256.0 804.6 1255.0 804.6 1254.0 804.7 1253.0 804.1 1252.0 804.8 1251.0 804.1 1250.0 804.2 1249.0 804.3 1248.0 804.8 1247.0 807.7 1246.0 804.8 1245.0 804.4 1244.0 804.8 1243.0 805.8 1242.0 804.1 1241.0 804.7 1240.0 804.7 1239.0 804.2 1238.0 804.5 1237.0 804.2 1236.0 805.5 1235.0 806.1 1234.0 804.7 1233.0 804.6 1232.0 804.7 1231.0 804.7 1230.0 804.7 1229.0 804.5 1228.0 804.8 1227.0 804.8 1226.0 804.7 1225.0 804.8 1224.0 804.2 1223.0 804.7 1222.0 804.4 1221.0 804.3 1220.0 804.5 1219.0 804.5 1218.0 804.4 1217.0 804.7 1216.0 805.9 1215.0 804.2 1214.0 808.0 1213.0 805.6 1212.0 805.5 1211.0 802.3 1210.0 801.9 1209.0 800.9 1208.0 803.3 1207.0 803.8 1206.0 803.8 1205.0 804.5 1204.0 805.5 1203.0 804.9 1202.0 805.3 1201.0 805.2 1200.0 805.9 1199.0 805.5 1198.0 804.9 1197.0 805.0 1196.0 805.3 1195.0 805.1 1194.0 805.5 1193.0 805.0 1192.0 807.5 1191.0 805.6 1190.0 805.3 1189.0 806.9 1188.0 805.1 1187.0 805.5 1186.0 805.0 1185.0 805.1 1184.0 805.4 1183.0 804.9 1182.0 807.3 1181.0 805.3 1180.0 805.0 1179.0 805.4 1178.0 805.8 1177.0 805.2 1176.0 805.1 1175.0 805.4 1174.0 804.9 1173.0 804.9 1172.0 805.1 1171.0 805.0 1170.0 805.1 1169.0 805.3 1168.0 804.8 1167.0 805.0 1166.0 805.2 1165.0 805.6 1164.0 805.0 1163.0 806.0 1162.0 805.2 1161.0 805.3 1160.0 805.0 1159.0 806.9 1158.0 805.1 1157.0 808.3 1156.0 805.0 1155.0 805.1 1154.0 805.3 1153.0 804.2 1152.0 803.3 1151.0 802.4 1150.0 801.9 1149.0 801.9 1148.0 801.3 1147.0 804.6 1146.0 804.1 1145.0 804.6 1144.0 804.9 1143.0 804.9 1142.0 808.9 1141.0 804.9 1140.0 804.9 1139.0 806.4 1138.0 804.9 1137.0 805.1 1136.0 805.5 1135.0 805.4 1134.0 805.5 1133.0 804.8 1132.0 805.4 1131.0 805.2 1130.0 805.2 1129.0 805.4 1128.0 805.4 1127.0 805.5 1126.0 805.2 1125.0 805.4 1124.0 804.9 1123.0 805.0 1122.0 805.0 1121.0 805.1 1120.0 805.5 1119.0 805.5 1118.0 805.2 1117.0 805.0 1116.0 804.9 1115.0 805.0 1114.0 805.0 1113.0 805.3 1112.0 805.3 1111.0 805.0 1110.0 804.8 1109.0 802.6 1108.0 802.8 1107.0 803.2 1106.0 801.2 1105.0 801.9 1104.0 802.8 1103.0 803.5 1102.0 804.7 1101.0 805.0 1100.0 805.2 1099.0 805.4 1098.0 805.1 1097.0 808.1 1096.0 804.9 1095.0 804.9 1094.0 804.9 1093.0 805.5 1092.0 805.5 1091.0 805.9 1090.0 805.3 1089.0 805.1 1088.0 805.0 1087.0 805.3 1086.0 805.0 1085.0 805.5 1084.0 805.4 1083.0 805.5 1082.0 805.3 1081.0 806.5 1080.0 805.3 1079.0 805.3 1078.0 805.0 1077.0 804.8 1076.0 805.7 1075.0 805.2 1074.0 805.4 1073.0 805.5 1072.0 805.1 1071.0 804.8 1070.0 805.3 1069.0 805.3 1068.0 805.5 1067.0 805.6 1066.0 805.0 1065.0 805.5 1064.0 805.1 1063.0 805.3 1062.0 805.0 1061.0 804.9 1060.0 805.2 1059.0 804.9 1058.0 805.5 1057.0 805.4 1056.0 805.3 1055.0 805.4 1054.0 805.4 1053.0 805.3 1052.0 804.9 1051.0 806.9 1050.0 805.1 1049.0 805.5 1048.0 805.4 1047.0 808.3 1046.0 805.3 1045.0 805.3 1044.0 805.4 1043.0 805.1 1042.0 805.4 1041.0 805.9 1040.0 805.3 1039.0 804.9 1038.0 804.9 1037.0 806.1 1036.0 805.0 1035.0 805.1 1034.0 805.0 1033.0 805.4 1032.0 804.9 1031.0 805.0 1030.0 805.1 1029.0 805.2 1028.0 805.4 1027.0 805.5 1026.0 804.9 1025.0 805.3 1024.0 805.2 1023.0 806.4 1022.0 804.9 1021.0 805.4 1020.0 808.4 1019.0 806.2 1018.0 805.5 1017.0 805.0 1016.0 808.7 1015.0 804.9 1014.0 805.1 1013.0 804.8 1012.0 805.4 1011.0 805.2 1010.0 805.1 1009.0 807.9 1008.0 805.2 1007.0 805.0 1006.0 805.2 1005.0 804.9 1004.0 804.9 1003.0 805.3 1002.0 805.3 1001.0 805.1 1000.0 805.0 999.0 803.9 998.0 803.2 997.0 803.5 996.0 801.3 995.0 800.6 994.0 802.3 993.0 801.0 992.0 804.7 991.0 804.3 990.0 803.0 989.0 802.8 988.0 803.3 987.0 803.4 986.0 802.0 985.0 803.3 984.0 804.3 983.0 803.4 982.0 803.3 981.0 803.2 980.0 803.6 979.0 804.2 978.0 803.5 977.0 804.4 976.0 803.1 975.0 804.7 974.0 803.1 973.0 804.2 972.0 804.1 971.0 803.3 970.0 803.4 969.0 806.0 968.0 806.0 967.0 802.3 966.0 803.5 965.0 803.5 964.0 804.3 963.0 803.5 962.0 802.9 961.0 803.3 960.0 803.0 959.0 803.2 958.0 803.7 957.0 804.0 956.0 803.1 955.0 803.0 954.0 807.6 953.0 803.1 952.0 802.6 951.0 803.4 950.0 804.9 949.0 803.4 948.0 804.2 947.0 804.0 946.0 803.4 945.0 803.8 944.0 803.7 943.0 802.9 942.0 804.5 941.0 803.3 940.0 802.7 939.0 802.8 938.0 801.9 937.0 804.7 936.0 803.4 935.0 803.4 934.0 803.2 933.0 803.2 932.0 802.0 931.0 805.5 930.0 802.5 929.0 803.4 928.0 803.5 927.0 803.1 926.0 802.0 925.0 803.7 924.0 804.4 923.0 803.2 922.0 803.6 921.0 803.6 920.0 803.3 919.0 803.1 918.0 802.5 917.0 803.7 916.0 802.9 915.0 802.6 914.0 804.0 913.0 803.3 912.0 802.5 911.0 803.2 910.0 803.3 909.0 803.9 908.0 802.3 907.0 801.8 906.0 803.1 905.0 804.7 904.0 802.2 903.0 803.1 902.0 804.5 901.0 803.8 900.0 804.1 899.0 803.6 898.0 803.3 897.0 803.5 896.0 803.1 895.0 803.1 894.0 803.5 893.0 802.7 892.0 803.2 891.0 803.5 890.0 803.2 889.0 803.5 888.0 803.3 887.0 802.4 886.0 803.6 885.0 803.5 884.0 803.0 883.0 802.9 882.0 803.6 881.0 803.3 880.0 802.9 879.0 803.2 878.0 802.8 877.0 803.9 876.0 804.1 875.0 803.0 874.0 802.1 873.0 802.0 872.0 801.8 871.0 801.0 870.0 801.8 869.0 803.7 868.0 804.8 867.0 804.1 866.0 805.2 865.0 805.5 864.0 805.0 863.0 805.3 862.0 804.8 861.0 805.6 860.0 804.9 859.0 805.0 858.0 804.9 857.0 805.0 856.0 805.4 855.0 805.3 854.0 805.4 853.0 805.0 852.0 805.5 851.0 805.2 850.0 805.0 849.0 804.9 848.0 805.4 847.0 806.3 846.0 805.6 845.0 805.6 844.0 804.8 843.0 805.1 842.0 805.4 841.0 804.8 840.0 805.2 839.0 805.3 838.0 805.1 837.0 805.3 836.0 805.5 835.0 805.1 834.0 805.1 833.0 805.4 832.0 805.5 831.0 805.2 830.0 805.1 829.0 804.9 828.0 805.1 827.0 805.3 826.0 807.1 825.0 806.1 824.0 805.1 823.0 804.2 822.0 803.5 821.0 806.0 820.0 802.1 819.0 801.6 818.0 802.5 817.0 803.8 816.0 804.0 815.0 805.0 814.0 805.5 813.0 805.4 812.0 805.6 811.0 805.1 810.0 805.5 809.0 805.6 808.0 805.2 807.0 805.5 806.0 804.9 805.0 804.9 804.0 805.0 803.0 805.5 802.0 805.6 801.0 807.6 800.0 805.4 799.0 805.1 798.0 805.3 797.0 805.5 796.0 805.3 795.0 805.3 794.0 805.5 793.0 806.2 792.0 804.9 791.0 805.5 790.0 804.9 789.0 805.3 788.0 807.1 787.0 805.0 786.0 804.8 785.0 805.1 784.0 804.9 783.0 805.2 782.0 805.5 781.0 807.8 780.0 805.3 779.0 807.2 778.0 805.2 777.0 805.6 776.0 807.7 775.0 804.9 774.0 805.4 773.0 805.4 772.0 805.0 771.0 805.0 770.0 805.6 769.0 805.5 768.0 805.5 767.0 806.0 766.0 806.6 765.0 805.3 764.0 805.1 763.0 805.0 762.0 805.0 761.0 805.7 760.0 807.3 759.0 805.0 758.0 804.8 757.0 805.5 756.0 804.9 755.0 805.5 754.0 805.1 753.0 804.6 752.0 803.8 751.0 803.6 750.0 802.7 749.0 801.8 748.0 800.3 747.0 800.8 746.0 801.9 745.0 802.0 744.0 802.2 743.0 802.4 742.0 803.7 741.0 801.4 740.0 802.6 739.0 804.7 738.0 802.4 737.0 802.4 736.0 802.1 735.0 804.4 734.0 802.3 733.0 802.4 732.0 802.7 731.0 801.6 730.0 802.5 729.0 801.9 728.0 801.5 727.0 802.1 726.0 802.6 725.0 802.8 724.0 802.3 723.0 801.8 722.0 802.3 721.0 802.6 720.0 801.5 719.0 803.8 718.0 802.2 717.0 803.8 716.0 805.5 715.0 802.6 714.0 803.0 713.0 802.0 712.0 803.0 711.0 802.8 710.0 805.9 709.0 802.6 708.0 802.5 707.0 802.8 706.0 802.3 705.0 802.7 704.0 804.8 703.0 802.9 702.0 802.5 701.0 801.7 700.0 802.5 699.0 802.7 698.0 804.6 697.0 802.5 696.0 803.1 695.0 801.4 694.0 803.1 693.0 804.7 692.0 802.7 691.0 802.1 690.0 801.8 689.0 802.4 688.0 802.6 687.0 802.7 686.0 802.6 685.0 802.5 684.0 801.2 683.0 802.3 682.0 802.8 681.0 802.7 680.0 802.9 679.0 802.6 678.0 803.7 677.0 803.3 676.0 802.6 675.0 802.5 674.0 802.3 673.0 801.5 672.0 802.3 671.0 802.8 670.0 803.4 669.0 802.6 668.0 802.8 667.0 802.4 666.0 802.2 665.0 801.9 664.0 803.3 663.0 803.3 662.0 800.3 661.0 799.9 660.0 801.7 659.0 801.3 658.0 802.3 657.0 803.4 656.0 803.4 655.0 803.1 654.0 804.2 653.0 802.5 652.0 802.6 651.0 803.0 650.0 802.5 649.0 802.7 648.0 801.9 647.0 802.6 646.0 802.5 645.0 802.3 644.0 802.6 643.0 803.7 642.0 802.7 641.0 801.8 640.0 803.1 639.0 801.8 638.0 801.4 637.0 802.1 636.0 802.5 635.0 802.1 634.0 802.3 633.0 804.5 632.0 804.6 631.0 802.0 630.0 801.2 629.0 802.6 628.0 802.3 627.0 803.2 626.0 804.6 625.0 803.9 624.0 804.6 623.0 802.7 622.0 803.5 621.0 802.8 620.0 803.5 619.0 802.4 618.0 806.9 617.0 801.4 616.0 803.2 615.0 800.3 614.0 801.5 613.0 804.8 612.0 804.3 611.0 807.1 610.0 804.2 609.0 805.1 608.0 805.2 607.0 804.5 606.0 805.0 605.0 804.8 604.0 804.8 603.0 804.7 602.0 804.7 601.0 804.8 600.0 804.5 599.0 804.8 598.0 805.1 597.0 804.5 596.0 804.7 595.0 806.0 594.0 804.7 593.0 805.0 592.0 805.0 591.0 805.2 590.0 808.2 589.0 805.0 588.0 805.0 587.0 804.6 586.0 804.7 585.0 804.4 584.0 804.5 583.0 808.2 582.0 804.9 581.0 804.5 580.0 805.0 579.0 805.1 578.0 804.7 577.0 804.9 576.0 804.6 575.0 805.1 574.0 805.1 573.0 804.7 572.0 804.6 571.0 804.9 570.0 804.4 569.0 805.0 568.0 804.7 567.0 804.8 566.0 804.7 565.0 804.5 564.0 804.8 563.0 803.8 562.0 803.4 561.0 802.6 560.0 802.5 559.0 800.4 558.0 800.8 557.0 801.3 556.0 802.7 555.0 802.1 554.0 803.0 553.0 801.4 552.0 802.7 551.0 803.4 550.0 802.4 549.0 802.7 548.0 802.7 547.0 802.4 546.0 802.6 545.0 803.1 544.0 802.0 543.0 801.8 542.0 802.9 541.0 802.8 540.0 802.4 539.0 802.6 538.0 802.6 537.0 803.0 536.0 803.1 535.0 801.6 534.0 802.5 533.0 805.3 532.0 802.5 531.0 802.5 530.0 803.6 529.0 802.6 528.0 801.8 527.0 802.7 526.0 802.6 525.0 803.6 524.0 802.8 523.0 801.6 522.0 804.2 521.0 801.5 520.0 802.6 519.0 802.5 518.0 803.4 517.0 803.3 516.0 802.1 515.0 803.4 514.0 802.5 513.0 801.3 512.0 802.4 511.0 802.9 510.0 802.4 509.0 802.0 508.0 801.6 507.0 801.8 506.0 802.4 505.0 802.3 504.0 803.2 503.0 802.9 502.0 804.7 501.0 803.1 500.0 802.3 499.0 802.5 498.0 802.5 497.0 802.3 496.0 802.8 495.0 802.9 494.0 802.8 493.0 802.3 492.0 802.6 491.0 802.2 490.0 802.6 489.0 802.9 488.0 802.6 487.0 803.9 486.0 802.0 485.0 802.6 484.0 801.9 483.0 802.5 482.0 802.0 481.0 802.3 480.0 802.3 479.0 801.7 478.0 803.5 477.0 803.7 476.0 802.8 475.0 801.7 474.0 802.7 473.0 802.2 472.0 802.7 471.0 802.5 470.0 802.4 469.0 802.1 468.0 800.8 467.0 800.4 466.0 800.2 465.0 799.6 464.0 802.0 463.0 803.8 462.0 804.2 461.0 804.3 460.0 804.8 459.0 804.9 458.0 805.1 457.0 805.0 456.0 805.1 455.0 805.3 454.0 805.0 453.0 805.0 452.0 805.3 451.0 805.1 450.0 805.3 449.0 805.3 448.0 805.2 447.0 804.9 446.0 805.3 445.0 805.9 444.0 807.5 443.0 805.2 442.0 805.2 441.0 805.0 440.0 808.0 439.0 805.1 438.0 805.5 437.0 805.8 436.0 805.2 435.0 805.0 434.0 804.9 433.0 805.1 432.0 805.1 431.0 805.2 430.0 805.5 429.0 808.0 428.0 805.4 427.0 805.9 426.0 805.1 425.0 805.5 424.0 805.2 423.0 805.5 422.0 804.9 421.0 805.1 420.0 805.1 419.0 804.8 418.0 805.2 417.0 805.0 416.0 808.4 415.0 804.8 414.0 805.6 413.0 805.3 412.0 805.1 411.0 808.3 410.0 805.6 409.0 805.3 408.0 805.4 407.0 805.2 406.0 805.1 405.0 804.9 404.0 805.1 403.0 805.5 402.0 805.3 401.0 805.2 400.0 805.1 399.0 805.6 398.0 805.3 397.0 805.2 396.0 805.0 395.0 805.1 394.0 805.6 393.0 805.4 392.0 804.9 391.0 805.1 390.0 806.5 389.0 805.4 388.0 808.6 387.0 805.4 386.0 805.4 385.0 805.1 384.0 805.1 383.0 804.8 382.0 805.7 381.0 805.1 380.0 805.3 379.0 805.3 378.0 807.1 377.0 804.9 376.0 805.0 375.0 805.2 374.0 805.1 373.0 807.0 372.0 804.6 371.0 803.9 370.0 804.0 369.0 801.4 368.0 801.6 367.0 800.4 366.0 801.2 365.0 801.4 364.0 803.1 363.0 803.2 362.0 801.4 361.0 802.7 360.0 802.7 359.0 802.6 358.0 803.5 357.0 802.3 356.0 802.1 355.0 802.9 354.0 803.4 353.0 802.6 352.0 801.9 351.0 804.2 350.0 801.9 349.0 803.4 348.0 802.5 347.0 802.5 346.0 802.5 345.0 802.6 344.0 802.7 343.0 802.7 342.0 802.5 341.0 802.3 340.0 803.0 339.0 802.1 338.0 802.4 337.0 802.8 336.0 804.2 335.0 802.3 334.0 802.8 333.0 802.8 332.0 802.9 331.0 802.4 330.0 802.8 329.0 803.4 328.0 805.3 327.0 803.1 326.0 802.5 325.0 802.7 324.0 803.5 323.0 802.7 322.0 803.7 321.0 803.6 320.0 802.5 319.0 802.4 318.0 802.7 317.0 802.9 316.0 805.0 315.0 802.3 314.0 801.8 313.0 804.6 312.0 802.6 311.0 802.7 310.0 803.8 309.0 802.8 308.0 802.4 307.0 802.6 306.0 804.6 305.0 802.3 304.0 801.8 303.0 802.6 302.0 801.8 301.0 800.7 300.0 802.1 299.0 802.2 298.0 804.2 297.0 804.1 296.0 804.7 295.0 805.0 294.0 805.3 293.0 805.3 292.0 804.9 291.0 805.6 290.0 804.9 289.0 805.4 288.0 805.1 287.0 807.9 286.0 805.5 285.0 806.4 284.0 804.9 283.0 805.2 282.0 805.1 281.0 805.1 280.0 805.4 279.0 805.5 278.0 805.2 277.0 804.9 276.0 805.3 275.0 807.8 274.0 805.2 273.0 805.2 272.0 805.5 271.0 804.9 270.0 805.4 269.0 805.3 268.0 805.4 267.0 805.1 266.0 805.0 265.0 806.0 264.0 808.1 263.0 805.4 262.0 805.4 261.0 805.1 260.0 808.7 259.0 805.5 258.0 807.5 257.0 805.1 256.0 805.0 255.0 805.5 254.0 805.3 253.0 804.9 252.0 804.3 251.0 803.8 250.0 803.2 249.0 802.6 248.0 801.9Z" fill="#62c8de"/><rect x="247" y="781" width="1518.3" height="1.2" fill="#14262c"/><rect x="247" y="751.3" width="1518.3" height="1.6" fill="#3b7fd8"/><rect x="247" y="812" width="1518.3" height="1.6" fill="#3b7fd8"/><rect x="246.6" y="751.3" width="1.4" height="62" fill="#3b7fd8"/><rect x="1764.4" y="751.3" width="1.4" height="62" fill="#3b7fd8"/><rect x="248" y="753" width="295.5" height="23.3" fill="rgba(8,22,26,0.74)" stroke="rgba(90,130,140,.35)" stroke-width="0.8"/><rect x="1729.5" y="796" width="17.5" height="16" fill="#1f444d"/><rect x="1748" y="796" width="16.5" height="16" fill="#1f444d"/><rect x="1751.5" y="803.5" width="1.6" height="1.6" fill="#f0f0f0"/><rect x="1755.5" y="803.5" width="1.6" height="1.6" fill="#f0f0f0"/><rect x="1759.5" y="803.5" width="1.6" height="1.6" fill="#f0f0f0"/><rect x="1121.6" y="668" width="1.2" height="215" fill="#e8e8e8"/></svg>
<span class="t" style="left:252.7px;top:688.9px;font-size:14.2px;line-height:20px;color:#f2f2f2;transform:scaleX(0.8737);">САМЫЕ РАЙСКИЕ МЕСТА НА ЗЕМЛЕ ВИДЕО 4K</span>
<span class="t" style="left:252.7px;top:753.9px;font-size:14.2px;line-height:20px;color:#f2f2f2;transform:scaleX(0.8737);">САМЫЕ РАЙСКИЕ МЕСТА НА ЗЕМЛЕ ВИДЕО 4K</span>
<span class="t" style="left:1730.8px;top:727.5px;font-size:16px;line-height:22px;color:#f4f4f4;font-weight:700;transform:scaleX(0.8787);">fx</span>
<span class="t" style="left:1731.8px;top:793.0px;font-size:16px;line-height:22px;color:#f4f4f4;font-weight:700;transform:scaleX(0.8787);">fx</span>
<div class="r" style="left:1789.5px;top:636.5px;width:18.5px;height:247px;background:#1e1e1e;"></div>
<div class="r" style="left:1790px;top:638.8px;width:17.6px;height:16px;background:#383838;"></div>
<svg class="r" style="left:1790px;top:638.8px;" width="18" height="16" viewBox="0 0 18 16"><path d="M5 3V13" stroke="#f4f4f4" stroke-width="1.4"/><path d="M5 3.6H12.5V9H5" fill="none" stroke="#f4f4f4" stroke-width="1.4"/></svg>
<svg class="r" style="left:1790px;top:658px;" width="18" height="12" viewBox="0 0 18 12"><path d="M4.5 8.5H13.5L9 4Z" fill="#f4f4f4"/><rect x="4.5" y="9.3" width="9" height="1" fill="#f4f4f4" opacity=".6"/></svg>
<div class="r" style="left:1790px;top:677.7px;width:17.6px;height:106px;background:#3a3a3a;"></div>
<div class="r" style="left:1794px;top:727.8px;width:9.5px;height:1px;background:#5c5c5c;"></div>
<div class="r" style="left:1794px;top:730.6px;width:9.5px;height:1px;background:#5c5c5c;"></div>
<svg class="r" style="left:1790px;top:820px;" width="18" height="12" viewBox="0 0 18 12"><path d="M4.5 4.5H13.5L9 9Z" fill="#f4f4f4"/></svg>
<div class="r" style="left:1790px;top:838.3px;width:17.6px;height:17px;background:#2c2c2c;"></div>
<div class="r" style="left:1790px;top:857.5px;width:17.6px;height:4px;background:#2c2c2c;"></div>
<div class="r" style="left:1790px;top:864.5px;width:17.6px;height:16.5px;background:#2c2c2c;"></div>
<svg class="r" style="left:1790px;top:838px;" width="18" height="44" viewBox="0 0 18 44"><path d="M4.5 9H13.5M9 4.5V13.5M4.5 34.8H13.5" stroke="#e8e8e8" stroke-width="1.2" fill="none"/></svg>
<div class="r" style="left:246px;top:883.8px;width:1562px;height:19.2px;background:#262626;"></div>
<div class="r" style="left:265.5px;top:884.5px;width:1450.5px;height:17.8px;background:#464646;"></div>
<div class="r" style="left:271.8px;top:887.5px;width:1px;height:11px;background:#2a2a2a;"></div>
<div class="r" style="left:1716px;top:887.5px;width:1px;height:11px;background:#555;"></div>
<svg class="r" style="left:246px;top:884px;" width="20" height="19" viewBox="0 0 20 19"><path d="M12.5 5L7.5 9.5L12.5 14Z" fill="#f4f4f4"/></svg>
<svg class="r" style="left:1724px;top:884px;" width="20" height="19" viewBox="0 0 20 19"><path d="M7.5 5L12.5 9.5L7.5 14Z" fill="#f4f4f4"/></svg>
<div class="r" style="left:1746px;top:885px;width:17px;height:17px;background:#333;"></div>
<div class="r" style="left:1765px;top:885px;width:4px;height:17px;background:#333;"></div>
<div class="r" style="left:1770.5px;top:885px;width:15.5px;height:17px;background:#333;"></div>
<div class="r" style="left:1788px;top:885px;width:18.5px;height:17px;background:#333;"></div>
<svg class="r" style="left:1746px;top:885px;" width="62" height="17" viewBox="0 0 62 17"><path d="M4 8.5H13M8.5 4V13M28 8.5H37" stroke="#e8e8e8" stroke-width="1.2" fill="none"/><circle cx="50" cy="7.5" r="4" fill="none" stroke="#f4f4f4" stroke-width="1.4"/><path d="M52.8 10.5L56 14" stroke="#f4f4f4" stroke-width="1.8"/></svg>
<div class="r" style="left:882px;top:82.5px;width:475px;height:789.5px;border-radius:8px;background:#dfdfdf;overflow:hidden;box-shadow:0 0 0 1px rgba(50,50,50,.6),0 12px 34px 8px rgba(0,0,0,.62)"><div class="r" style="left:0;top:0;width:475px;height:35px;background:#1c202c"></div></div>
<span class="t" style="left:890.6px;top:89.8px;font-size:15px;line-height:21px;color:#f4f4f4;transform:scaleX(0.8903);">Preferences</span>
<span class="t" style="left:1269.5px;top:90.0px;font-size:15px;line-height:21px;color:#f0f0f0;transform:scaleX(0.9591);">?</span>
<svg class="r" style="left:1320px;top:92px;" width="18" height="18" viewBox="0 0 18 18"><path d="M2.5 2.5L14.5 14.5M14.5 2.5L2.5 14.5" stroke="#f0f0f0" stroke-width="1.4" fill="none"/></svg>
<div class="r" style="left:889px;top:187px;width:459.5px;height:642.5px;background:#f9f9f9;box-shadow:0 0 0 1px #e2e2e2"></div>
<div class="r" style="left:891px;top:128.2px;width:455px;height:59.3px;background:#f3f3f3;"></div>
<div class="r" style="left:891px;top:128.3px;width:455px;height:1px;background:#e6e6e6;"></div>
<div class="r" style="left:1100.5px;top:128.5px;width:1px;height:19.5px;background:#e2e2e2;"></div>
<span class="t" style="left:925.5px;top:129.8px;font-size:13px;line-height:18px;color:#1a1a1a;transform:scaleX(0.9366);">External Control &amp; Automation</span>
<div class="r" style="left:1260.8px;top:128.5px;width:1px;height:19.5px;background:#e2e2e2;"></div>
<span class="t" style="left:1125.6px;top:129.8px;font-size:13px;line-height:18px;color:#1a1a1a;transform:scaleX(0.9229);">Deprecated Features</span>
<div class="r" style="left:1345.5px;top:128.5px;width:1px;height:19.5px;background:#e2e2e2;"></div>
<span class="t" style="left:1285.0px;top:129.8px;font-size:13px;line-height:18px;color:#1a1a1a;transform:scaleX(0.9453);">File I/O</span>
<div class="r" style="left:891px;top:148.0px;width:455px;height:1px;background:#e6e6e6;"></div>
<div class="r" style="left:945.7px;top:148.2px;width:1px;height:19.5px;background:#e2e2e2;"></div>
<span class="t" style="left:897.0px;top:149.5px;font-size:13px;line-height:18px;color:#1a1a1a;transform:scaleX(0.8974);">General</span>
<div class="r" style="left:995.1px;top:148.2px;width:1px;height:19.5px;background:#e2e2e2;"></div>
<span class="t" style="left:953.5px;top:149.5px;font-size:13px;line-height:18px;color:#1a1a1a;transform:scaleX(0.9239);">Video</span>
<div class="r" style="left:1091.3px;top:148.2px;width:1px;height:19.5px;background:#e2e2e2;"></div>
<span class="t" style="left:1002.6px;top:149.5px;font-size:13px;line-height:18px;color:#1a1a1a;transform:scaleX(0.9087);">Preview Device</span>
<div class="r" style="left:1139.5px;top:148.2px;width:1px;height:19.5px;background:#e2e2e2;"></div>
<span class="t" style="left:1099.0px;top:149.5px;font-size:13px;line-height:18px;color:#1a1a1a;transform:scaleX(0.9204);">Audio</span>
<div class="r" style="left:1223.0px;top:148.2px;width:1px;height:19.5px;background:#e2e2e2;"></div>
<span class="t" style="left:1147.0px;top:149.5px;font-size:13px;line-height:18px;color:#1a1a1a;transform:scaleX(0.9048);">Audio Device</span>
<div class="r" style="left:1270.8px;top:148.2px;width:1px;height:19.5px;background:#e2e2e2;"></div>
<span class="t" style="left:1230.3px;top:149.5px;font-size:13px;line-height:18px;color:#1a1a1a;transform:scaleX(0.9220);">MIDI</span>
<div class="r" style="left:1345.5px;top:148.2px;width:1px;height:19.5px;background:#e2e2e2;"></div>
<span class="t" style="left:1278.3px;top:149.5px;font-size:13px;line-height:18px;color:#1a1a1a;transform:scaleX(0.9272);">VST Effects</span>
<div class="r" style="left:891px;top:167.8px;width:455px;height:1px;background:#e6e6e6;"></div>
<div class="r" style="left:997.3px;top:168px;width:1px;height:19.5px;background:#e2e2e2;"></div>
<span class="t" style="left:926.2px;top:169.3px;font-size:13px;line-height:18px;color:#1a1a1a;transform:scaleX(0.9107);">Editing</span>
<div class="r" style="left:1241.7px;top:168px;width:1px;height:19.5px;background:#e2e2e2;"></div>
<span class="t" style="left:1144.4px;top:169.3px;font-size:13px;line-height:18px;color:#1a1a1a;transform:scaleX(0.9098);">CD Settings</span>
<div class="r" style="left:1345.5px;top:168px;width:1px;height:19.5px;background:#e2e2e2;"></div>
<span class="t" style="left:1278.6px;top:169.3px;font-size:13px;line-height:18px;color:#1a1a1a;transform:scaleX(0.8962);">Sync</span>
<div class="r" style="left:890.5px;top:128.2px;width:1px;height:59px;background:#e6e6e6;"></div>
<div class="r" style="left:997.8px;top:166px;width:112px;height:22px;background:#f9f9f9;box-shadow:0 0 0 1px #e2e2e2"></div>
<div class="r" style="left:998px;top:186px;width:111.6px;height:3px;background:#f9f9f9;"></div>
<span class="t" style="left:1035.0px;top:167.5px;font-size:13px;line-height:18px;color:#1a1a1a;transform:scaleX(0.8915);">Display</span>
<span class="t" style="left:901.0px;top:197.6px;font-size:13px;line-height:18px;color:#1a1a1a;transform:scaleX(0.9496);">Track Colors</span>
<div class="r" style="left:975.5px;top:203.79999999999998px;width:358.5px;height:1.6px;background:#b6bcbc;"></div>
<span class="t" style="left:917.0px;top:220.0px;font-size:13px;line-height:18px;color:#1a1a1a;transform:scaleX(0.9094);">Track:</span>
<span class="t" style="left:901.0px;top:244.6px;font-size:13px;line-height:18px;color:#1a1a1a;transform:scaleX(0.9677);">Envelope Colors</span>
<div class="r" style="left:996.5px;top:251.39999999999998px;width:336.5px;height:1.6px;background:#b6bcbc;"></div>
<span class="t" style="left:917.0px;top:271.0px;font-size:13px;line-height:18px;color:#1a1a1a;transform:scaleX(0.9488);">Envelope Type:</span>
<span class="t" style="left:901.0px;top:293.6px;font-size:13px;line-height:18px;color:#1a1a1a;transform:scaleX(0.9590);">Snap Colors</span>
<div class="r" style="left:972px;top:299.9px;width:359px;height:1.6px;background:#b6bcbc;"></div>
<span class="t" style="left:917.0px;top:320.0px;font-size:13px;line-height:18px;color:#1a1a1a;transform:scaleX(0.9385);">Snap Type:</span>
<div class="r" style="left:1039.6px;top:215.0px;width:228.3px;height:25.6px;background:#fefefe;border-radius:3px;box-shadow:inset 0 0 0 1px #d4d4d4, inset 0 -1px 0 0 #b8b8b8"></div>
<span class="t" style="left:1043.5px;top:219.3px;font-size:13.2px;line-height:18px;color:#1a1a1a;transform:scaleX(0.9934);">Color A</span>
<svg class="r" style="left:1250px;top:223.6px;" width="16" height="10" viewBox="0 0 16 10"><path d="M2.5 2.5L7.5 7.5L12.5 2.5" fill="none" stroke="#444" stroke-width="1.1"/></svg>
<div class="r" style="left:1274.5px;top:214.6px;width:62.7px;height:24.2px;background:#fefefe;border-radius:4px;box-shadow:inset 0 0 0 1px #d6d6d6, inset 0 -1px 0 0 #c0c0c0"></div>
<div class="r" style="left:1280.6px;top:219.4px;width:50.7px;height:14.3px;background:#3b8fdf;"></div>
<div class="r" style="left:1039.6px;top:266.09999999999997px;width:228.3px;height:25.6px;background:#fefefe;border-radius:3px;box-shadow:inset 0 0 0 1px #d4d4d4, inset 0 -1px 0 0 #b8b8b8"></div>
<span class="t" style="left:1043.5px;top:270.4px;font-size:13.2px;line-height:18px;color:#1a1a1a;transform:scaleX(0.9767);">Volume</span>
<svg class="r" style="left:1250px;top:274.7px;" width="16" height="10" viewBox="0 0 16 10"><path d="M2.5 2.5L7.5 7.5L12.5 2.5" fill="none" stroke="#444" stroke-width="1.1"/></svg>
<div class="r" style="left:1274.5px;top:265.5px;width:62.7px;height:24.2px;background:#fefefe;border-radius:4px;box-shadow:inset 0 0 0 1px #d6d6d6, inset 0 -1px 0 0 #c0c0c0"></div>
<div class="r" style="left:1280.6px;top:270.29999999999995px;width:50.7px;height:14.3px;background:#1e0cdc;"></div>
<div class="r" style="left:1039.6px;top:315.0px;width:228.3px;height:25.6px;background:#fefefe;border-radius:3px;box-shadow:inset 0 0 0 1px #d4d4d4, inset 0 -1px 0 0 #b8b8b8"></div>
<span class="t" style="left:1043.5px;top:319.3px;font-size:13.2px;line-height:18px;color:#1a1a1a;transform:scaleX(0.9721);">Cursor</span>
<svg class="r" style="left:1250px;top:323.6px;" width="16" height="10" viewBox="0 0 16 10"><path d="M2.5 2.5L7.5 7.5L12.5 2.5" fill="none" stroke="#444" stroke-width="1.1"/></svg>
<div class="r" style="left:1274.5px;top:314.40000000000003px;width:62.7px;height:24.2px;background:#fefefe;border-radius:4px;box-shadow:inset 0 0 0 1px #d6d6d6, inset 0 -1px 0 0 #c0c0c0"></div>
<div class="r" style="left:1280.6px;top:319.2px;width:50.7px;height:14.3px;background:#ffe75c;"></div>
<span class="t" style="left:901.0px;top:361.6px;font-size:13px;line-height:18px;color:#1a1a1a;transform:scaleX(1.0167);">Icon color strength:</span>
<div class="r" style="left:1044px;top:367px;width:217px;height:2px;background:#c2c7c7;border-radius:1px"></div>
<div class="r" style="left:1257.8px;top:361.2px;width:9.2px;height:14.5px;background:linear-gradient(#dcdcdc,#b4b4b4);box-shadow:inset 0 0 0 1px #a8a8a8;border-radius:1px"></div>
<span class="t" style="left:1278.5px;top:361.6px;font-size:13px;line-height:18px;color:#1a1a1a;transform:scaleX(0.9686);">100 %</span>
<span class="t" style="left:901.0px;top:390.0px;font-size:13px;line-height:18px;color:#1a1a1a;transform:scaleX(1.0438);">Button Highlight</span>
<div class="r" style="left:1040.7px;top:389.90000000000003px;width:63.8px;height:25.299999999999997px;background:#fefefe;border-radius:4px;box-shadow:inset 0 0 0 1px #d6d6d6, inset 0 -1px 0 0 #c0c0c0"></div>
<div class="r" style="left:1046.8px;top:394.7px;width:51.8px;height:15.399999999999999px;background:#1c0000;"></div>
<span class="t" style="left:901.0px;top:418.0px;font-size:13px;line-height:18px;color:#1a1a1a;transform:scaleX(0.9740);">Interface Type</span>
<div class="r" style="left:989.3px;top:424.8px;width:344.0px;height:1.6px;background:#b6bcbc;"></div>
<div class="r" style="left:917px;top:442.40000000000003px;width:14.4px;height:14.4px;background:#0a5fc2;border-radius:50%"></div>
<div class="r" style="left:921.2px;top:446.6px;width:6px;height:6px;background:#fff;border-radius:50%"></div>
<span class="t" style="left:936.1px;top:440.9px;font-size:13px;line-height:18px;color:#1a1a1a;transform:scaleX(0.9947);">Dark</span>
<div class="r" style="left:1048.9px;top:440.1px;width:66.2px;height:19px;background:#2a2a2a;"></div>
<div class="r" style="left:917px;top:467.0px;width:14.4px;height:14.4px;background:#f4f4f4;border-radius:50%;box-shadow:inset 0 0 0 1px #8a8a8a"></div>
<span class="t" style="left:936.1px;top:465.5px;font-size:13px;line-height:18px;color:#1a1a1a;transform:scaleX(1.0317);">Medium</span>
<div class="r" style="left:1048.9px;top:464.7px;width:66.2px;height:19px;background:#4f4f4f;"></div>
<div class="r" style="left:917px;top:491.7px;width:14.4px;height:14.4px;background:#f4f4f4;border-radius:50%;box-shadow:inset 0 0 0 1px #8a8a8a"></div>
<span class="t" style="left:936.1px;top:490.2px;font-size:13px;line-height:18px;color:#1a1a1a;transform:scaleX(1.0146);">Light</span>
<div class="r" style="left:1048.9px;top:489.3px;width:66.2px;height:19px;background:#a0a0a0;"></div>
<div class="r" style="left:917px;top:516.0px;width:14.4px;height:14.4px;background:#f4f4f4;border-radius:50%;box-shadow:inset 0 0 0 1px #8a8a8a"></div>
<span class="t" style="left:936.1px;top:514.5px;font-size:13px;line-height:18px;color:#1a1a1a;transform:scaleX(1.0202);">White</span>
<div class="r" style="left:1048.9px;top:514px;width:66.2px;height:19px;background:#c8c8c8;"></div>
<div class="r" style="left:901.2px;top:551.9000000000001px;width:14.5px;height:14.5px;background:#f6f6f6;border-radius:2.5px;box-shadow:inset 0 0 0 1px #909090"></div>
<span class="t" style="left:919.8px;top:550.6px;font-size:13px;line-height:18px;color:#1a1a1a;">Automatically hide docking area</span>
<div class="r" style="left:901.2px;top:572.8000000000001px;width:14.5px;height:14.5px;background:#f6f6f6;border-radius:2.5px;box-shadow:inset 0 0 0 1px #909090"></div>
<span class="t" style="left:919.8px;top:571.5px;font-size:13px;line-height:18px;color:#1a1a1a;transform:scaleX(1.0102);">Position tabs at top of docked windows</span>
<div class="r" style="left:901.2px;top:593.5px;width:14.5px;height:14.5px;background:#f6f6f6;border-radius:2.5px;box-shadow:inset 0 0 0 1px #909090"></div>
<span class="t" style="left:919.8px;top:592.2px;font-size:13px;line-height:18px;color:#1a1a1a;transform:scaleX(1.0210);">Allow floating windows to dock (hold Ctrl to override)</span>
<div class="r" style="left:901.2px;top:614.7px;width:14.5px;height:14.5px;background:#0a5fc2;border-radius:3px"></div>
<svg class="r" style="left:901.2px;top:614.7px;" width="14.5" height="14.5" viewBox="0 0 14.5 14.5"><path d="M3.6 7.4L6.3 10.2L11 4.6" fill="none" stroke="#fff" stroke-width="1.3"/></svg>
<span class="t" style="left:919.8px;top:613.4px;font-size:13px;line-height:18px;color:#1a1a1a;transform:scaleX(0.9715);">Use High DPI scaling (where available)</span>
<div class="r" style="left:901.2px;top:635.8000000000001px;width:14.5px;height:14.5px;background:#f6f6f6;border-radius:2.5px;box-shadow:inset 0 0 0 1px #909090"></div>
<span class="t" style="left:919.8px;top:634.5px;font-size:13px;line-height:18px;color:#1a1a1a;">Use Alternate High DPI Settings</span>
<div class="r" style="left:901.2px;top:656.4000000000001px;width:14.5px;height:14.5px;background:#f6f6f6;border-radius:2.5px;box-shadow:inset 0 0 0 1px #909090"></div>
<span class="t" style="left:919.8px;top:655.1px;font-size:13px;line-height:18px;color:#1a1a1a;">Show system statistics in the status bar</span>
<div class="r" style="left:901px;top:783.8px;width:436px;height:1.3px;background:#8c8c8c;"></div>
<div class="r" style="left:1257.4px;top:794.3px;width:80.39999999999986px;height:24.40000000000009px;background:#fdfdfd;border-radius:4px;box-shadow:inset 0 0 0 1px #d2d2d2, inset 0 -1px 0 0 #bcbcbc"></div>
<span class="t" style="left:1267.5px;top:797.8px;font-size:13px;line-height:18px;color:#1a1a1a;transform:scaleX(1.0131);">Default All</span>
<div class="r" style="left:1090.5px;top:839.6px;width:81.20000000000005px;height:24.399999999999977px;background:#fdfdfd;border-radius:4px;box-shadow:inset 0 0 0 1.3px #1b70d0"></div>
<span class="t" style="left:1123.0px;top:843.1px;font-size:13px;line-height:18px;color:#1a1a1a;transform:scaleX(0.8518);">OK</span>
<div class="r" style="left:1181px;top:839.6px;width:80px;height:24.399999999999977px;background:#fdfdfd;border-radius:4px;box-shadow:inset 0 0 0 1px #d2d2d2, inset 0 -1px 0 0 #bcbcbc"></div>
<span class="t" style="left:1203.3px;top:843.1px;font-size:13px;line-height:18px;color:#1a1a1a;transform:scaleX(0.8823);">Cancel</span>
<div class="r" style="left:1269.7px;top:839.6px;width:80.2px;height:24.4px;background:#f3f3f3;border-radius:4px;box-shadow:inset 0 0 0 1px #e4e4e4"></div>
<span class="t" style="left:1294.4px;top:843.0px;font-size:13px;line-height:18px;color:#a2a2a2;transform:scaleX(0.9103);">Apply</span>
<div class="r" style="left:246px;top:904.3px;width:1562px;height:29.4px;background:#222222;"></div>
<svg class="r" style="left:0px;top:0px;" width="1813" height="940" viewBox="0 0 1813 940"><circle cx="258.7" cy="919" r="5.8" fill="#f05a30"/><g fill="none" stroke="#f4f4f4" stroke-width="1.2"><path d="M279 915.8H286Q289.5 915.8 289.5 919Q289.5 922.2 286 922.2H285M287 922.2H280Q276.5 922.2 276.5 919Q276.5 915.8 280 915.8H281"/><path d="M283.5 913.2L286.2 915.8L283.5 918.4M282.5 919.6L279.8 922.2L282.5 924.8"/></g><rect x="302.6" y="913.3" width="1.3" height="11.4" fill="#f4f4f4"/><path d="M305.5 913.3L313 919L305.5 924.7Z" fill="#f4f4f4"/><path d="M326.8 912.6L338.3 919L326.8 925.4Z" fill="#f4f4f4"/><rect x="350.7" y="912.8" width="4.2" height="12.4" fill="#f4f4f4"/><rect x="358.8" y="912.8" width="4.2" height="12.4" fill="#f4f4f4"/><rect x="375.2" y="912.8" width="12.4" height="12.4" fill="#f4f4f4"/><rect x="400.8" y="914" width="1.5" height="10" fill="#f4f4f4"/><path d="M410.4 914L402.6 919L410.4 924Z" fill="#f4f4f4"/><rect x="434.4" y="914" width="1.5" height="10" fill="#f4f4f4"/><path d="M426.3 914L434.1 919L426.3 924Z" fill="#f4f4f4"/><path d="M457.5 914L449.7 919L457.5 924Z" fill="#f4f4f4"/><rect x="458.3" y="914" width="1.2" height="10" fill="#f4f4f4"/><rect x="460.3" y="914" width="1.2" height="10" fill="#f4f4f4"/><path d="M477 914L484.8 919L477 924Z" fill="#f4f4f4"/><rect x="475" y="914" width="1.2" height="10" fill="#f4f4f4"/><rect x="473" y="914" width="1.2" height="10" fill="#f4f4f4"/><rect x="495.7" y="910.5" width="1" height="17" fill="#444"/><rect x="500.8" y="910.2" width="21.3" height="17.2" fill="#3b8fe0"/><path d="M505 912.5L519 917.5L512.8 919.6L511 926Z" fill="none" stroke="#f4f4f4" stroke-width="1.4" stroke-linejoin="round"/><path d="M529.3 916.8H538.7L534 921.6Z" fill="#f4f4f4"/><g fill="none" stroke="#f4f4f4" stroke-width="1.1"><rect x="548.2" y="922" width="3" height="3"/><rect x="551.2" y="913.6" width="3" height="3"/><rect x="557.6" y="912.6" width="3" height="3"/><path d="M549.7 922V918.5L551.2 916.6M554.2 915H557.6"/></g><rect x="572.6" y="913" width="13" height="12.6" fill="none" stroke="#f4f4f4" stroke-width="1.2" stroke-dasharray="2 1.6"/><circle cx="602.3" cy="918.3" r="5.6" fill="none" stroke="#f4f4f4" stroke-width="1.2"/><path d="M606.2 922.6L609 925.6" stroke="#f4f4f4" stroke-width="1.4"/><rect x="619.2" y="910.5" width="1" height="17" fill="#444"/><path d="M630.2 913.5L641 924.5M641 913.5L630.2 924.5" stroke="#e0522c" stroke-width="1.5" fill="none"/><g fill="#4a4a4a"><rect x="659.3" y="912.5" width="1.3" height="13"/><rect x="655.5" y="914.5" width="3" height="9"/><rect x="661.3" y="914.5" width="3" height="9"/></g><rect x="683.9" y="912" width="1.3" height="14" fill="#f4f4f4"/><rect x="678.0" y="914.8" width="5.5" height="8.4" fill="#d8502c"/><rect x="685.6" y="914.8" width="5.5" height="8.4" fill="#f4f4f4"/><rect x="708.8" y="912" width="1.3" height="14" fill="#f4f4f4"/><rect x="702.9" y="914.8" width="5.5" height="8.4" fill="#f4f4f4"/><rect x="710.5" y="914.8" width="5.5" height="8.4" fill="#d8502c"/><rect x="732.9" y="912" width="1.3" height="14" fill="#f4f4f4"/><rect x="727" y="914.8" width="5" height="8.4" fill="#f4f4f4"/><rect x="735" y="914.8" width="2.2" height="8.4" fill="#d8502c"/><rect x="737.2" y="914.8" width="3" height="8.4" fill="#f4f4f4"/><g fill="#4a4a4a"><rect x="757.2" y="912.5" width="1.3" height="13"/><rect x="751.5" y="914.5" width="5" height="9"/><rect x="759.3" y="914.5" width="5" height="9"/></g><rect x="778" y="918" width="10" height="7.8" rx="1" fill="#f4f4f4"/><path d="M780 918V915.6Q780 912.6 783 912.6Q786 912.6 786 915.6V918" fill="none" stroke="#f4f4f4" stroke-width="1.5"/><rect x="798.9" y="910.5" width="1" height="17" fill="#444"/><path d="M809.5 913H820V920.6H813.5L810.5 924.4V920.6H809.5Z" fill="#f59a23"/><path d="M833 914.5H838.5V921H834.5V923H833ZM845.2 914.5H839.7V921H843.7V923H845.2Z" fill="#18c24a"/><rect x="855.3" y="910.5" width="1" height="17" fill="#444"/><rect x="860.5" y="910" width="21.8" height="17.4" fill="#3b8fe0"/><path d="M865.4 924V917.8Q865.4 912.6 871.4 912.6Q877.4 912.6 877.4 917.8V924H873.8V918Q873.8 916 871.4 916Q869 916 869 918V924Z" fill="#e8452c"/><rect x="865.4" y="922" width="3.6" height="2.6" fill="#f4f4f4"/><rect x="873.8" y="922" width="3.6" height="2.6" fill="#f4f4f4"/><rect x="885.7" y="910" width="21.2" height="17.4" fill="#3b8fe0"/><path d="M889.5 912.6V925.2H903V912.6L896.3 921Z" fill="#1a2438" stroke="#f4f4f4" stroke-width="1.1" stroke-linejoin="round"/><rect x="915.3" y="912.3" width="1.3" height="13.4" fill="#f4f4f4"/><rect x="917.5" y="914" width="10" height="7.5" fill="#3b8fe0"/><path d="M926 921.5H918.5M921 919L918.5 921.5L921 924" fill="none" stroke="#f4f4f4" stroke-width="1.2"/><rect x="911.5" y="916" width="3" height="5" fill="#f4f4f4"/><path d="M937.9 916.8H947.3L942.6 921.6Z" fill="#f4f4f4"/><rect x="957" y="915" width="11" height="7" fill="#3b8fe0"/><g fill="none" stroke="#f4f4f4" stroke-width="1"><rect x="956.5" y="916.5" width="2.4" height="2.4"/><rect x="961.8" y="912.4" width="2.4" height="2.4"/><path d="M958.9 916.5L961.8 914.4"/></g><rect x="963.8" y="919.5" width="6.4" height="5.6" fill="#f4f4f4"/><path d="M965.2 919.5V917.8Q965.2 916 967 916Q968.8 916 968.8 917.8V919.5" fill="none" stroke="#f4f4f4" stroke-width="1.1"/><rect x="981" y="912.6" width="5.4" height="5" fill="#f4f4f4"/><rect x="988" y="912.6" width="5.4" height="5" fill="#f4f4f4"/><path d="M985.5 918.6L993 921.6L989.6 922.6L988.6 926Z" fill="#f4f4f4"/><rect x="981" y="919.2" width="3.4" height="1.4" fill="#f4f4f4"/><rect x="1004.1" y="910.5" width="1" height="17" fill="#444"/><circle cx="1020" cy="917" r="2.7" fill="#e8452c"/><circle cx="1016.7" cy="922.5" r="2.7" fill="#3b7fe0"/><circle cx="1023.3" cy="922.5" r="2.7" fill="#22b04a"/><rect x="1024.3" y="911.6" width="4" height="4.4" fill="#f4f4f4"/><rect x="1035.9" y="910.5" width="1" height="17" fill="#444"/><g fill="#4a4a4a"><rect x="1046" y="913" width="8" height="8"/><rect x="1052" y="922" width="6" height="3"/><rect x="1070" y="913" width="7" height="3"/><rect x="1073" y="917" width="8" height="8"/></g><rect x="1094.5" y="912" width="8" height="3.6" fill="#3b8fe0"/><rect x="1096.2" y="916.6" width="10.6" height="9.4" fill="#f4f4f4"/><path d="M1098.8 921.3H1104.2M1101.5 918.6V924" stroke="#222" stroke-width="1.2"/><path d="M1495.6 913.2H1501.2V919.8L1498.4 922.6L1495.6 919.8Z" fill="#f4f4f4"/><rect x="1497.8" y="922" width="1.2" height="4.5" fill="#f4f4f4"/><rect x="1601.5" y="914" width="10.5" height="9.5" fill="none" stroke="#f4f4f4" stroke-width="1.2"/><path d="M1607.5 913.4H1612.6V918.5Z" fill="#f2c73a"/><rect x="1708.6" y="914" width="10.5" height="9.5" fill="none" stroke="#f4f4f4" stroke-width="1.2"/><path d="M1708 913.4H1712.5L1708 918Z" fill="#f2c73a"/><path d="M1719.7 913.4H1715.2L1719.7 918Z" fill="#f2c73a"/></svg>
<span class="t" style="left:1518.0px;top:909.7px;font-size:13.5px;line-height:19px;color:#e8e8e8;transform:scaleX(0.9620);">00:13:07;16</span>
<div class="r" style="left:0px;top:938.8px;width:1813px;height:24.4px;background:#272727;"></div>
<span class="t" style="left:1572.6px;top:943.3px;font-size:13px;line-height:18px;color:#e6e6e6;transform:scaleX(0.9674);">Record Time (2 channels): 2:05:17:15</span>
<div class="r" style="left:0px;top:963px;width:1813px;height:57px;background:linear-gradient(90deg,#222729 0%,#23272b 14%,#241f33 28%,#2a1e3e 42%,#261d3a 55%,#1c1b30 68%,#181c2e 78%,#241f38 90%,#3a2540 100%);"></div>
<div class="r" style="left:0px;top:963px;width:1813px;height:1px;background:rgba(255,255,255,0.07);"></div>
<svg class="r" style="left:0px;top:0px;" width="1813" height="1020" viewBox="0 0 1813 1020"><defs><radialGradient id="sun" cx="0.4" cy="0.35" r="0.7"><stop offset="0" stop-color="#ffc83a"/><stop offset="1" stop-color="#f2801c"/></radialGradient><linearGradient id="win" x1="0" y1="0" x2="1" y2="1"><stop offset="0" stop-color="#6fd2ff"/><stop offset="1" stop-color="#1a96e8"/></linearGradient><linearGradient id="edg" x1="0" y1="0" x2="1" y2="1"><stop offset="0" stop-color="#35c1f1"/><stop offset="0.5" stop-color="#1b9de2"/><stop offset="1" stop-color="#0c59a4"/></linearGradient><linearGradient id="fld" x1="0" y1="0" x2="0" y2="1"><stop offset="0" stop-color="#ffd75e"/><stop offset="1" stop-color="#f7b928"/></linearGradient><radialGradient id="ff" cx="0.5" cy="0.4" r="0.7"><stop offset="0" stop-color="#ffbd2e"/><stop offset="0.6" stop-color="#ff6a2a"/><stop offset="1" stop-color="#e0304a"/></radialGradient></defs><circle cx="37.2" cy="990.2" r="11.4" fill="url(#sun)"/><path d="M36 998Q34 993.5 39 993Q40.5 988.6 45 990.5Q48.5 989.5 49 993.5Q52.5 994 51.5 998Z" fill="#dfe9f6"/><path d="M36 998H51.5Q52 996 50 995H37Z" fill="#a9c4ea"/><rect x="492" y="978.3" width="13" height="13" fill="url(#win)"/><rect x="506.3" y="978.3" width="13" height="13" fill="url(#win)"/><rect x="492" y="992.6" width="13" height="13" fill="url(#win)"/><rect x="506.3" y="992.6" width="13" height="13" fill="url(#win)"/><rect x="536.3" y="972.7" width="118" height="37.6" rx="18.8" fill="#332f47" stroke="#3a3650" stroke-width="0.8"/><circle cx="572.6" cy="989.6" r="5.2" fill="none" stroke="#f4f4f4" stroke-width="1.7"/><path d="M576.4 993.5L580.8 998" stroke="#f4f4f4" stroke-width="1.9" stroke-linecap="round"/><circle cx="684.6" cy="991.5" r="14" fill="url(#edg)"/><path d="M671.5 988Q676 977.5 687 977.6Q698 978.5 698.6 989Q698 995 691 995.6Q686 995 687.8 990Q684 985.5 678 988.5Q673.5 991.5 674.5 999Q671 994 671.5 988Z" fill="#4bd16a" opacity=".85"/><path d="M678 988.5Q673.5 992 675 998.5Q679 1005.6 687.5 1005.3Q693 1004.6 696 1000.6Q689.5 1002.6 685.4 998.4Q682.6 994.6 684.4 990.6Q681.4 987.6 678 988.5Z" fill="#0d57a6"/><path d="M722 980.5Q722 979 723.5 979H731L733.5 982H748.5Q750 982 750 983.5V1003H722Z" fill="#f3b423"/><rect x="722" y="984" width="28" height="20" rx="1.5" fill="url(#fld)"/><rect x="727.5" y="997" width="17" height="7" rx="1.2" fill="#2a82d8"/><rect x="731" y="999.2" width="10" height="1.8" fill="#1560b0"/><rect x="774" y="981" width="28.4" height="21" rx="1.5" fill="#1b78c8"/><path d="M775 1001V992L779 985L783 993L787 987L791.5 994L796 984L801.5 992V1001Z" fill="#c6e6fa"/><path d="M775 1001V995L779 989L783 996L787 991L791.5 997L796 989L801.5 996V1001Z" fill="#6fc0f0"/><rect x="826" y="981" width="28.4" height="21" rx="1.5" fill="#3aa0e0"/><rect x="828" y="983" width="24.4" height="17" fill="#7fd0f6"/><circle cx="835.5" cy="990" r="4.6" fill="#2a7ed0"/><path d="M835.5 990V985.4A4.6 4.6 0 0 1 840.1 990Z" fill="#f59a23"/><circle cx="846.5" cy="986.5" r="1.6" fill="#fff"/><circle cx="846.5" cy="991" r="1.6" fill="#fff"/><circle cx="846.5" cy="995.5" r="1.6" fill="#fff"/><rect x="830" y="996.5" width="10" height="1.6" fill="#f59a23"/><rect x="878" y="977.5" width="28" height="28" rx="6" fill="#0e8ec8"/><rect x="882" y="984" width="14" height="11" rx="1" fill="#f0a83a"/><rect x="885" y="987" width="15" height="11" rx="1" fill="#e8e0f0"/><rect x="888" y="990" width="15" height="11" rx="1" fill="#7a2a78"/><rect x="894" y="994" width="13" height="12" rx="3" fill="#10141c"/><path d="M900.5 1003.5V998.5M898 1000.6L900.5 998L903 1000.6" stroke="#2aa8f0" stroke-width="1.8" fill="none"/><circle cx="943.7" cy="991.5" r="13.6" fill="#23252c"/><circle cx="943.7" cy="992" r="9" fill="none" stroke="#6ad0c0" stroke-width="1.6"/><path d="M937.5 1001.5L943.5 980L950.5 1001.5M936 994.5L952.5 991" fill="none" stroke="#b48ad8" stroke-width="1.8"/><path d="M936 1000Q943 1004 951 1000" stroke="#e8903a" stroke-width="1.6" fill="none"/><circle cx="996" cy="991.5" r="14" fill="#5fae3a"/><circle cx="996" cy="990" r="12.4" fill="#76bf4a" opacity=".6"/><circle cx="1047.7" cy="991.5" r="14" fill="#ffffff"/><path d="M1040.5 983L1047.7 991.5L1055 983M1047.7 991.5V1003" stroke="#f2311d" stroke-width="3.4" fill="none" stroke-linecap="round"/><circle cx="1100" cy="992.5" r="13" fill="url(#ff)"/><circle cx="1101.5" cy="992" r="6.2" fill="#6a3ad8"/><path d="M1088 987Q1091 982 1094 982Q1096 978 1100 978.5Q1098 981 1100.5 984Q1107 983 1110 988Q1113 984 1111 979Q1116 986 1113.5 996Q1110 990 1104 989.5Q1098 989 1096 993Q1094.5 997 1098.5 999.5Q1093 1000 1091 995Q1088.5 992 1088 987Z" fill="#ff9a26"/><rect x="1138.3" y="977.6" width="27.4" height="27.6" fill="#0c0c0c"/><path d="M1143 992Q1147.5 985 1155 986V984Q1162.5 984 1163 991.5Q1162 998.5 1154.5 999.5Q1147 999 1143 992ZM1147 992Q1150 996.6 1155 996Q1158.5 995 1159 991.6Q1158.5 988.6 1155 988.4Q1150 988.4 1147 992ZM1150.5 992Q1152.5 990 1155 990.4V994.4Q1152.5 994.4 1150.5 992Z" fill="#76b900" fill-rule="evenodd"/><g transform="rotate(-8 1203.5 992)"><rect x="1192.5" y="986" width="22" height="18" rx="1.5" fill="#2a2a30"/><rect x="1193" y="981" width="21" height="4" fill="#d83a3a"/><rect x="1193.5" y="977.6" width="20" height="3.6" fill="#4aa0e0"/><rect x="1193" y="985" width="21" height="3" fill="#e8c03a"/><rect x="1193" y="988" width="21" height="2.6" fill="#48b04a"/><rect x="1200" y="992" width="7" height="3" fill="#c8c8c8"/></g><path d="M1190 1005L1199 984" stroke="#d8d8d8" stroke-width="2"/><circle cx="1255.4" cy="991.5" r="14" fill="#5a9af0"/><circle cx="1255.4" cy="991.5" r="12.6" fill="#4a86e0"/><rect x="1284.5" y="968.5" width="46.3" height="46" rx="4" fill="rgba(255,255,255,0.075)" stroke="rgba(255,255,255,0.06)"/><g transform="translate(1286.6 971) scale(1.16)"><rect x="7.7" y="7.5" width="20.6" height="20.8" fill="#03145a" stroke="#2c94ee" stroke-width="2"/><rect x="6.6" y="14.6" width="2.2" height="1.8" fill="#03145a"/><path d="M7 12.3H12.2Q13.7 12.3 14.3 13.8L17.8 23.4L23.3 11.9" fill="none" stroke="#2c94ee" stroke-width="2.2" stroke-linejoin="round"/></g><rect x="681.3000000000001" y="1010.8" width="6.6" height="2.6" rx="1.3" fill="#8e8e94"/><rect x="732.7" y="1010.8" width="6.6" height="2.6" rx="1.3" fill="#8e8e94"/><rect x="992.7" y="1010.8" width="6.6" height="2.6" rx="1.3" fill="#8e8e94"/><rect x="1044.4" y="1010.8" width="6.6" height="2.6" rx="1.3" fill="#8e8e94"/><rect x="1200.2" y="1010.8" width="6.6" height="2.6" rx="1.3" fill="#8e8e94"/><rect x="1252.1000000000001" y="1010.8" width="6.6" height="2.6" rx="1.3" fill="#8e8e94"/><rect x="1299" y="1010.8" width="16.6" height="2.8" rx="1.4" fill="#5a7a84"/><circle cx="1429.5" cy="991.5" r="9" fill="#4a86e0"/><rect x="1459" y="983.4" width="16.6" height="16.6" fill="#108a3e"/><circle cx="1504.8" cy="991.5" r="9" fill="#6ab840"/><path d="M1534.5 985Q1540 985.5 1542.5 983Q1545 985.5 1550 985Q1550.5 996 1542.5 1000Q1534 996 1534.5 985Z" fill="#2a8ae8"/><path d="M1542.5 983Q1545 985.5 1550 985Q1550.5 996 1542.5 1000Z" fill="#5ab0f6"/><circle cx="1546.8" cy="997.2" r="4.3" fill="#e0242c"/><path d="M1545 995.4L1548.6 999M1548.6 995.4L1545 999" stroke="#fff" stroke-width="1.1"/><g fill="none" stroke="#f4f4f4" stroke-width="1.5" stroke-linecap="round"><path d="M1623.6 988.2Q1632.2 980.6 1640.8 988.2"/><path d="M1626.4 991.4Q1632.2 986.2 1638 991.4"/><path d="M1629.2 994.6Q1632.2 992 1635.2 994.6"/></g><circle cx="1632.2" cy="997.6" r="1.4" fill="#f4f4f4"/><path d="M1652 988.8H1655L1659.5 984.8V998.6L1655 994.6H1652Z" fill="none" stroke="#f4f4f4" stroke-width="1.3" stroke-linejoin="round"/><path d="M1663 989L1668.6 994.6M1668.6 989L1663 994.6" stroke="#f4f4f4" stroke-width="1.3"/><rect x="1681" y="986.4" width="19" height="10.6" rx="2.6" fill="none" stroke="#f4f4f4" stroke-width="1.3"/><rect x="1683" y="988.4" width="15" height="6.6" rx="1.2" fill="#8fd66a"/><rect x="1701" y="989.6" width="1.8" height="4.2" rx=".9" fill="#f4f4f4"/><path d="M1691.6 982.6L1687.6 989.6H1690.6L1689.4 995L1694 987.8H1691Z" fill="#8fd66a" stroke="#1c1c30" stroke-width="1"/></svg>
<span class="t" style="left:60.4px;top:972.2px;font-size:14px;line-height:20px;color:#f4f4f4;transform:scaleX(0.9364);">6°C</span>
<span class="t" style="left:60.4px;top:991.0px;font-size:14px;line-height:20px;color:#cfcfd2;transform:scaleX(1.0155);">В осн. солнечно</span>
<span class="t" style="left:588.8px;top:980.6px;font-size:15px;line-height:21px;color:#f4f4f4;transform:scaleX(0.9624);">Поиск</span>
<span class="t" style="left:989.4px;top:974.6px;font-size:23px;line-height:32px;color:#ffffff;font-weight:700;">µ</span>
<span class="t" style="left:1245.4px;top:978.1px;font-size:18px;line-height:25px;color:#ffffff;">qb</span>
<span class="t" style="left:1423.1px;top:983.0px;font-size:11.5px;line-height:16px;color:#ffffff;">qb</span>
<span class="t" style="left:1460.9px;top:983.0px;font-size:11.5px;line-height:16px;color:#ffffff;">59</span>
<span class="t" style="left:1500.5px;top:980.5px;font-size:15px;line-height:21px;color:#ffffff;font-weight:700;">µ</span>
<span class="t" style="left:1574.5px;top:982.3px;font-size:14px;line-height:20px;color:#f4f4f4;transform:scaleX(0.8966);">ENG</span>
<span class="t" style="left:1764.0px;top:971.9px;font-size:14.5px;line-height:20px;color:#f4f4f4;transform:scaleX(0.9214);">9:15</span>
<span class="t" style="left:1723.1px;top:990.9px;font-size:14.5px;line-height:20px;color:#f4f4f4;transform:scaleX(0.9220);">30.03.2026</span>
</body></html>
